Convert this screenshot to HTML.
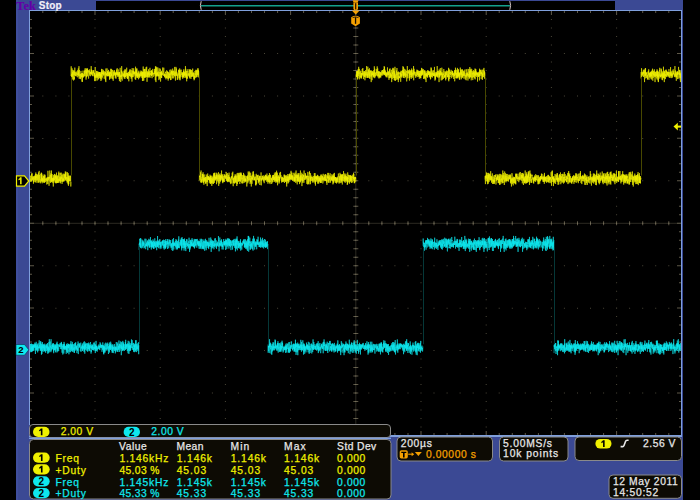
<!DOCTYPE html>
<html><head><meta charset="utf-8"><style>
html,body{margin:0;padding:0;background:#000;width:700px;height:500px;overflow:hidden}
body{position:relative;font-family:"Liberation Sans",sans-serif}
svg{position:absolute;left:0;top:0}
.t{position:absolute;white-space:nowrap;line-height:1;transform-origin:0 0}
.p{position:absolute;text-align:center;color:#000;font-weight:bold;font-size:10px}
</style></head><body>
<svg width="700" height="500" viewBox="0 0 700 500" shape-rendering="auto">
<rect x="16" y="0" width="667" height="500" fill="#3b4994"/>
<rect x="16" y="0" width="2" height="500" fill="#4252a4" opacity="0.6"/>
<rect x="96" y="1" width="519" height="9" fill="#000"/>
<rect x="30" y="11" width="651" height="424" fill="#000"/>
<path d="M42.3 53.0h1v1h-1zM55.4 53.0h1v1h-1zM68.4 53.0h1v1h-1zM81.5 53.0h1v1h-1zM94.5 53.0h1v1h-1zM107.5 53.0h1v1h-1zM120.6 53.0h1v1h-1zM133.6 53.0h1v1h-1zM146.7 53.0h1v1h-1zM159.7 53.0h1v1h-1zM172.7 53.0h1v1h-1zM185.8 53.0h1v1h-1zM198.8 53.0h1v1h-1zM211.9 53.0h1v1h-1zM224.9 53.0h1v1h-1zM237.9 53.0h1v1h-1zM251.0 53.0h1v1h-1zM264.0 53.0h1v1h-1zM277.1 53.0h1v1h-1zM290.1 53.0h1v1h-1zM303.1 53.0h1v1h-1zM316.2 53.0h1v1h-1zM329.2 53.0h1v1h-1zM342.3 53.0h1v1h-1zM355.3 53.0h1v1h-1zM368.3 53.0h1v1h-1zM381.4 53.0h1v1h-1zM394.4 53.0h1v1h-1zM407.5 53.0h1v1h-1zM420.5 53.0h1v1h-1zM433.5 53.0h1v1h-1zM446.6 53.0h1v1h-1zM459.6 53.0h1v1h-1zM472.7 53.0h1v1h-1zM485.7 53.0h1v1h-1zM498.7 53.0h1v1h-1zM511.8 53.0h1v1h-1zM524.8 53.0h1v1h-1zM537.9 53.0h1v1h-1zM550.9 53.0h1v1h-1zM563.9 53.0h1v1h-1zM577.0 53.0h1v1h-1zM590.0 53.0h1v1h-1zM603.1 53.0h1v1h-1zM616.1 53.0h1v1h-1zM629.1 53.0h1v1h-1zM642.2 53.0h1v1h-1zM655.2 53.0h1v1h-1zM668.3 53.0h1v1h-1zM42.3 95.4h1v1h-1zM55.4 95.4h1v1h-1zM68.4 95.4h1v1h-1zM81.5 95.4h1v1h-1zM94.5 95.4h1v1h-1zM107.5 95.4h1v1h-1zM120.6 95.4h1v1h-1zM133.6 95.4h1v1h-1zM146.7 95.4h1v1h-1zM159.7 95.4h1v1h-1zM172.7 95.4h1v1h-1zM185.8 95.4h1v1h-1zM198.8 95.4h1v1h-1zM211.9 95.4h1v1h-1zM224.9 95.4h1v1h-1zM237.9 95.4h1v1h-1zM251.0 95.4h1v1h-1zM264.0 95.4h1v1h-1zM277.1 95.4h1v1h-1zM290.1 95.4h1v1h-1zM303.1 95.4h1v1h-1zM316.2 95.4h1v1h-1zM329.2 95.4h1v1h-1zM342.3 95.4h1v1h-1zM355.3 95.4h1v1h-1zM368.3 95.4h1v1h-1zM381.4 95.4h1v1h-1zM394.4 95.4h1v1h-1zM407.5 95.4h1v1h-1zM420.5 95.4h1v1h-1zM433.5 95.4h1v1h-1zM446.6 95.4h1v1h-1zM459.6 95.4h1v1h-1zM472.7 95.4h1v1h-1zM485.7 95.4h1v1h-1zM498.7 95.4h1v1h-1zM511.8 95.4h1v1h-1zM524.8 95.4h1v1h-1zM537.9 95.4h1v1h-1zM550.9 95.4h1v1h-1zM563.9 95.4h1v1h-1zM577.0 95.4h1v1h-1zM590.0 95.4h1v1h-1zM603.1 95.4h1v1h-1zM616.1 95.4h1v1h-1zM629.1 95.4h1v1h-1zM642.2 95.4h1v1h-1zM655.2 95.4h1v1h-1zM668.3 95.4h1v1h-1zM42.3 137.9h1v1h-1zM55.4 137.9h1v1h-1zM68.4 137.9h1v1h-1zM81.5 137.9h1v1h-1zM94.5 137.9h1v1h-1zM107.5 137.9h1v1h-1zM120.6 137.9h1v1h-1zM133.6 137.9h1v1h-1zM146.7 137.9h1v1h-1zM159.7 137.9h1v1h-1zM172.7 137.9h1v1h-1zM185.8 137.9h1v1h-1zM198.8 137.9h1v1h-1zM211.9 137.9h1v1h-1zM224.9 137.9h1v1h-1zM237.9 137.9h1v1h-1zM251.0 137.9h1v1h-1zM264.0 137.9h1v1h-1zM277.1 137.9h1v1h-1zM290.1 137.9h1v1h-1zM303.1 137.9h1v1h-1zM316.2 137.9h1v1h-1zM329.2 137.9h1v1h-1zM342.3 137.9h1v1h-1zM355.3 137.9h1v1h-1zM368.3 137.9h1v1h-1zM381.4 137.9h1v1h-1zM394.4 137.9h1v1h-1zM407.5 137.9h1v1h-1zM420.5 137.9h1v1h-1zM433.5 137.9h1v1h-1zM446.6 137.9h1v1h-1zM459.6 137.9h1v1h-1zM472.7 137.9h1v1h-1zM485.7 137.9h1v1h-1zM498.7 137.9h1v1h-1zM511.8 137.9h1v1h-1zM524.8 137.9h1v1h-1zM537.9 137.9h1v1h-1zM550.9 137.9h1v1h-1zM563.9 137.9h1v1h-1zM577.0 137.9h1v1h-1zM590.0 137.9h1v1h-1zM603.1 137.9h1v1h-1zM616.1 137.9h1v1h-1zM629.1 137.9h1v1h-1zM642.2 137.9h1v1h-1zM655.2 137.9h1v1h-1zM668.3 137.9h1v1h-1zM42.3 180.3h1v1h-1zM55.4 180.3h1v1h-1zM68.4 180.3h1v1h-1zM81.5 180.3h1v1h-1zM94.5 180.3h1v1h-1zM107.5 180.3h1v1h-1zM120.6 180.3h1v1h-1zM133.6 180.3h1v1h-1zM146.7 180.3h1v1h-1zM159.7 180.3h1v1h-1zM172.7 180.3h1v1h-1zM185.8 180.3h1v1h-1zM198.8 180.3h1v1h-1zM211.9 180.3h1v1h-1zM224.9 180.3h1v1h-1zM237.9 180.3h1v1h-1zM251.0 180.3h1v1h-1zM264.0 180.3h1v1h-1zM277.1 180.3h1v1h-1zM290.1 180.3h1v1h-1zM303.1 180.3h1v1h-1zM316.2 180.3h1v1h-1zM329.2 180.3h1v1h-1zM342.3 180.3h1v1h-1zM355.3 180.3h1v1h-1zM368.3 180.3h1v1h-1zM381.4 180.3h1v1h-1zM394.4 180.3h1v1h-1zM407.5 180.3h1v1h-1zM420.5 180.3h1v1h-1zM433.5 180.3h1v1h-1zM446.6 180.3h1v1h-1zM459.6 180.3h1v1h-1zM472.7 180.3h1v1h-1zM485.7 180.3h1v1h-1zM498.7 180.3h1v1h-1zM511.8 180.3h1v1h-1zM524.8 180.3h1v1h-1zM537.9 180.3h1v1h-1zM550.9 180.3h1v1h-1zM563.9 180.3h1v1h-1zM577.0 180.3h1v1h-1zM590.0 180.3h1v1h-1zM603.1 180.3h1v1h-1zM616.1 180.3h1v1h-1zM629.1 180.3h1v1h-1zM642.2 180.3h1v1h-1zM655.2 180.3h1v1h-1zM668.3 180.3h1v1h-1zM42.3 265.2h1v1h-1zM55.4 265.2h1v1h-1zM68.4 265.2h1v1h-1zM81.5 265.2h1v1h-1zM94.5 265.2h1v1h-1zM107.5 265.2h1v1h-1zM120.6 265.2h1v1h-1zM133.6 265.2h1v1h-1zM146.7 265.2h1v1h-1zM159.7 265.2h1v1h-1zM172.7 265.2h1v1h-1zM185.8 265.2h1v1h-1zM198.8 265.2h1v1h-1zM211.9 265.2h1v1h-1zM224.9 265.2h1v1h-1zM237.9 265.2h1v1h-1zM251.0 265.2h1v1h-1zM264.0 265.2h1v1h-1zM277.1 265.2h1v1h-1zM290.1 265.2h1v1h-1zM303.1 265.2h1v1h-1zM316.2 265.2h1v1h-1zM329.2 265.2h1v1h-1zM342.3 265.2h1v1h-1zM355.3 265.2h1v1h-1zM368.3 265.2h1v1h-1zM381.4 265.2h1v1h-1zM394.4 265.2h1v1h-1zM407.5 265.2h1v1h-1zM420.5 265.2h1v1h-1zM433.5 265.2h1v1h-1zM446.6 265.2h1v1h-1zM459.6 265.2h1v1h-1zM472.7 265.2h1v1h-1zM485.7 265.2h1v1h-1zM498.7 265.2h1v1h-1zM511.8 265.2h1v1h-1zM524.8 265.2h1v1h-1zM537.9 265.2h1v1h-1zM550.9 265.2h1v1h-1zM563.9 265.2h1v1h-1zM577.0 265.2h1v1h-1zM590.0 265.2h1v1h-1zM603.1 265.2h1v1h-1zM616.1 265.2h1v1h-1zM629.1 265.2h1v1h-1zM642.2 265.2h1v1h-1zM655.2 265.2h1v1h-1zM668.3 265.2h1v1h-1zM42.3 307.7h1v1h-1zM55.4 307.7h1v1h-1zM68.4 307.7h1v1h-1zM81.5 307.7h1v1h-1zM94.5 307.7h1v1h-1zM107.5 307.7h1v1h-1zM120.6 307.7h1v1h-1zM133.6 307.7h1v1h-1zM146.7 307.7h1v1h-1zM159.7 307.7h1v1h-1zM172.7 307.7h1v1h-1zM185.8 307.7h1v1h-1zM198.8 307.7h1v1h-1zM211.9 307.7h1v1h-1zM224.9 307.7h1v1h-1zM237.9 307.7h1v1h-1zM251.0 307.7h1v1h-1zM264.0 307.7h1v1h-1zM277.1 307.7h1v1h-1zM290.1 307.7h1v1h-1zM303.1 307.7h1v1h-1zM316.2 307.7h1v1h-1zM329.2 307.7h1v1h-1zM342.3 307.7h1v1h-1zM355.3 307.7h1v1h-1zM368.3 307.7h1v1h-1zM381.4 307.7h1v1h-1zM394.4 307.7h1v1h-1zM407.5 307.7h1v1h-1zM420.5 307.7h1v1h-1zM433.5 307.7h1v1h-1zM446.6 307.7h1v1h-1zM459.6 307.7h1v1h-1zM472.7 307.7h1v1h-1zM485.7 307.7h1v1h-1zM498.7 307.7h1v1h-1zM511.8 307.7h1v1h-1zM524.8 307.7h1v1h-1zM537.9 307.7h1v1h-1zM550.9 307.7h1v1h-1zM563.9 307.7h1v1h-1zM577.0 307.7h1v1h-1zM590.0 307.7h1v1h-1zM603.1 307.7h1v1h-1zM616.1 307.7h1v1h-1zM629.1 307.7h1v1h-1zM642.2 307.7h1v1h-1zM655.2 307.7h1v1h-1zM668.3 307.7h1v1h-1zM42.3 350.1h1v1h-1zM55.4 350.1h1v1h-1zM68.4 350.1h1v1h-1zM81.5 350.1h1v1h-1zM94.5 350.1h1v1h-1zM107.5 350.1h1v1h-1zM120.6 350.1h1v1h-1zM133.6 350.1h1v1h-1zM146.7 350.1h1v1h-1zM159.7 350.1h1v1h-1zM172.7 350.1h1v1h-1zM185.8 350.1h1v1h-1zM198.8 350.1h1v1h-1zM211.9 350.1h1v1h-1zM224.9 350.1h1v1h-1zM237.9 350.1h1v1h-1zM251.0 350.1h1v1h-1zM264.0 350.1h1v1h-1zM277.1 350.1h1v1h-1zM290.1 350.1h1v1h-1zM303.1 350.1h1v1h-1zM316.2 350.1h1v1h-1zM329.2 350.1h1v1h-1zM342.3 350.1h1v1h-1zM355.3 350.1h1v1h-1zM368.3 350.1h1v1h-1zM381.4 350.1h1v1h-1zM394.4 350.1h1v1h-1zM407.5 350.1h1v1h-1zM420.5 350.1h1v1h-1zM433.5 350.1h1v1h-1zM446.6 350.1h1v1h-1zM459.6 350.1h1v1h-1zM472.7 350.1h1v1h-1zM485.7 350.1h1v1h-1zM498.7 350.1h1v1h-1zM511.8 350.1h1v1h-1zM524.8 350.1h1v1h-1zM537.9 350.1h1v1h-1zM550.9 350.1h1v1h-1zM563.9 350.1h1v1h-1zM577.0 350.1h1v1h-1zM590.0 350.1h1v1h-1zM603.1 350.1h1v1h-1zM616.1 350.1h1v1h-1zM629.1 350.1h1v1h-1zM642.2 350.1h1v1h-1zM655.2 350.1h1v1h-1zM668.3 350.1h1v1h-1zM42.3 392.6h1v1h-1zM55.4 392.6h1v1h-1zM68.4 392.6h1v1h-1zM81.5 392.6h1v1h-1zM94.5 392.6h1v1h-1zM107.5 392.6h1v1h-1zM120.6 392.6h1v1h-1zM133.6 392.6h1v1h-1zM146.7 392.6h1v1h-1zM159.7 392.6h1v1h-1zM172.7 392.6h1v1h-1zM185.8 392.6h1v1h-1zM198.8 392.6h1v1h-1zM211.9 392.6h1v1h-1zM224.9 392.6h1v1h-1zM237.9 392.6h1v1h-1zM251.0 392.6h1v1h-1zM264.0 392.6h1v1h-1zM277.1 392.6h1v1h-1zM290.1 392.6h1v1h-1zM303.1 392.6h1v1h-1zM316.2 392.6h1v1h-1zM329.2 392.6h1v1h-1zM342.3 392.6h1v1h-1zM355.3 392.6h1v1h-1zM368.3 392.6h1v1h-1zM381.4 392.6h1v1h-1zM394.4 392.6h1v1h-1zM407.5 392.6h1v1h-1zM420.5 392.6h1v1h-1zM433.5 392.6h1v1h-1zM446.6 392.6h1v1h-1zM459.6 392.6h1v1h-1zM472.7 392.6h1v1h-1zM485.7 392.6h1v1h-1zM498.7 392.6h1v1h-1zM511.8 392.6h1v1h-1zM524.8 392.6h1v1h-1zM537.9 392.6h1v1h-1zM550.9 392.6h1v1h-1zM563.9 392.6h1v1h-1zM577.0 392.6h1v1h-1zM590.0 392.6h1v1h-1zM603.1 392.6h1v1h-1zM616.1 392.6h1v1h-1zM629.1 392.6h1v1h-1zM642.2 392.6h1v1h-1zM655.2 392.6h1v1h-1zM668.3 392.6h1v1h-1zM94.5 19.0h1v1h-1zM94.5 27.5h1v1h-1zM94.5 36.0h1v1h-1zM94.5 44.5h1v1h-1zM94.5 53.0h1v1h-1zM94.5 61.4h1v1h-1zM94.5 69.9h1v1h-1zM94.5 78.4h1v1h-1zM94.5 86.9h1v1h-1zM94.5 95.4h1v1h-1zM94.5 103.9h1v1h-1zM94.5 112.4h1v1h-1zM94.5 120.9h1v1h-1zM94.5 129.4h1v1h-1zM94.5 137.8h1v1h-1zM94.5 146.3h1v1h-1zM94.5 154.8h1v1h-1zM94.5 163.3h1v1h-1zM94.5 171.8h1v1h-1zM94.5 180.3h1v1h-1zM94.5 188.8h1v1h-1zM94.5 197.3h1v1h-1zM94.5 205.8h1v1h-1zM94.5 214.3h1v1h-1zM94.5 222.8h1v1h-1zM94.5 231.2h1v1h-1zM94.5 239.7h1v1h-1zM94.5 248.2h1v1h-1zM94.5 256.7h1v1h-1zM94.5 265.2h1v1h-1zM94.5 273.7h1v1h-1zM94.5 282.2h1v1h-1zM94.5 290.7h1v1h-1zM94.5 299.2h1v1h-1zM94.5 307.6h1v1h-1zM94.5 316.1h1v1h-1zM94.5 324.6h1v1h-1zM94.5 333.1h1v1h-1zM94.5 341.6h1v1h-1zM94.5 350.1h1v1h-1zM94.5 358.6h1v1h-1zM94.5 367.1h1v1h-1zM94.5 375.6h1v1h-1zM94.5 384.1h1v1h-1zM94.5 392.6h1v1h-1zM94.5 401.0h1v1h-1zM94.5 409.5h1v1h-1zM94.5 418.0h1v1h-1zM94.5 426.5h1v1h-1zM159.7 19.0h1v1h-1zM159.7 27.5h1v1h-1zM159.7 36.0h1v1h-1zM159.7 44.5h1v1h-1zM159.7 53.0h1v1h-1zM159.7 61.4h1v1h-1zM159.7 69.9h1v1h-1zM159.7 78.4h1v1h-1zM159.7 86.9h1v1h-1zM159.7 95.4h1v1h-1zM159.7 103.9h1v1h-1zM159.7 112.4h1v1h-1zM159.7 120.9h1v1h-1zM159.7 129.4h1v1h-1zM159.7 137.8h1v1h-1zM159.7 146.3h1v1h-1zM159.7 154.8h1v1h-1zM159.7 163.3h1v1h-1zM159.7 171.8h1v1h-1zM159.7 180.3h1v1h-1zM159.7 188.8h1v1h-1zM159.7 197.3h1v1h-1zM159.7 205.8h1v1h-1zM159.7 214.3h1v1h-1zM159.7 222.8h1v1h-1zM159.7 231.2h1v1h-1zM159.7 239.7h1v1h-1zM159.7 248.2h1v1h-1zM159.7 256.7h1v1h-1zM159.7 265.2h1v1h-1zM159.7 273.7h1v1h-1zM159.7 282.2h1v1h-1zM159.7 290.7h1v1h-1zM159.7 299.2h1v1h-1zM159.7 307.6h1v1h-1zM159.7 316.1h1v1h-1zM159.7 324.6h1v1h-1zM159.7 333.1h1v1h-1zM159.7 341.6h1v1h-1zM159.7 350.1h1v1h-1zM159.7 358.6h1v1h-1zM159.7 367.1h1v1h-1zM159.7 375.6h1v1h-1zM159.7 384.1h1v1h-1zM159.7 392.6h1v1h-1zM159.7 401.0h1v1h-1zM159.7 409.5h1v1h-1zM159.7 418.0h1v1h-1zM159.7 426.5h1v1h-1zM224.9 19.0h1v1h-1zM224.9 27.5h1v1h-1zM224.9 36.0h1v1h-1zM224.9 44.5h1v1h-1zM224.9 53.0h1v1h-1zM224.9 61.4h1v1h-1zM224.9 69.9h1v1h-1zM224.9 78.4h1v1h-1zM224.9 86.9h1v1h-1zM224.9 95.4h1v1h-1zM224.9 103.9h1v1h-1zM224.9 112.4h1v1h-1zM224.9 120.9h1v1h-1zM224.9 129.4h1v1h-1zM224.9 137.8h1v1h-1zM224.9 146.3h1v1h-1zM224.9 154.8h1v1h-1zM224.9 163.3h1v1h-1zM224.9 171.8h1v1h-1zM224.9 180.3h1v1h-1zM224.9 188.8h1v1h-1zM224.9 197.3h1v1h-1zM224.9 205.8h1v1h-1zM224.9 214.3h1v1h-1zM224.9 222.8h1v1h-1zM224.9 231.2h1v1h-1zM224.9 239.7h1v1h-1zM224.9 248.2h1v1h-1zM224.9 256.7h1v1h-1zM224.9 265.2h1v1h-1zM224.9 273.7h1v1h-1zM224.9 282.2h1v1h-1zM224.9 290.7h1v1h-1zM224.9 299.2h1v1h-1zM224.9 307.6h1v1h-1zM224.9 316.1h1v1h-1zM224.9 324.6h1v1h-1zM224.9 333.1h1v1h-1zM224.9 341.6h1v1h-1zM224.9 350.1h1v1h-1zM224.9 358.6h1v1h-1zM224.9 367.1h1v1h-1zM224.9 375.6h1v1h-1zM224.9 384.1h1v1h-1zM224.9 392.6h1v1h-1zM224.9 401.0h1v1h-1zM224.9 409.5h1v1h-1zM224.9 418.0h1v1h-1zM224.9 426.5h1v1h-1zM290.1 19.0h1v1h-1zM290.1 27.5h1v1h-1zM290.1 36.0h1v1h-1zM290.1 44.5h1v1h-1zM290.1 53.0h1v1h-1zM290.1 61.4h1v1h-1zM290.1 69.9h1v1h-1zM290.1 78.4h1v1h-1zM290.1 86.9h1v1h-1zM290.1 95.4h1v1h-1zM290.1 103.9h1v1h-1zM290.1 112.4h1v1h-1zM290.1 120.9h1v1h-1zM290.1 129.4h1v1h-1zM290.1 137.8h1v1h-1zM290.1 146.3h1v1h-1zM290.1 154.8h1v1h-1zM290.1 163.3h1v1h-1zM290.1 171.8h1v1h-1zM290.1 180.3h1v1h-1zM290.1 188.8h1v1h-1zM290.1 197.3h1v1h-1zM290.1 205.8h1v1h-1zM290.1 214.3h1v1h-1zM290.1 222.8h1v1h-1zM290.1 231.2h1v1h-1zM290.1 239.7h1v1h-1zM290.1 248.2h1v1h-1zM290.1 256.7h1v1h-1zM290.1 265.2h1v1h-1zM290.1 273.7h1v1h-1zM290.1 282.2h1v1h-1zM290.1 290.7h1v1h-1zM290.1 299.2h1v1h-1zM290.1 307.6h1v1h-1zM290.1 316.1h1v1h-1zM290.1 324.6h1v1h-1zM290.1 333.1h1v1h-1zM290.1 341.6h1v1h-1zM290.1 350.1h1v1h-1zM290.1 358.6h1v1h-1zM290.1 367.1h1v1h-1zM290.1 375.6h1v1h-1zM290.1 384.1h1v1h-1zM290.1 392.6h1v1h-1zM290.1 401.0h1v1h-1zM290.1 409.5h1v1h-1zM290.1 418.0h1v1h-1zM290.1 426.5h1v1h-1zM420.5 19.0h1v1h-1zM420.5 27.5h1v1h-1zM420.5 36.0h1v1h-1zM420.5 44.5h1v1h-1zM420.5 53.0h1v1h-1zM420.5 61.4h1v1h-1zM420.5 69.9h1v1h-1zM420.5 78.4h1v1h-1zM420.5 86.9h1v1h-1zM420.5 95.4h1v1h-1zM420.5 103.9h1v1h-1zM420.5 112.4h1v1h-1zM420.5 120.9h1v1h-1zM420.5 129.4h1v1h-1zM420.5 137.8h1v1h-1zM420.5 146.3h1v1h-1zM420.5 154.8h1v1h-1zM420.5 163.3h1v1h-1zM420.5 171.8h1v1h-1zM420.5 180.3h1v1h-1zM420.5 188.8h1v1h-1zM420.5 197.3h1v1h-1zM420.5 205.8h1v1h-1zM420.5 214.3h1v1h-1zM420.5 222.8h1v1h-1zM420.5 231.2h1v1h-1zM420.5 239.7h1v1h-1zM420.5 248.2h1v1h-1zM420.5 256.7h1v1h-1zM420.5 265.2h1v1h-1zM420.5 273.7h1v1h-1zM420.5 282.2h1v1h-1zM420.5 290.7h1v1h-1zM420.5 299.2h1v1h-1zM420.5 307.6h1v1h-1zM420.5 316.1h1v1h-1zM420.5 324.6h1v1h-1zM420.5 333.1h1v1h-1zM420.5 341.6h1v1h-1zM420.5 350.1h1v1h-1zM420.5 358.6h1v1h-1zM420.5 367.1h1v1h-1zM420.5 375.6h1v1h-1zM420.5 384.1h1v1h-1zM420.5 392.6h1v1h-1zM420.5 401.0h1v1h-1zM420.5 409.5h1v1h-1zM420.5 418.0h1v1h-1zM420.5 426.5h1v1h-1zM485.7 19.0h1v1h-1zM485.7 27.5h1v1h-1zM485.7 36.0h1v1h-1zM485.7 44.5h1v1h-1zM485.7 53.0h1v1h-1zM485.7 61.4h1v1h-1zM485.7 69.9h1v1h-1zM485.7 78.4h1v1h-1zM485.7 86.9h1v1h-1zM485.7 95.4h1v1h-1zM485.7 103.9h1v1h-1zM485.7 112.4h1v1h-1zM485.7 120.9h1v1h-1zM485.7 129.4h1v1h-1zM485.7 137.8h1v1h-1zM485.7 146.3h1v1h-1zM485.7 154.8h1v1h-1zM485.7 163.3h1v1h-1zM485.7 171.8h1v1h-1zM485.7 180.3h1v1h-1zM485.7 188.8h1v1h-1zM485.7 197.3h1v1h-1zM485.7 205.8h1v1h-1zM485.7 214.3h1v1h-1zM485.7 222.8h1v1h-1zM485.7 231.2h1v1h-1zM485.7 239.7h1v1h-1zM485.7 248.2h1v1h-1zM485.7 256.7h1v1h-1zM485.7 265.2h1v1h-1zM485.7 273.7h1v1h-1zM485.7 282.2h1v1h-1zM485.7 290.7h1v1h-1zM485.7 299.2h1v1h-1zM485.7 307.6h1v1h-1zM485.7 316.1h1v1h-1zM485.7 324.6h1v1h-1zM485.7 333.1h1v1h-1zM485.7 341.6h1v1h-1zM485.7 350.1h1v1h-1zM485.7 358.6h1v1h-1zM485.7 367.1h1v1h-1zM485.7 375.6h1v1h-1zM485.7 384.1h1v1h-1zM485.7 392.6h1v1h-1zM485.7 401.0h1v1h-1zM485.7 409.5h1v1h-1zM485.7 418.0h1v1h-1zM485.7 426.5h1v1h-1zM550.9 19.0h1v1h-1zM550.9 27.5h1v1h-1zM550.9 36.0h1v1h-1zM550.9 44.5h1v1h-1zM550.9 53.0h1v1h-1zM550.9 61.4h1v1h-1zM550.9 69.9h1v1h-1zM550.9 78.4h1v1h-1zM550.9 86.9h1v1h-1zM550.9 95.4h1v1h-1zM550.9 103.9h1v1h-1zM550.9 112.4h1v1h-1zM550.9 120.9h1v1h-1zM550.9 129.4h1v1h-1zM550.9 137.8h1v1h-1zM550.9 146.3h1v1h-1zM550.9 154.8h1v1h-1zM550.9 163.3h1v1h-1zM550.9 171.8h1v1h-1zM550.9 180.3h1v1h-1zM550.9 188.8h1v1h-1zM550.9 197.3h1v1h-1zM550.9 205.8h1v1h-1zM550.9 214.3h1v1h-1zM550.9 222.8h1v1h-1zM550.9 231.2h1v1h-1zM550.9 239.7h1v1h-1zM550.9 248.2h1v1h-1zM550.9 256.7h1v1h-1zM550.9 265.2h1v1h-1zM550.9 273.7h1v1h-1zM550.9 282.2h1v1h-1zM550.9 290.7h1v1h-1zM550.9 299.2h1v1h-1zM550.9 307.6h1v1h-1zM550.9 316.1h1v1h-1zM550.9 324.6h1v1h-1zM550.9 333.1h1v1h-1zM550.9 341.6h1v1h-1zM550.9 350.1h1v1h-1zM550.9 358.6h1v1h-1zM550.9 367.1h1v1h-1zM550.9 375.6h1v1h-1zM550.9 384.1h1v1h-1zM550.9 392.6h1v1h-1zM550.9 401.0h1v1h-1zM550.9 409.5h1v1h-1zM550.9 418.0h1v1h-1zM550.9 426.5h1v1h-1zM616.1 19.0h1v1h-1zM616.1 27.5h1v1h-1zM616.1 36.0h1v1h-1zM616.1 44.5h1v1h-1zM616.1 53.0h1v1h-1zM616.1 61.4h1v1h-1zM616.1 69.9h1v1h-1zM616.1 78.4h1v1h-1zM616.1 86.9h1v1h-1zM616.1 95.4h1v1h-1zM616.1 103.9h1v1h-1zM616.1 112.4h1v1h-1zM616.1 120.9h1v1h-1zM616.1 129.4h1v1h-1zM616.1 137.8h1v1h-1zM616.1 146.3h1v1h-1zM616.1 154.8h1v1h-1zM616.1 163.3h1v1h-1zM616.1 171.8h1v1h-1zM616.1 180.3h1v1h-1zM616.1 188.8h1v1h-1zM616.1 197.3h1v1h-1zM616.1 205.8h1v1h-1zM616.1 214.3h1v1h-1zM616.1 222.8h1v1h-1zM616.1 231.2h1v1h-1zM616.1 239.7h1v1h-1zM616.1 248.2h1v1h-1zM616.1 256.7h1v1h-1zM616.1 265.2h1v1h-1zM616.1 273.7h1v1h-1zM616.1 282.2h1v1h-1zM616.1 290.7h1v1h-1zM616.1 299.2h1v1h-1zM616.1 307.6h1v1h-1zM616.1 316.1h1v1h-1zM616.1 324.6h1v1h-1zM616.1 333.1h1v1h-1zM616.1 341.6h1v1h-1zM616.1 350.1h1v1h-1zM616.1 358.6h1v1h-1zM616.1 367.1h1v1h-1zM616.1 375.6h1v1h-1zM616.1 384.1h1v1h-1zM616.1 392.6h1v1h-1zM616.1 401.0h1v1h-1zM616.1 409.5h1v1h-1zM616.1 418.0h1v1h-1zM616.1 426.5h1v1h-1z" fill="#4a4638"/>
<rect x="355.3" y="11" width="1" height="424" fill="#2c2a22"/>
<rect x="30" y="222.8" width="651" height="1" fill="#2c2a22"/>
<path d="M42.3 221.2h1v4h-1zM353.3 19.0h5v1h-5zM55.4 221.2h1v4h-1zM353.3 27.5h5v1h-5zM68.4 221.2h1v4h-1zM353.3 36.0h5v1h-5zM81.5 221.2h1v4h-1zM353.3 44.5h5v1h-5zM94.5 221.2h1v4h-1zM353.3 53.0h5v1h-5zM107.5 221.2h1v4h-1zM353.3 61.4h5v1h-5zM120.6 221.2h1v4h-1zM353.3 69.9h5v1h-5zM133.6 221.2h1v4h-1zM353.3 78.4h5v1h-5zM146.7 221.2h1v4h-1zM353.3 86.9h5v1h-5zM159.7 221.2h1v4h-1zM353.3 95.4h5v1h-5zM172.7 221.2h1v4h-1zM353.3 103.9h5v1h-5zM185.8 221.2h1v4h-1zM353.3 112.4h5v1h-5zM198.8 221.2h1v4h-1zM353.3 120.9h5v1h-5zM211.9 221.2h1v4h-1zM353.3 129.4h5v1h-5zM224.9 221.2h1v4h-1zM353.3 137.8h5v1h-5zM237.9 221.2h1v4h-1zM353.3 146.3h5v1h-5zM251.0 221.2h1v4h-1zM353.3 154.8h5v1h-5zM264.0 221.2h1v4h-1zM353.3 163.3h5v1h-5zM277.1 221.2h1v4h-1zM353.3 171.8h5v1h-5zM290.1 221.2h1v4h-1zM353.3 180.3h5v1h-5zM303.1 221.2h1v4h-1zM353.3 188.8h5v1h-5zM316.2 221.2h1v4h-1zM353.3 197.3h5v1h-5zM329.2 221.2h1v4h-1zM353.3 205.8h5v1h-5zM342.3 221.2h1v4h-1zM353.3 214.3h5v1h-5zM355.3 221.2h1v4h-1zM353.3 222.8h5v1h-5zM368.3 221.2h1v4h-1zM353.3 231.2h5v1h-5zM381.4 221.2h1v4h-1zM353.3 239.7h5v1h-5zM394.4 221.2h1v4h-1zM353.3 248.2h5v1h-5zM407.5 221.2h1v4h-1zM353.3 256.7h5v1h-5zM420.5 221.2h1v4h-1zM353.3 265.2h5v1h-5zM433.5 221.2h1v4h-1zM353.3 273.7h5v1h-5zM446.6 221.2h1v4h-1zM353.3 282.2h5v1h-5zM459.6 221.2h1v4h-1zM353.3 290.7h5v1h-5zM472.7 221.2h1v4h-1zM353.3 299.2h5v1h-5zM485.7 221.2h1v4h-1zM353.3 307.6h5v1h-5zM498.7 221.2h1v4h-1zM353.3 316.1h5v1h-5zM511.8 221.2h1v4h-1zM353.3 324.6h5v1h-5zM524.8 221.2h1v4h-1zM353.3 333.1h5v1h-5zM537.9 221.2h1v4h-1zM353.3 341.6h5v1h-5zM550.9 221.2h1v4h-1zM353.3 350.1h5v1h-5zM563.9 221.2h1v4h-1zM353.3 358.6h5v1h-5zM577.0 221.2h1v4h-1zM353.3 367.1h5v1h-5zM590.0 221.2h1v4h-1zM353.3 375.6h5v1h-5zM603.1 221.2h1v4h-1zM353.3 384.1h5v1h-5zM616.1 221.2h1v4h-1zM353.3 392.6h5v1h-5zM629.1 221.2h1v4h-1zM353.3 401.0h5v1h-5zM642.2 221.2h1v4h-1zM353.3 409.5h5v1h-5zM655.2 221.2h1v4h-1zM353.3 418.0h5v1h-5zM668.3 221.2h1v4h-1zM353.3 426.5h5v1h-5zM42.3 11h1v2h-1zM42.3 433h1v2h-1zM30 19.0h2v1h-2zM679 19.0h2v1h-2zM55.4 11h1v2h-1zM55.4 433h1v2h-1zM30 27.5h2v1h-2zM679 27.5h2v1h-2zM68.4 11h1v2h-1zM68.4 433h1v2h-1zM30 36.0h2v1h-2zM679 36.0h2v1h-2zM81.5 11h1v2h-1zM81.5 433h1v2h-1zM30 44.5h2v1h-2zM679 44.5h2v1h-2zM94.5 11h1v4h-1zM94.5 431h1v4h-1zM30 53.0h4v1h-4zM677 53.0h4v1h-4zM107.5 11h1v2h-1zM107.5 433h1v2h-1zM30 61.4h2v1h-2zM679 61.4h2v1h-2zM120.6 11h1v2h-1zM120.6 433h1v2h-1zM30 69.9h2v1h-2zM679 69.9h2v1h-2zM133.6 11h1v2h-1zM133.6 433h1v2h-1zM30 78.4h2v1h-2zM679 78.4h2v1h-2zM146.7 11h1v2h-1zM146.7 433h1v2h-1zM30 86.9h2v1h-2zM679 86.9h2v1h-2zM159.7 11h1v4h-1zM159.7 431h1v4h-1zM30 95.4h4v1h-4zM677 95.4h4v1h-4zM172.7 11h1v2h-1zM172.7 433h1v2h-1zM30 103.9h2v1h-2zM679 103.9h2v1h-2zM185.8 11h1v2h-1zM185.8 433h1v2h-1zM30 112.4h2v1h-2zM679 112.4h2v1h-2zM198.8 11h1v2h-1zM198.8 433h1v2h-1zM30 120.9h2v1h-2zM679 120.9h2v1h-2zM211.9 11h1v2h-1zM211.9 433h1v2h-1zM30 129.4h2v1h-2zM679 129.4h2v1h-2zM224.9 11h1v4h-1zM224.9 431h1v4h-1zM30 137.8h4v1h-4zM677 137.8h4v1h-4zM237.9 11h1v2h-1zM237.9 433h1v2h-1zM30 146.3h2v1h-2zM679 146.3h2v1h-2zM251.0 11h1v2h-1zM251.0 433h1v2h-1zM30 154.8h2v1h-2zM679 154.8h2v1h-2zM264.0 11h1v2h-1zM264.0 433h1v2h-1zM30 163.3h2v1h-2zM679 163.3h2v1h-2zM277.1 11h1v2h-1zM277.1 433h1v2h-1zM30 171.8h2v1h-2zM679 171.8h2v1h-2zM290.1 11h1v4h-1zM290.1 431h1v4h-1zM30 180.3h4v1h-4zM677 180.3h4v1h-4zM303.1 11h1v2h-1zM303.1 433h1v2h-1zM30 188.8h2v1h-2zM679 188.8h2v1h-2zM316.2 11h1v2h-1zM316.2 433h1v2h-1zM30 197.3h2v1h-2zM679 197.3h2v1h-2zM329.2 11h1v2h-1zM329.2 433h1v2h-1zM30 205.8h2v1h-2zM679 205.8h2v1h-2zM342.3 11h1v2h-1zM342.3 433h1v2h-1zM30 214.3h2v1h-2zM679 214.3h2v1h-2zM355.3 11h1v4h-1zM355.3 431h1v4h-1zM30 222.8h4v1h-4zM677 222.8h4v1h-4zM368.3 11h1v2h-1zM368.3 433h1v2h-1zM30 231.2h2v1h-2zM679 231.2h2v1h-2zM381.4 11h1v2h-1zM381.4 433h1v2h-1zM30 239.7h2v1h-2zM679 239.7h2v1h-2zM394.4 11h1v2h-1zM394.4 433h1v2h-1zM30 248.2h2v1h-2zM679 248.2h2v1h-2zM407.5 11h1v2h-1zM407.5 433h1v2h-1zM30 256.7h2v1h-2zM679 256.7h2v1h-2zM420.5 11h1v4h-1zM420.5 431h1v4h-1zM30 265.2h4v1h-4zM677 265.2h4v1h-4zM433.5 11h1v2h-1zM433.5 433h1v2h-1zM30 273.7h2v1h-2zM679 273.7h2v1h-2zM446.6 11h1v2h-1zM446.6 433h1v2h-1zM30 282.2h2v1h-2zM679 282.2h2v1h-2zM459.6 11h1v2h-1zM459.6 433h1v2h-1zM30 290.7h2v1h-2zM679 290.7h2v1h-2zM472.7 11h1v2h-1zM472.7 433h1v2h-1zM30 299.2h2v1h-2zM679 299.2h2v1h-2zM485.7 11h1v4h-1zM485.7 431h1v4h-1zM30 307.6h4v1h-4zM677 307.6h4v1h-4zM498.7 11h1v2h-1zM498.7 433h1v2h-1zM30 316.1h2v1h-2zM679 316.1h2v1h-2zM511.8 11h1v2h-1zM511.8 433h1v2h-1zM30 324.6h2v1h-2zM679 324.6h2v1h-2zM524.8 11h1v2h-1zM524.8 433h1v2h-1zM30 333.1h2v1h-2zM679 333.1h2v1h-2zM537.9 11h1v2h-1zM537.9 433h1v2h-1zM30 341.6h2v1h-2zM679 341.6h2v1h-2zM550.9 11h1v4h-1zM550.9 431h1v4h-1zM30 350.1h4v1h-4zM677 350.1h4v1h-4zM563.9 11h1v2h-1zM563.9 433h1v2h-1zM30 358.6h2v1h-2zM679 358.6h2v1h-2zM577.0 11h1v2h-1zM577.0 433h1v2h-1zM30 367.1h2v1h-2zM679 367.1h2v1h-2zM590.0 11h1v2h-1zM590.0 433h1v2h-1zM30 375.6h2v1h-2zM679 375.6h2v1h-2zM603.1 11h1v2h-1zM603.1 433h1v2h-1zM30 384.1h2v1h-2zM679 384.1h2v1h-2zM616.1 11h1v4h-1zM616.1 431h1v4h-1zM30 392.6h4v1h-4zM677 392.6h4v1h-4zM629.1 11h1v2h-1zM629.1 433h1v2h-1zM30 401.0h2v1h-2zM679 401.0h2v1h-2zM642.2 11h1v2h-1zM642.2 433h1v2h-1zM30 409.5h2v1h-2zM679 409.5h2v1h-2zM655.2 11h1v2h-1zM655.2 433h1v2h-1zM30 418.0h2v1h-2zM679 418.0h2v1h-2zM668.3 11h1v2h-1zM668.3 433h1v2h-1zM30 426.5h2v1h-2zM679 426.5h2v1h-2z" fill="#5e5848"/>
<path d="M42.3 222.8h1v1h-1zM355.3 19.0h1v1h-1zM55.4 222.8h1v1h-1zM355.3 27.5h1v1h-1zM68.4 222.8h1v1h-1zM355.3 36.0h1v1h-1zM81.5 222.8h1v1h-1zM355.3 44.5h1v1h-1zM94.5 222.8h1v1h-1zM355.3 53.0h1v1h-1zM107.5 222.8h1v1h-1zM355.3 61.4h1v1h-1zM120.6 222.8h1v1h-1zM355.3 69.9h1v1h-1zM133.6 222.8h1v1h-1zM355.3 78.4h1v1h-1zM146.7 222.8h1v1h-1zM355.3 86.9h1v1h-1zM159.7 222.8h1v1h-1zM355.3 95.4h1v1h-1zM172.7 222.8h1v1h-1zM355.3 103.9h1v1h-1zM185.8 222.8h1v1h-1zM355.3 112.4h1v1h-1zM198.8 222.8h1v1h-1zM355.3 120.9h1v1h-1zM211.9 222.8h1v1h-1zM355.3 129.4h1v1h-1zM224.9 222.8h1v1h-1zM355.3 137.8h1v1h-1zM237.9 222.8h1v1h-1zM355.3 146.3h1v1h-1zM251.0 222.8h1v1h-1zM355.3 154.8h1v1h-1zM264.0 222.8h1v1h-1zM355.3 163.3h1v1h-1zM277.1 222.8h1v1h-1zM355.3 171.8h1v1h-1zM290.1 222.8h1v1h-1zM355.3 180.3h1v1h-1zM303.1 222.8h1v1h-1zM355.3 188.8h1v1h-1zM316.2 222.8h1v1h-1zM355.3 197.3h1v1h-1zM329.2 222.8h1v1h-1zM355.3 205.8h1v1h-1zM342.3 222.8h1v1h-1zM355.3 214.3h1v1h-1zM355.3 222.8h1v1h-1zM355.3 222.8h1v1h-1zM368.3 222.8h1v1h-1zM355.3 231.2h1v1h-1zM381.4 222.8h1v1h-1zM355.3 239.7h1v1h-1zM394.4 222.8h1v1h-1zM355.3 248.2h1v1h-1zM407.5 222.8h1v1h-1zM355.3 256.7h1v1h-1zM420.5 222.8h1v1h-1zM355.3 265.2h1v1h-1zM433.5 222.8h1v1h-1zM355.3 273.7h1v1h-1zM446.6 222.8h1v1h-1zM355.3 282.2h1v1h-1zM459.6 222.8h1v1h-1zM355.3 290.7h1v1h-1zM472.7 222.8h1v1h-1zM355.3 299.2h1v1h-1zM485.7 222.8h1v1h-1zM355.3 307.6h1v1h-1zM498.7 222.8h1v1h-1zM355.3 316.1h1v1h-1zM511.8 222.8h1v1h-1zM355.3 324.6h1v1h-1zM524.8 222.8h1v1h-1zM355.3 333.1h1v1h-1zM537.9 222.8h1v1h-1zM355.3 341.6h1v1h-1zM550.9 222.8h1v1h-1zM355.3 350.1h1v1h-1zM563.9 222.8h1v1h-1zM355.3 358.6h1v1h-1zM577.0 222.8h1v1h-1zM355.3 367.1h1v1h-1zM590.0 222.8h1v1h-1zM355.3 375.6h1v1h-1zM603.1 222.8h1v1h-1zM355.3 384.1h1v1h-1zM616.1 222.8h1v1h-1zM355.3 392.6h1v1h-1zM629.1 222.8h1v1h-1zM355.3 401.0h1v1h-1zM642.2 222.8h1v1h-1zM355.3 409.5h1v1h-1zM655.2 222.8h1v1h-1zM355.3 418.0h1v1h-1zM668.3 222.8h1v1h-1zM355.3 426.5h1v1h-1z" fill="#7c7660"/>
<path d="M30.06 177.7 L30.19 180.0 L30.31 177.8 L30.44 177.6 L30.56 175.7 L30.69 177.9 L30.81 181.8 L30.94 179.8 L31.06 181.6 L31.19 179.2 L31.31 179.7 L31.44 179.1 L31.56 173.5 L31.69 181.1 L31.81 180.0 L31.94 180.0 L32.06 173.4 L32.19 173.3 L32.31 175.8 L32.44 177.1 L32.56 179.4 L32.69 178.4 L32.81 180.1 L32.94 176.6 L33.06 179.4 L33.19 179.7 L33.31 176.5 L33.44 183.7 L33.56 180.2 L33.69 182.1 L33.81 176.6 L33.94 176.3 L34.06 177.5 L34.19 178.2 L34.31 180.4 L34.44 179.2 L34.56 177.2 L34.69 175.6 L34.81 176.9 L34.94 182.2 L35.06 176.1 L35.19 179.2 L35.31 179.8 L35.44 174.0 L35.56 178.6 L35.69 182.4 L35.81 172.5 L35.94 177.5 L36.06 178.2 L36.19 176.0 L36.31 180.0 L36.44 178.3 L36.56 174.1 L36.69 181.0 L36.81 180.5 L36.94 181.3 L37.06 182.8 L37.19 179.6 L37.31 178.9 L37.44 174.6 L37.56 180.3 L37.69 176.7 L37.81 177.1 L37.94 174.7 L38.06 175.6 L38.19 176.9 L38.31 182.4 L38.44 172.4 L38.56 174.1 L38.69 179.2 L38.81 182.8 L38.94 180.2 L39.06 172.8 L39.19 170.9 L39.31 179.6 L39.44 176.3 L39.56 175.1 L39.69 181.4 L39.81 181.8 L39.94 179.0 L40.06 179.2 L40.19 179.8 L40.31 183.3 L40.44 180.4 L40.56 180.1 L40.69 180.1 L40.81 173.8 L40.94 182.3 L41.06 181.4 L41.19 180.1 L41.31 172.6 L41.44 176.6 L41.56 181.0 L41.69 173.1 L41.81 177.9 L41.94 181.6 L42.06 174.6 L42.19 183.3 L42.31 180.2 L42.44 178.0 L42.56 179.5 L42.69 180.4 L42.81 178.9 L42.94 181.9 L43.06 176.5 L43.19 177.3 L43.31 181.6 L43.44 178.6 L43.56 175.9 L43.69 181.3 L43.81 182.9 L43.94 177.2 L44.06 174.4 L44.19 178.1 L44.31 178.1 L44.44 177.6 L44.56 182.7 L44.69 175.4 L44.81 182.3 L44.94 174.7 L45.06 176.1 L45.19 180.4 L45.31 181.9 L45.44 181.1 L45.56 179.5 L45.69 178.9 L45.81 179.0 L45.94 180.2 L46.06 178.0 L46.19 179.3 L46.31 180.2 L46.44 178.5 L46.56 180.8 L46.69 180.2 L46.81 184.5 L46.94 179.5 L47.06 177.2 L47.19 177.4 L47.31 178.5 L47.44 181.3 L47.56 177.5 L47.69 179.7 L47.81 184.0 L47.94 170.8 L48.06 175.1 L48.19 179.2 L48.31 179.7 L48.44 179.2 L48.56 177.2 L48.69 180.5 L48.81 179.3 L48.94 176.9 L49.06 185.8 L49.19 179.6 L49.31 176.8 L49.44 178.2 L49.56 177.8 L49.69 178.3 L49.81 170.5 L49.94 177.0 L50.06 181.5 L50.19 175.0 L50.31 178.3 L50.44 181.4 L50.56 181.1 L50.69 183.0 L50.81 173.4 L50.94 177.4 L51.06 177.5 L51.19 180.4 L51.31 181.8 L51.44 170.5 L51.56 181.8 L51.69 174.2 L51.81 180.5 L51.94 174.0 L52.06 179.0 L52.19 182.1 L52.31 178.1 L52.44 179.1 L52.56 180.9 L52.69 178.9 L52.81 178.2 L52.94 183.1 L53.06 181.6 L53.19 177.6 L53.31 186.5 L53.44 175.1 L53.56 181.2 L53.69 177.7 L53.81 178.9 L53.94 180.6 L54.06 179.2 L54.19 180.4 L54.31 173.9 L54.44 174.0 L54.56 180.3 L54.69 175.6 L54.81 175.4 L54.94 174.1 L55.06 182.3 L55.19 180.7 L55.31 182.9 L55.44 175.7 L55.56 178.5 L55.69 175.1 L55.81 180.8 L55.94 183.3 L56.06 175.8 L56.19 183.2 L56.31 181.5 L56.44 178.0 L56.56 172.6 L56.69 182.7 L56.81 178.2 L56.94 176.7 L57.06 179.7 L57.19 179.7 L57.31 183.0 L57.44 175.4 L57.56 181.9 L57.69 183.0 L57.81 182.9 L57.94 178.0 L58.06 176.3 L58.19 181.6 L58.31 178.8 L58.44 178.9 L58.56 182.8 L58.69 177.7 L58.81 171.6 L58.94 177.3 L59.06 172.9 L59.19 181.0 L59.31 179.5 L59.44 176.7 L59.56 178.5 L59.69 181.0 L59.81 178.7 L59.94 182.5 L60.06 178.3 L60.19 181.6 L60.31 183.0 L60.44 183.3 L60.56 176.5 L60.69 181.1 L60.81 172.9 L60.94 175.2 L61.06 172.6 L61.19 181.7 L61.31 174.8 L61.44 178.5 L61.56 177.9 L61.69 178.4 L61.81 176.7 L61.94 179.2 L62.06 183.9 L62.19 178.6 L62.31 180.1 L62.44 181.5 L62.56 177.9 L62.69 174.7 L62.81 176.8 L62.94 181.7 L63.06 173.6 L63.19 176.7 L63.31 181.5 L63.44 180.9 L63.56 178.5 L63.69 180.9 L63.81 179.0 L63.94 175.0 L64.06 173.8 L64.19 176.6 L64.31 181.3 L64.44 176.8 L64.56 175.8 L64.69 176.2 L64.81 173.9 L64.94 178.1 L65.06 175.0 L65.19 179.6 L65.31 171.4 L65.44 179.5 L65.56 176.6 L65.69 172.7 L65.81 180.7 L65.94 177.7 L66.06 171.8 L66.19 175.9 L66.31 179.4 L66.44 177.1 L66.56 180.8 L66.69 180.7 L66.81 180.5 L66.94 179.5 L67.06 182.5 L67.19 180.5 L67.31 179.9 L67.44 172.2 L67.56 181.2 L67.69 182.4 L67.81 177.6 L67.94 177.1 L68.06 184.3 L68.19 173.2 L68.31 179.9 L68.44 185.8 L68.56 175.7 L68.69 180.6 L68.81 184.2 L68.94 178.1 L69.06 180.2 L69.19 181.2 L69.31 175.8 L69.44 178.2 L69.56 179.4 L69.69 181.0 L69.81 178.4 L69.94 177.9 L70.06 175.5 L70.19 177.4 L70.31 181.2 L70.44 178.8 L70.56 175.9 L70.69 176.0 L70.81 186.5 L70.94 181.9" fill="none" stroke="#f0f000" stroke-width="0.6"/>
<path d="M71.06 76.0 L71.19 66.3 L71.31 76.0 L71.44 75.5 L71.56 79.2 L71.69 75.4 L71.81 73.9 L71.94 75.7 L72.06 68.3 L72.19 77.2 L72.31 75.1 L72.44 72.0 L72.56 78.1 L72.69 79.5 L72.81 69.9 L72.94 72.1 L73.06 75.0 L73.19 74.7 L73.31 72.9 L73.44 71.2 L73.56 80.5 L73.69 77.2 L73.81 70.5 L73.94 70.1 L74.06 79.2 L74.19 77.1 L74.31 79.6 L74.44 76.5 L74.56 71.5 L74.69 74.9 L74.81 67.6 L74.94 71.9 L75.06 73.9 L75.19 75.7 L75.31 71.9 L75.44 73.7 L75.56 75.5 L75.69 75.2 L75.81 76.0 L75.94 74.7 L76.06 73.1 L76.19 76.5 L76.31 74.2 L76.44 71.6 L76.56 72.2 L76.69 74.1 L76.81 73.8 L76.94 74.6 L77.06 74.1 L77.19 74.6 L77.31 73.7 L77.44 70.3 L77.56 75.4 L77.69 77.3 L77.81 75.4 L77.94 73.5 L78.06 75.4 L78.19 71.2 L78.31 68.4 L78.44 74.3 L78.56 71.3 L78.69 76.3 L78.81 70.8 L78.94 66.2 L79.06 71.0 L79.19 78.8 L79.31 73.0 L79.44 70.0 L79.56 71.8 L79.69 75.7 L79.81 75.6 L79.94 74.6 L80.06 78.6 L80.19 76.2 L80.31 74.0 L80.44 75.9 L80.56 79.1 L80.69 77.0 L80.81 77.2 L80.94 70.9 L81.06 73.7 L81.19 76.3 L81.31 73.2 L81.44 77.3 L81.56 75.9 L81.69 76.8 L81.81 73.5 L81.94 81.7 L82.06 77.8 L82.19 73.5 L82.31 74.4 L82.44 81.9 L82.56 73.1 L82.69 76.7 L82.81 77.0 L82.94 74.1 L83.06 70.6 L83.19 74.7 L83.31 75.2 L83.44 77.5 L83.56 76.4 L83.69 74.2 L83.81 76.7 L83.94 75.7 L84.06 74.7 L84.19 74.3 L84.31 73.4 L84.44 76.2 L84.56 70.9 L84.69 72.2 L84.81 74.1 L84.94 69.7 L85.06 72.8 L85.19 68.1 L85.31 72.1 L85.44 75.8 L85.56 75.8 L85.69 73.9 L85.81 73.4 L85.94 69.8 L86.06 79.6 L86.19 75.6 L86.31 77.4 L86.44 71.5 L86.56 73.5 L86.69 68.6 L86.81 76.4 L86.94 76.9 L87.06 68.4 L87.19 73.9 L87.31 76.0 L87.44 68.8 L87.56 68.6 L87.69 70.9 L87.81 72.2 L87.94 69.9 L88.06 74.2 L88.19 74.8 L88.31 76.0 L88.44 76.2 L88.56 78.6 L88.69 77.6 L88.81 70.2 L88.94 72.6 L89.06 70.9 L89.19 70.9 L89.31 73.9 L89.44 74.1 L89.56 75.6 L89.69 69.3 L89.81 70.4 L89.94 74.0 L90.06 73.5 L90.19 73.2 L90.31 73.9 L90.44 71.8 L90.56 76.2 L90.69 75.2 L90.81 73.8 L90.94 72.1 L91.06 73.6 L91.19 66.1 L91.31 71.2 L91.44 74.2 L91.56 69.6 L91.69 74.7 L91.81 74.5 L91.94 70.0 L92.06 73.3 L92.19 73.2 L92.31 75.5 L92.44 75.9 L92.56 74.0 L92.69 71.5 L92.81 73.7 L92.94 73.9 L93.06 76.3 L93.19 75.0 L93.31 71.9 L93.44 70.0 L93.56 73.0 L93.69 71.9 L93.81 70.8 L93.94 73.8 L94.06 72.6 L94.19 74.4 L94.31 75.7 L94.44 72.9 L94.56 81.1 L94.69 73.1 L94.81 77.4 L94.94 74.5 L95.06 77.4 L95.19 67.0 L95.31 71.8 L95.44 74.8 L95.56 75.9 L95.69 81.1 L95.81 75.1 L95.94 77.9 L96.06 76.4 L96.19 76.9 L96.31 75.6 L96.44 73.6 L96.56 75.6 L96.69 70.9 L96.81 77.6 L96.94 71.0 L97.06 74.8 L97.19 80.5 L97.31 73.4 L97.44 74.2 L97.56 77.6 L97.69 74.2 L97.81 71.7 L97.94 74.9 L98.06 75.8 L98.19 76.2 L98.31 71.8 L98.44 79.4 L98.56 79.1 L98.69 74.2 L98.81 74.9 L98.94 72.8 L99.06 78.3 L99.19 72.0 L99.31 76.1 L99.44 72.7 L99.56 72.0 L99.69 76.3 L99.81 78.1 L99.94 74.1 L100.06 72.1 L100.19 76.5 L100.31 74.0 L100.44 75.0 L100.56 78.7 L100.69 77.5 L100.81 72.5 L100.94 81.0 L101.06 74.1 L101.19 76.5 L101.31 72.2 L101.44 74.0 L101.56 68.9 L101.69 79.5 L101.81 78.2 L101.94 70.5 L102.06 69.6 L102.19 69.2 L102.31 77.6 L102.44 72.7 L102.56 73.9 L102.69 73.2 L102.81 73.7 L102.94 70.8 L103.06 74.2 L103.19 69.8 L103.31 73.9 L103.44 75.0 L103.56 75.5 L103.69 73.4 L103.81 71.4 L103.94 74.6 L104.06 72.6 L104.19 78.8 L104.31 76.4 L104.44 73.8 L104.56 72.7 L104.69 72.0 L104.81 71.3 L104.94 73.0 L105.06 75.0 L105.19 75.6 L105.31 75.8 L105.44 80.4 L105.56 72.0 L105.69 74.1 L105.81 82.1 L105.94 68.5 L106.06 72.5 L106.19 74.6 L106.31 74.6 L106.44 75.3 L106.56 73.4 L106.69 75.2 L106.81 74.3 L106.94 76.4 L107.06 68.4 L107.19 71.4 L107.31 74.1 L107.44 71.0 L107.56 71.0 L107.69 76.0 L107.81 72.2 L107.94 76.0 L108.06 76.3 L108.19 75.0 L108.31 75.6 L108.44 73.8 L108.56 69.9 L108.69 74.0 L108.81 75.5 L108.94 72.5 L109.06 73.8 L109.19 76.3 L109.31 71.5 L109.44 76.0 L109.56 79.7 L109.69 72.4 L109.81 74.5 L109.94 73.6 L110.06 78.7 L110.19 75.0 L110.31 76.8 L110.44 72.0 L110.56 74.1 L110.69 74.1 L110.81 68.8 L110.94 78.4 L111.06 76.8 L111.19 68.9 L111.31 76.3 L111.44 73.7 L111.56 75.4 L111.69 75.2 L111.81 69.6 L111.94 73.5 L112.06 78.6 L112.19 72.4 L112.31 71.0 L112.44 70.0 L112.56 70.4 L112.69 75.1 L112.81 79.2 L112.94 75.4 L113.06 74.8 L113.19 80.8 L113.31 72.5 L113.44 72.1 L113.56 75.7 L113.69 75.7 L113.81 71.1 L113.94 70.6 L114.06 75.0 L114.19 74.8 L114.31 70.2 L114.44 73.5 L114.56 72.5 L114.69 75.5 L114.81 73.7 L114.94 73.8 L115.06 73.0 L115.19 77.3 L115.31 78.3 L115.44 73.0 L115.56 76.6 L115.69 71.8 L115.81 74.3 L115.94 76.3 L116.06 78.6 L116.19 73.0 L116.31 73.9 L116.44 74.7 L116.56 69.6 L116.69 74.1 L116.81 72.1 L116.94 75.2 L117.06 70.7 L117.19 68.2 L117.31 74.2 L117.44 74.9 L117.56 72.5 L117.69 76.8 L117.81 73.3 L117.94 72.3 L118.06 75.5 L118.19 69.4 L118.31 72.1 L118.44 74.0 L118.56 76.6 L118.69 73.6 L118.81 75.0 L118.94 72.1 L119.06 75.0 L119.19 79.1 L119.31 72.0 L119.44 81.2 L119.56 72.2 L119.69 74.2 L119.81 74.6 L119.94 77.2 L120.06 70.4 L120.19 67.8 L120.31 75.9 L120.44 76.5 L120.56 76.0 L120.69 82.0 L120.81 74.7 L120.94 74.9 L121.06 76.9 L121.19 75.2 L121.31 79.1 L121.44 70.4 L121.56 73.0 L121.69 66.1 L121.81 76.5 L121.94 73.0 L122.06 76.9 L122.19 80.6 L122.31 74.1 L122.44 73.3 L122.56 72.6 L122.69 71.6 L122.81 72.2 L122.94 76.0 L123.06 74.2 L123.19 74.3 L123.31 73.6 L123.44 76.8 L123.56 75.6 L123.69 73.7 L123.81 76.1 L123.94 73.6 L124.06 70.6 L124.19 78.5 L124.31 75.5 L124.44 71.2 L124.56 77.3 L124.69 75.1 L124.81 69.4 L124.94 78.9 L125.06 75.1 L125.19 76.8 L125.31 74.7 L125.44 73.7 L125.56 69.5 L125.69 77.0 L125.81 74.2 L125.94 73.2 L126.06 75.2 L126.19 74.3 L126.31 76.1 L126.44 73.0 L126.56 74.0 L126.69 67.7 L126.81 72.8 L126.94 76.1 L127.06 78.1 L127.19 73.0 L127.31 73.7 L127.44 78.9 L127.56 73.1 L127.69 76.3 L127.81 79.1 L127.94 74.2 L128.06 77.8 L128.19 72.0 L128.31 74.7 L128.44 73.9 L128.56 74.4 L128.69 77.5 L128.81 81.3 L128.94 72.1 L129.06 72.4 L129.19 75.6 L129.31 70.9 L129.44 75.6 L129.56 75.8 L129.69 73.3 L129.81 75.7 L129.94 69.5 L130.06 76.4 L130.19 69.5 L130.31 72.0 L130.44 72.4 L130.56 72.9 L130.69 76.7 L130.81 74.3 L130.94 72.9 L131.06 75.7 L131.19 78.8 L131.31 74.1 L131.44 75.2 L131.56 77.8 L131.69 74.9 L131.81 70.2 L131.94 81.6 L132.06 80.7 L132.19 68.1 L132.31 74.0 L132.44 75.4 L132.56 77.0 L132.69 76.1 L132.81 73.3 L132.94 70.9 L133.06 74.4 L133.19 77.2 L133.31 70.8 L133.44 71.0 L133.56 74.0 L133.69 68.3 L133.81 73.3 L133.94 72.8 L134.06 75.5 L134.19 72.0 L134.31 71.5 L134.44 72.9 L134.56 74.0 L134.69 72.1 L134.81 74.1 L134.94 76.4 L135.06 77.7 L135.19 79.2 L135.31 71.7 L135.44 72.8 L135.56 66.7 L135.69 79.8 L135.81 71.9 L135.94 74.0 L136.06 75.7 L136.19 70.0 L136.31 75.5 L136.44 74.0 L136.56 68.6 L136.69 75.0 L136.81 77.7 L136.94 68.5 L137.06 76.5 L137.19 74.7 L137.31 75.5 L137.44 75.4 L137.56 78.0 L137.69 73.4 L137.81 76.7 L137.94 72.9 L138.06 76.3 L138.19 71.7 L138.31 73.8 L138.44 79.3 L138.56 75.4 L138.69 73.6 L138.81 70.7 L138.94 71.7 L139.06 74.7 L139.19 76.9 L139.31 75.4 L139.44 75.7 L139.56 74.0 L139.69 78.2 L139.81 72.9 L139.94 72.5 L140.06 76.8 L140.19 74.3 L140.31 73.3 L140.44 72.4 L140.56 73.3 L140.69 76.0 L140.81 75.2 L140.94 70.5 L141.06 75.4 L141.19 74.6 L141.31 71.1 L141.44 76.4 L141.56 73.3 L141.69 73.1 L141.81 76.5 L141.94 78.1 L142.06 72.0 L142.19 75.4 L142.31 71.5 L142.44 81.0 L142.56 72.6 L142.69 77.7 L142.81 72.2 L142.94 76.5 L143.06 80.8 L143.19 66.5 L143.31 72.8 L143.44 75.6 L143.56 73.8 L143.69 72.1 L143.81 80.6 L143.94 74.3 L144.06 69.2 L144.19 76.7 L144.31 68.9 L144.44 77.6 L144.56 72.4 L144.69 74.5 L144.81 77.9 L144.94 74.5 L145.06 69.9 L145.19 69.0 L145.31 77.6 L145.44 76.3 L145.56 71.7 L145.69 76.7 L145.81 75.6 L145.94 76.0 L146.06 67.3 L146.19 73.2 L146.31 76.8 L146.44 76.3 L146.56 76.7 L146.69 66.7 L146.81 74.6 L146.94 75.6 L147.06 81.8 L147.19 71.2 L147.31 73.1 L147.44 74.2 L147.56 76.8 L147.69 72.8 L147.81 77.5 L147.94 71.7 L148.06 74.9 L148.19 72.5 L148.31 74.6 L148.44 72.0 L148.56 69.3 L148.69 77.4 L148.81 75.0 L148.94 72.4 L149.06 74.7 L149.19 77.1 L149.31 71.2 L149.44 73.8 L149.56 75.7 L149.69 75.7 L149.81 73.1 L149.94 67.8 L150.06 77.8 L150.19 75.1 L150.31 74.1 L150.44 73.3 L150.56 74.9 L150.69 72.8 L150.81 71.0 L150.94 71.9 L151.06 72.3 L151.19 72.3 L151.31 70.6 L151.44 76.0 L151.56 70.2 L151.69 76.1 L151.81 71.1 L151.94 75.2 L152.06 78.2 L152.19 74.7 L152.31 71.9 L152.44 74.2 L152.56 74.5 L152.69 68.9 L152.81 72.3 L152.94 74.6 L153.06 72.7 L153.19 74.3 L153.31 76.3 L153.44 76.4 L153.56 76.8 L153.69 75.9 L153.81 73.2 L153.94 74.0 L154.06 73.3 L154.19 73.2 L154.31 73.6 L154.44 68.9 L154.56 73.1 L154.69 74.0 L154.81 71.2 L154.94 74.0 L155.06 75.6 L155.19 73.6 L155.31 80.3 L155.44 66.3 L155.56 73.5 L155.69 68.6 L155.81 77.0 L155.94 82.1 L156.06 66.6 L156.19 74.5 L156.31 75.7 L156.44 73.2 L156.56 75.8 L156.69 67.4 L156.81 76.7 L156.94 75.2 L157.06 74.2 L157.19 72.3 L157.31 76.0 L157.44 72.6 L157.56 74.8 L157.69 72.6 L157.81 67.4 L157.94 74.0 L158.06 74.7 L158.19 76.4 L158.31 71.5 L158.44 74.0 L158.56 76.0 L158.69 74.5 L158.81 77.8 L158.94 80.1 L159.06 71.4 L159.19 68.3 L159.31 76.7 L159.44 78.7 L159.56 76.9 L159.69 76.5 L159.81 72.2 L159.94 72.0 L160.06 76.8 L160.19 71.4 L160.31 68.7 L160.44 71.1 L160.56 81.6 L160.69 79.9 L160.81 72.0 L160.94 71.9 L161.06 74.8 L161.19 71.9 L161.31 78.0 L161.44 73.9 L161.56 70.8 L161.69 78.0 L161.81 72.4 L161.94 74.8 L162.06 74.1 L162.19 73.2 L162.31 75.1 L162.44 72.0 L162.56 68.6 L162.69 67.5 L162.81 70.3 L162.94 71.8 L163.06 74.0 L163.19 74.3 L163.31 75.8 L163.44 74.5 L163.56 71.7 L163.69 72.0 L163.81 67.7 L163.94 73.6 L164.06 75.6 L164.19 75.7 L164.31 73.7 L164.44 73.6 L164.56 76.9 L164.69 74.1 L164.81 76.3 L164.94 75.8 L165.06 74.7 L165.19 78.0 L165.31 72.4 L165.44 73.0 L165.56 71.7 L165.69 71.7 L165.81 78.8 L165.94 79.4 L166.06 74.2 L166.19 75.8 L166.31 77.6 L166.44 76.5 L166.56 77.7 L166.69 70.3 L166.81 72.2 L166.94 75.5 L167.06 78.4 L167.19 74.4 L167.31 71.5 L167.44 73.0 L167.56 72.1 L167.69 71.5 L167.81 78.6 L167.94 72.2 L168.06 74.2 L168.19 80.6 L168.31 77.7 L168.44 75.1 L168.56 72.3 L168.69 75.3 L168.81 79.0 L168.94 76.0 L169.06 77.9 L169.19 74.4 L169.31 75.6 L169.44 73.5 L169.56 75.4 L169.69 78.0 L169.81 69.8 L169.94 73.9 L170.06 74.8 L170.19 72.4 L170.31 73.2 L170.44 76.5 L170.56 80.1 L170.69 76.0 L170.81 75.1 L170.94 69.4 L171.06 79.9 L171.19 74.3 L171.31 74.0 L171.44 70.7 L171.56 73.9 L171.69 70.8 L171.81 74.3 L171.94 75.5 L172.06 74.2 L172.19 74.9 L172.31 71.5 L172.44 78.4 L172.56 72.1 L172.69 68.6 L172.81 73.5 L172.94 71.8 L173.06 71.1 L173.19 73.0 L173.31 75.0 L173.44 70.6 L173.56 73.7 L173.69 78.4 L173.81 76.1 L173.94 73.6 L174.06 74.5 L174.19 73.7 L174.31 74.0 L174.44 76.3 L174.56 73.8 L174.69 66.9 L174.81 74.0 L174.94 71.4 L175.06 76.1 L175.19 72.3 L175.31 74.5 L175.44 80.6 L175.56 71.0 L175.69 70.7 L175.81 69.9 L175.94 66.9 L176.06 68.5 L176.19 75.2 L176.31 72.2 L176.44 68.5 L176.56 69.7 L176.69 76.0 L176.81 71.8 L176.94 73.0 L177.06 75.1 L177.19 78.2 L177.31 79.9 L177.44 77.2 L177.56 74.5 L177.69 74.7 L177.81 79.5 L177.94 78.4 L178.06 73.2 L178.19 75.5 L178.31 75.0 L178.44 74.3 L178.56 72.6 L178.69 70.1 L178.81 72.5 L178.94 69.5 L179.06 77.8 L179.19 75.7 L179.31 70.5 L179.44 78.3 L179.56 76.8 L179.69 68.4 L179.81 79.6 L179.94 76.5 L180.06 80.3 L180.19 70.4 L180.31 75.7 L180.44 75.4 L180.56 74.7 L180.69 74.6 L180.81 77.3 L180.94 69.6 L181.06 70.4 L181.19 69.9 L181.31 72.4 L181.44 72.3 L181.56 75.2 L181.69 74.9 L181.81 74.2 L181.94 72.1 L182.06 72.8 L182.19 77.0 L182.31 76.4 L182.44 74.4 L182.56 73.1 L182.69 78.8 L182.81 72.3 L182.94 76.0 L183.06 77.6 L183.19 73.3 L183.31 76.6 L183.44 70.8 L183.56 77.1 L183.69 74.7 L183.81 69.3 L183.94 76.1 L184.06 71.4 L184.19 77.9 L184.31 72.1 L184.44 73.6 L184.56 74.9 L184.69 73.1 L184.81 74.9 L184.94 72.4 L185.06 76.1 L185.19 74.1 L185.31 74.7 L185.44 66.1 L185.56 77.6 L185.69 74.2 L185.81 68.8 L185.94 74.4 L186.06 75.5 L186.19 77.3 L186.31 70.9 L186.44 78.7 L186.56 73.6 L186.69 81.3 L186.81 73.7 L186.94 76.1 L187.06 73.0 L187.19 70.8 L187.31 77.4 L187.44 76.8 L187.56 78.7 L187.69 76.7 L187.81 72.4 L187.94 69.1 L188.06 72.1 L188.19 72.1 L188.31 71.7 L188.44 75.8 L188.56 75.1 L188.69 73.3 L188.81 74.6 L188.94 73.7 L189.06 74.7 L189.19 76.4 L189.31 77.0 L189.44 72.0 L189.56 69.6 L189.69 78.4 L189.81 74.4 L189.94 77.4 L190.06 69.2 L190.19 73.1 L190.31 74.2 L190.44 69.8 L190.56 72.6 L190.69 76.3 L190.81 77.3 L190.94 78.9 L191.06 71.5 L191.19 69.9 L191.31 75.7 L191.44 76.9 L191.56 74.7 L191.69 70.2 L191.81 76.4 L191.94 76.5 L192.06 75.8 L192.19 72.6 L192.31 75.0 L192.44 76.5 L192.56 72.4 L192.69 68.6 L192.81 75.1 L192.94 75.5 L193.06 74.1 L193.19 76.8 L193.31 72.3 L193.44 73.9 L193.56 73.2 L193.69 75.8 L193.81 78.9 L193.94 73.3 L194.06 80.3 L194.19 78.7 L194.31 76.5 L194.44 75.9 L194.56 79.4 L194.69 73.6 L194.81 73.8 L194.94 70.9 L195.06 75.5 L195.19 78.1 L195.31 75.7 L195.44 75.4 L195.56 73.5 L195.69 74.6 L195.81 69.8 L195.94 77.2 L196.06 72.9 L196.19 70.8 L196.31 71.8 L196.44 71.6 L196.56 76.7 L196.69 77.3 L196.81 70.0 L196.94 76.9 L197.06 76.8 L197.19 72.4 L197.31 69.6 L197.44 71.9 L197.56 72.2 L197.69 75.1 L197.81 73.0 L197.94 68.0 L198.06 74.8 L198.19 69.5 L198.31 76.8 L198.44 70.5 L198.56 72.0 L198.69 71.5 L198.81 72.5 L198.94 78.0" fill="none" stroke="#f0f000" stroke-width="0.6"/>
<path d="M199.06 181.1 L199.19 180.3 L199.31 179.5 L199.44 173.9 L199.56 176.9 L199.69 176.8 L199.81 175.6 L199.94 180.0 L200.06 176.3 L200.19 176.4 L200.31 175.4 L200.44 172.3 L200.56 180.3 L200.69 182.5 L200.81 179.0 L200.94 175.6 L201.06 170.5 L201.19 179.0 L201.31 182.1 L201.44 179.4 L201.56 181.3 L201.69 182.9 L201.81 181.9 L201.94 177.2 L202.06 181.7 L202.19 180.8 L202.31 173.9 L202.44 177.3 L202.56 174.2 L202.69 178.2 L202.81 180.2 L202.94 175.3 L203.06 172.3 L203.19 182.4 L203.31 179.6 L203.44 182.9 L203.56 174.5 L203.69 181.7 L203.81 184.7 L203.94 184.5 L204.06 177.9 L204.19 179.3 L204.31 178.0 L204.44 181.5 L204.56 181.6 L204.69 178.8 L204.81 174.4 L204.94 180.7 L205.06 177.1 L205.19 180.4 L205.31 179.3 L205.44 183.4 L205.56 181.9 L205.69 177.1 L205.81 179.5 L205.94 183.8 L206.06 176.9 L206.19 179.8 L206.31 182.1 L206.44 182.3 L206.56 180.1 L206.69 174.5 L206.81 174.7 L206.94 179.2 L207.06 179.7 L207.19 186.1 L207.31 175.9 L207.44 181.9 L207.56 180.8 L207.69 173.5 L207.81 176.0 L207.94 179.0 L208.06 177.0 L208.19 178.0 L208.31 179.9 L208.44 176.1 L208.56 179.9 L208.69 176.6 L208.81 176.9 L208.94 180.1 L209.06 176.8 L209.19 179.4 L209.31 183.3 L209.44 178.6 L209.56 178.1 L209.69 180.7 L209.81 177.4 L209.94 181.7 L210.06 174.7 L210.19 180.4 L210.31 177.0 L210.44 176.1 L210.56 183.8 L210.69 175.9 L210.81 183.8 L210.94 180.5 L211.06 182.9 L211.19 175.6 L211.31 182.1 L211.44 182.9 L211.56 178.2 L211.69 178.1 L211.81 185.9 L211.94 179.0 L212.06 177.2 L212.19 176.6 L212.31 179.8 L212.44 179.5 L212.56 179.0 L212.69 183.7 L212.81 177.5 L212.94 179.9 L213.06 182.9 L213.19 175.5 L213.31 181.6 L213.44 184.0 L213.56 174.4 L213.69 175.2 L213.81 175.4 L213.94 173.0 L214.06 179.9 L214.19 172.9 L214.31 180.0 L214.44 182.9 L214.56 173.7 L214.69 177.6 L214.81 172.7 L214.94 180.8 L215.06 176.3 L215.19 177.7 L215.31 178.7 L215.44 180.1 L215.56 177.5 L215.69 178.5 L215.81 176.9 L215.94 178.8 L216.06 175.0 L216.19 178.7 L216.31 172.7 L216.44 177.0 L216.56 184.2 L216.69 178.7 L216.81 174.7 L216.94 179.3 L217.06 175.6 L217.19 173.5 L217.31 176.3 L217.44 180.7 L217.56 179.7 L217.69 178.2 L217.81 175.7 L217.94 175.3 L218.06 182.5 L218.19 179.2 L218.31 175.6 L218.44 172.2 L218.56 174.4 L218.69 185.9 L218.81 175.1 L218.94 178.3 L219.06 179.1 L219.19 178.0 L219.31 177.7 L219.44 174.4 L219.56 175.3 L219.69 183.6 L219.81 176.2 L219.94 181.0 L220.06 173.4 L220.19 177.7 L220.31 179.3 L220.44 181.6 L220.56 175.1 L220.69 180.3 L220.81 179.7 L220.94 176.3 L221.06 179.9 L221.19 175.8 L221.31 176.1 L221.44 178.4 L221.56 170.5 L221.69 178.2 L221.81 175.5 L221.94 174.1 L222.06 177.2 L222.19 180.8 L222.31 177.3 L222.44 182.3 L222.56 175.0 L222.69 174.6 L222.81 183.2 L222.94 179.7 L223.06 181.3 L223.19 176.0 L223.31 180.9 L223.44 179.3 L223.56 180.4 L223.69 178.6 L223.81 182.1 L223.94 176.6 L224.06 175.6 L224.19 174.1 L224.31 182.0 L224.44 176.3 L224.56 175.4 L224.69 175.7 L224.81 177.2 L224.94 174.7 L225.06 177.6 L225.19 176.6 L225.31 176.8 L225.44 175.6 L225.56 178.6 L225.69 177.1 L225.81 178.8 L225.94 179.2 L226.06 179.5 L226.19 171.9 L226.31 176.9 L226.44 176.1 L226.56 180.8 L226.69 173.8 L226.81 176.4 L226.94 177.6 L227.06 177.5 L227.19 181.5 L227.31 177.2 L227.44 181.4 L227.56 174.1 L227.69 173.1 L227.81 182.2 L227.94 179.8 L228.06 180.0 L228.19 178.9 L228.31 180.0 L228.44 174.9 L228.56 181.3 L228.69 176.9 L228.81 181.5 L228.94 178.8 L229.06 172.6 L229.19 174.6 L229.31 181.9 L229.44 178.1 L229.56 177.3 L229.69 179.2 L229.81 177.2 L229.94 176.9 L230.06 178.8 L230.19 178.9 L230.31 183.1 L230.44 178.6 L230.56 184.1 L230.69 183.9 L230.81 183.6 L230.94 181.7 L231.06 178.9 L231.19 178.9 L231.31 178.1 L231.44 176.3 L231.56 178.3 L231.69 176.6 L231.81 183.4 L231.94 180.1 L232.06 177.2 L232.19 172.8 L232.31 178.3 L232.44 177.3 L232.56 175.2 L232.69 175.1 L232.81 171.7 L232.94 180.2 L233.06 178.3 L233.19 186.2 L233.31 178.4 L233.44 178.1 L233.56 182.8 L233.69 178.9 L233.81 179.0 L233.94 177.4 L234.06 176.7 L234.19 183.0 L234.31 181.5 L234.44 183.6 L234.56 177.5 L234.69 178.6 L234.81 175.9 L234.94 181.4 L235.06 174.3 L235.19 180.2 L235.31 181.8 L235.44 182.7 L235.56 175.7 L235.69 181.8 L235.81 176.4 L235.94 176.2 L236.06 174.5 L236.19 182.0 L236.31 183.4 L236.44 176.7 L236.56 176.2 L236.69 177.5 L236.81 186.0 L236.94 181.5 L237.06 176.9 L237.19 173.1 L237.31 176.5 L237.44 182.1 L237.56 184.1 L237.69 177.7 L237.81 176.4 L237.94 177.0 L238.06 172.8 L238.19 181.2 L238.31 175.2 L238.44 181.7 L238.56 173.4 L238.69 174.7 L238.81 179.4 L238.94 176.2 L239.06 180.8 L239.19 178.5 L239.31 175.0 L239.44 180.4 L239.56 181.0 L239.69 172.8 L239.81 184.0 L239.94 180.0 L240.06 180.8 L240.19 172.9 L240.31 176.3 L240.44 177.5 L240.56 181.7 L240.69 174.1 L240.81 175.8 L240.94 172.4 L241.06 177.8 L241.19 179.5 L241.31 173.4 L241.44 176.7 L241.56 180.0 L241.69 183.3 L241.81 180.5 L241.94 177.6 L242.06 175.0 L242.19 175.7 L242.31 176.5 L242.44 178.9 L242.56 178.4 L242.69 183.5 L242.81 179.4 L242.94 175.3 L243.06 183.1 L243.19 181.3 L243.31 178.8 L243.44 176.3 L243.56 172.9 L243.69 175.4 L243.81 181.2 L243.94 176.1 L244.06 174.5 L244.19 179.1 L244.31 179.2 L244.44 180.3 L244.56 180.5 L244.69 182.7 L244.81 176.0 L244.94 181.4 L245.06 175.5 L245.19 180.6 L245.31 179.0 L245.44 179.2 L245.56 181.4 L245.69 178.4 L245.81 181.8 L245.94 181.1 L246.06 178.9 L246.19 176.8 L246.31 176.2 L246.44 176.9 L246.56 177.9 L246.69 178.4 L246.81 186.5 L246.94 180.4 L247.06 180.8 L247.19 175.9 L247.31 176.4 L247.44 177.5 L247.56 179.1 L247.69 175.4 L247.81 183.3 L247.94 176.8 L248.06 181.7 L248.19 171.5 L248.31 178.5 L248.44 179.3 L248.56 179.1 L248.69 180.3 L248.81 179.3 L248.94 179.0 L249.06 172.8 L249.19 176.4 L249.31 171.5 L249.44 180.4 L249.56 179.4 L249.69 177.9 L249.81 176.0 L249.94 176.8 L250.06 184.0 L250.19 183.7 L250.31 178.3 L250.44 182.4 L250.56 173.7 L250.69 172.7 L250.81 177.1 L250.94 175.9 L251.06 176.8 L251.19 179.1 L251.31 186.5 L251.44 176.5 L251.56 178.6 L251.69 179.3 L251.81 178.4 L251.94 181.3 L252.06 183.8 L252.19 174.8 L252.31 179.0 L252.44 177.7 L252.56 179.6 L252.69 173.9 L252.81 173.2 L252.94 171.6 L253.06 180.1 L253.19 179.1 L253.31 178.7 L253.44 171.4 L253.56 177.4 L253.69 176.2 L253.81 174.3 L253.94 175.8 L254.06 180.6 L254.19 180.1 L254.31 178.4 L254.44 180.0 L254.56 176.7 L254.69 178.7 L254.81 178.6 L254.94 180.2 L255.06 178.3 L255.19 178.1 L255.31 178.1 L255.44 176.6 L255.56 185.2 L255.69 180.0 L255.81 179.8 L255.94 185.4 L256.06 182.7 L256.19 173.8 L256.31 180.6 L256.44 181.0 L256.56 184.2 L256.69 182.4 L256.81 180.8 L256.94 175.0 L257.06 175.9 L257.19 179.3 L257.31 180.0 L257.44 175.4 L257.56 177.3 L257.69 177.3 L257.81 178.7 L257.94 179.5 L258.06 177.6 L258.19 174.8 L258.31 182.2 L258.44 183.3 L258.56 178.2 L258.69 181.6 L258.81 179.8 L258.94 180.5 L259.06 179.9 L259.19 176.2 L259.31 180.2 L259.44 181.5 L259.56 175.8 L259.69 184.4 L259.81 184.8 L259.94 184.0 L260.06 184.5 L260.19 180.7 L260.31 177.5 L260.44 176.7 L260.56 176.1 L260.69 178.8 L260.81 178.4 L260.94 180.5 L261.06 172.4 L261.19 185.4 L261.31 185.3 L261.44 178.4 L261.56 180.5 L261.69 179.9 L261.81 179.3 L261.94 177.9 L262.06 178.1 L262.19 176.0 L262.31 179.0 L262.44 178.4 L262.56 179.5 L262.69 175.9 L262.81 178.6 L262.94 178.6 L263.06 180.3 L263.19 175.3 L263.31 179.8 L263.44 181.4 L263.56 180.3 L263.69 177.4 L263.81 177.0 L263.94 177.8 L264.06 180.7 L264.19 183.2 L264.31 178.0 L264.44 176.6 L264.56 179.6 L264.69 179.1 L264.81 175.8 L264.94 176.3 L265.06 178.2 L265.19 180.5 L265.31 174.9 L265.44 175.4 L265.56 180.0 L265.69 174.8 L265.81 178.8 L265.94 179.6 L266.06 178.2 L266.19 175.4 L266.31 178.3 L266.44 177.5 L266.56 179.5 L266.69 176.0 L266.81 181.8 L266.94 173.5 L267.06 178.0 L267.19 178.5 L267.31 181.4 L267.44 176.7 L267.56 180.1 L267.69 176.8 L267.81 180.7 L267.94 183.7 L268.06 177.3 L268.19 179.8 L268.31 175.7 L268.44 181.4 L268.56 182.1 L268.69 178.6 L268.81 175.1 L268.94 179.7 L269.06 181.9 L269.19 181.8 L269.31 180.9 L269.44 173.0 L269.56 176.5 L269.69 182.8 L269.81 174.8 L269.94 181.9 L270.06 184.1 L270.19 180.8 L270.31 181.9 L270.44 177.5 L270.56 174.8 L270.69 178.2 L270.81 177.9 L270.94 178.4 L271.06 180.6 L271.19 178.1 L271.31 179.1 L271.44 179.8 L271.56 178.5 L271.69 184.0 L271.81 179.8 L271.94 178.8 L272.06 177.9 L272.19 176.6 L272.31 182.5 L272.44 179.0 L272.56 175.3 L272.69 176.8 L272.81 178.1 L272.94 177.2 L273.06 181.8 L273.19 175.0 L273.31 180.0 L273.44 178.9 L273.56 175.0 L273.69 178.6 L273.81 178.2 L273.94 180.0 L274.06 177.1 L274.19 179.4 L274.31 173.5 L274.44 175.2 L274.56 180.9 L274.69 181.6 L274.81 178.5 L274.94 176.7 L275.06 181.7 L275.19 172.2 L275.31 176.1 L275.44 180.5 L275.56 180.5 L275.69 175.4 L275.81 172.8 L275.94 182.9 L276.06 179.0 L276.19 175.8 L276.31 178.7 L276.44 181.2 L276.56 170.7 L276.69 181.8 L276.81 180.7 L276.94 172.3 L277.06 180.8 L277.19 173.2 L277.31 181.9 L277.44 179.7 L277.56 185.3 L277.69 176.7 L277.81 178.5 L277.94 181.6 L278.06 176.6 L278.19 176.4 L278.31 177.4 L278.44 178.3 L278.56 175.3 L278.69 180.0 L278.81 180.1 L278.94 178.7 L279.06 183.6 L279.19 177.5 L279.31 182.4 L279.44 176.9 L279.56 180.8 L279.69 172.7 L279.81 179.1 L279.94 178.0 L280.06 177.0 L280.19 176.7 L280.31 177.5 L280.44 176.3 L280.56 171.9 L280.69 176.7 L280.81 176.9 L280.94 176.9 L281.06 175.3 L281.19 178.1 L281.31 180.9 L281.44 177.7 L281.56 177.0 L281.69 182.6 L281.81 181.4 L281.94 181.3 L282.06 182.0 L282.19 177.5 L282.31 178.1 L282.44 181.8 L282.56 176.8 L282.69 178.1 L282.81 179.6 L282.94 179.6 L283.06 177.7 L283.19 181.5 L283.31 178.0 L283.44 180.7 L283.56 181.7 L283.69 180.5 L283.81 180.7 L283.94 175.0 L284.06 174.6 L284.19 176.6 L284.31 179.9 L284.44 183.0 L284.56 174.8 L284.69 179.4 L284.81 175.9 L284.94 176.3 L285.06 177.7 L285.19 180.6 L285.31 179.1 L285.44 182.0 L285.56 175.5 L285.69 181.2 L285.81 181.3 L285.94 178.7 L286.06 179.9 L286.19 176.8 L286.31 175.2 L286.44 177.3 L286.56 176.6 L286.69 186.5 L286.81 177.0 L286.94 183.5 L287.06 179.1 L287.19 179.4 L287.31 180.7 L287.44 176.2 L287.56 181.2 L287.69 179.6 L287.81 174.0 L287.94 180.3 L288.06 180.2 L288.19 179.9 L288.31 183.3 L288.44 177.3 L288.56 180.0 L288.69 180.7 L288.81 175.8 L288.94 182.1 L289.06 174.1 L289.19 174.6 L289.31 180.1 L289.44 175.2 L289.56 178.2 L289.69 173.6 L289.81 178.7 L289.94 175.1 L290.06 179.5 L290.19 173.9 L290.31 179.8 L290.44 177.7 L290.56 178.7 L290.69 178.3 L290.81 178.9 L290.94 174.5 L291.06 170.8 L291.19 178.6 L291.31 175.7 L291.44 177.1 L291.56 179.8 L291.69 172.5 L291.81 176.2 L291.94 176.7 L292.06 175.3 L292.19 179.5 L292.31 178.1 L292.44 176.0 L292.56 175.5 L292.69 180.9 L292.81 176.5 L292.94 180.3 L293.06 179.8 L293.19 172.8 L293.31 175.2 L293.44 178.5 L293.56 179.5 L293.69 180.8 L293.81 180.9 L293.94 181.6 L294.06 177.4 L294.19 177.9 L294.31 180.8 L294.44 177.2 L294.56 181.7 L294.69 173.7 L294.81 180.5 L294.94 178.0 L295.06 172.6 L295.19 181.4 L295.31 179.4 L295.44 178.6 L295.56 175.3 L295.69 177.1 L295.81 183.0 L295.94 176.0 L296.06 170.5 L296.19 175.9 L296.31 174.9 L296.44 178.1 L296.56 177.3 L296.69 175.8 L296.81 176.0 L296.94 181.6 L297.06 174.2 L297.19 184.4 L297.31 176.9 L297.44 175.2 L297.56 180.9 L297.69 180.2 L297.81 175.4 L297.94 180.7 L298.06 173.0 L298.19 175.7 L298.31 181.9 L298.44 177.7 L298.56 174.6 L298.69 180.0 L298.81 181.3 L298.94 178.4 L299.06 173.1 L299.19 177.5 L299.31 179.8 L299.44 180.8 L299.56 184.1 L299.69 177.7 L299.81 177.1 L299.94 178.4 L300.06 182.1 L300.19 175.7 L300.31 182.4 L300.44 170.5 L300.56 180.9 L300.69 176.5 L300.81 179.9 L300.94 180.6 L301.06 175.0 L301.19 178.2 L301.31 179.2 L301.44 180.3 L301.56 175.7 L301.69 175.5 L301.81 172.7 L301.94 186.1 L302.06 177.9 L302.19 177.8 L302.31 174.0 L302.44 181.3 L302.56 176.9 L302.69 182.8 L302.81 181.1 L302.94 178.6 L303.06 180.7 L303.19 175.2 L303.31 177.5 L303.44 176.8 L303.56 174.7 L303.69 178.6 L303.81 178.1 L303.94 182.8 L304.06 170.5 L304.19 176.5 L304.31 175.7 L304.44 177.1 L304.56 179.8 L304.69 179.7 L304.81 178.6 L304.94 177.1 L305.06 180.0 L305.19 179.6 L305.31 173.0 L305.44 177.7 L305.56 174.4 L305.69 175.0 L305.81 178.9 L305.94 178.7 L306.06 178.8 L306.19 175.9 L306.31 177.9 L306.44 175.8 L306.56 179.6 L306.69 180.6 L306.81 183.8 L306.94 182.3 L307.06 176.1 L307.19 177.1 L307.31 175.7 L307.44 179.4 L307.56 184.4 L307.69 180.6 L307.81 171.9 L307.94 174.7 L308.06 174.6 L308.19 180.0 L308.31 178.5 L308.44 179.4 L308.56 183.8 L308.69 176.0 L308.81 176.0 L308.94 184.4 L309.06 179.5 L309.19 176.2 L309.31 172.4 L309.44 173.9 L309.56 171.2 L309.69 178.7 L309.81 178.6 L309.94 181.5 L310.06 178.1 L310.19 176.4 L310.31 176.3 L310.44 184.2 L310.56 173.2 L310.69 179.0 L310.81 178.6 L310.94 180.4 L311.06 177.3 L311.19 180.0 L311.31 180.9 L311.44 178.1 L311.56 177.1 L311.69 177.9 L311.81 175.6 L311.94 177.9 L312.06 177.6 L312.19 179.1 L312.31 182.5 L312.44 182.4 L312.56 177.2 L312.69 180.3 L312.81 179.4 L312.94 180.8 L313.06 178.6 L313.19 179.3 L313.31 177.1 L313.44 176.1 L313.56 181.1 L313.69 182.4 L313.81 180.5 L313.94 179.8 L314.06 179.3 L314.19 177.1 L314.31 173.2 L314.44 180.5 L314.56 179.1 L314.69 176.8 L314.81 175.6 L314.94 182.3 L315.06 173.1 L315.19 183.8 L315.31 180.4 L315.44 185.6 L315.56 176.3 L315.69 178.4 L315.81 177.0 L315.94 179.0 L316.06 177.9 L316.19 176.3 L316.31 181.7 L316.44 176.1 L316.56 177.0 L316.69 180.2 L316.81 176.9 L316.94 177.2 L317.06 179.6 L317.19 177.4 L317.31 174.8 L317.44 178.2 L317.56 177.8 L317.69 183.6 L317.81 175.2 L317.94 181.4 L318.06 176.1 L318.19 177.4 L318.31 177.5 L318.44 179.3 L318.56 181.1 L318.69 183.7 L318.81 176.6 L318.94 182.5 L319.06 181.5 L319.19 180.9 L319.31 176.2 L319.44 181.2 L319.56 178.2 L319.69 179.6 L319.81 177.7 L319.94 180.5 L320.06 181.8 L320.19 181.9 L320.31 177.9 L320.44 181.5 L320.56 182.9 L320.69 175.7 L320.81 182.9 L320.94 174.5 L321.06 180.1 L321.19 180.3 L321.31 182.9 L321.44 179.3 L321.56 177.1 L321.69 176.1 L321.81 174.7 L321.94 180.8 L322.06 177.8 L322.19 176.3 L322.31 180.1 L322.44 176.2 L322.56 177.2 L322.69 177.1 L322.81 183.5 L322.94 182.9 L323.06 178.0 L323.19 173.8 L323.31 179.3 L323.44 178.7 L323.56 179.5 L323.69 180.2 L323.81 177.5 L323.94 181.3 L324.06 181.0 L324.19 179.1 L324.31 177.3 L324.44 177.1 L324.56 180.6 L324.69 175.2 L324.81 178.0 L324.94 176.3 L325.06 174.3 L325.19 180.3 L325.31 178.4 L325.44 178.6 L325.56 181.1 L325.69 174.0 L325.81 178.3 L325.94 179.4 L326.06 181.0 L326.19 175.2 L326.31 180.6 L326.44 179.2 L326.56 182.6 L326.69 181.9 L326.81 180.1 L326.94 184.9 L327.06 178.5 L327.19 177.2 L327.31 177.5 L327.44 175.7 L327.56 178.4 L327.69 172.9 L327.81 178.2 L327.94 179.8 L328.06 181.5 L328.19 177.5 L328.31 182.7 L328.44 176.5 L328.56 178.1 L328.69 172.9 L328.81 176.2 L328.94 176.1 L329.06 182.9 L329.19 180.1 L329.31 175.3 L329.44 180.1 L329.56 179.9 L329.69 177.8 L329.81 178.6 L329.94 177.6 L330.06 176.9 L330.19 173.3 L330.31 178.2 L330.44 182.3 L330.56 182.7 L330.69 177.7 L330.81 176.3 L330.94 177.9 L331.06 181.1 L331.19 179.5 L331.31 176.8 L331.44 179.6 L331.56 177.9 L331.69 180.0 L331.81 177.3 L331.94 174.2 L332.06 178.7 L332.19 180.7 L332.31 175.3 L332.44 178.2 L332.56 181.1 L332.69 177.4 L332.81 176.6 L332.94 184.4 L333.06 180.9 L333.19 181.5 L333.31 175.7 L333.44 183.3 L333.56 173.7 L333.69 177.0 L333.81 180.7 L333.94 182.4 L334.06 175.8 L334.19 176.6 L334.31 179.1 L334.44 172.9 L334.56 180.4 L334.69 180.1 L334.81 177.2 L334.94 180.1 L335.06 180.8 L335.19 179.4 L335.31 180.0 L335.44 182.9 L335.56 177.1 L335.69 179.0 L335.81 177.0 L335.94 181.5 L336.06 177.3 L336.19 179.9 L336.31 178.9 L336.44 178.7 L336.56 183.5 L336.69 178.3 L336.81 182.6 L336.94 180.9 L337.06 182.3 L337.19 178.0 L337.31 181.2 L337.44 180.7 L337.56 176.7 L337.69 179.3 L337.81 178.1 L337.94 178.4 L338.06 182.3 L338.19 176.4 L338.31 173.6 L338.44 173.5 L338.56 177.2 L338.69 176.6 L338.81 178.5 L338.94 180.1 L339.06 183.6 L339.19 179.4 L339.31 179.8 L339.44 176.4 L339.56 180.2 L339.69 182.4 L339.81 182.4 L339.94 172.8 L340.06 181.1 L340.19 183.1 L340.31 180.9 L340.44 174.2 L340.56 177.6 L340.69 180.2 L340.81 179.7 L340.94 176.2 L341.06 175.9 L341.19 181.3 L341.31 174.6 L341.44 182.6 L341.56 178.6 L341.69 179.4 L341.81 174.6 L341.94 176.8 L342.06 180.5 L342.19 174.3 L342.31 184.5 L342.44 174.4 L342.56 175.0 L342.69 178.6 L342.81 179.9 L342.94 180.6 L343.06 177.4 L343.19 177.9 L343.31 177.8 L343.44 176.8 L343.56 171.1 L343.69 181.3 L343.81 179.2 L343.94 179.0 L344.06 176.7 L344.19 179.2 L344.31 178.5 L344.44 178.3 L344.56 181.7 L344.69 173.5 L344.81 179.2 L344.94 175.4 L345.06 177.6 L345.19 182.8 L345.31 175.4 L345.44 178.2 L345.56 176.8 L345.69 181.2 L345.81 175.7 L345.94 173.7 L346.06 180.0 L346.19 177.5 L346.31 177.6 L346.44 181.6 L346.56 175.9 L346.69 177.4 L346.81 178.9 L346.94 179.7 L347.06 177.0 L347.19 181.5 L347.31 185.0 L347.44 177.3 L347.56 183.9 L347.69 172.4 L347.81 182.6 L347.94 177.5 L348.06 178.9 L348.19 177.5 L348.31 176.7 L348.44 174.8 L348.56 177.4 L348.69 182.2 L348.81 181.8 L348.94 177.5 L349.06 177.0 L349.19 176.5 L349.31 175.0 L349.44 183.7 L349.56 180.4 L349.69 178.8 L349.81 177.1 L349.94 175.6 L350.06 182.3 L350.19 180.7 L350.31 175.8 L350.44 181.3 L350.56 175.3 L350.69 180.3 L350.81 175.7 L350.94 177.3 L351.06 179.9 L351.19 179.7 L351.31 181.4 L351.44 176.1 L351.56 183.0 L351.69 182.4 L351.81 178.5 L351.94 179.8 L352.06 176.3 L352.19 178.1 L352.31 174.7 L352.44 178.8 L352.56 179.1 L352.69 182.4 L352.81 181.2 L352.94 180.8 L353.06 177.5 L353.19 177.9 L353.31 177.5 L353.44 179.1 L353.56 172.9 L353.69 180.7 L353.81 174.0 L353.94 177.0 L354.06 178.6 L354.19 177.0 L354.31 183.3 L354.44 178.2 L354.56 183.0 L354.69 181.9 L354.81 177.1 L354.94 179.7 L355.06 182.2 L355.19 177.5 L355.31 178.8 L355.44 176.9 L355.56 178.7 L355.69 177.5 L355.81 178.7 L355.94 181.4" fill="none" stroke="#f0f000" stroke-width="0.6"/>
<path d="M356.06 78.1 L356.19 74.5 L356.31 74.7 L356.44 76.6 L356.56 73.3 L356.69 71.1 L356.81 77.3 L356.94 71.4 L357.06 76.8 L357.19 71.3 L357.31 79.4 L357.44 71.1 L357.56 76.5 L357.69 78.4 L357.81 71.3 L357.94 78.4 L358.06 71.7 L358.19 69.0 L358.31 76.2 L358.44 76.1 L358.56 73.5 L358.69 66.8 L358.81 73.9 L358.94 73.2 L359.06 73.0 L359.19 73.3 L359.31 68.9 L359.44 72.5 L359.56 79.3 L359.69 78.6 L359.81 73.1 L359.94 72.0 L360.06 75.2 L360.19 77.2 L360.31 76.2 L360.44 70.7 L360.56 74.6 L360.69 74.5 L360.81 78.2 L360.94 77.5 L361.06 75.6 L361.19 77.6 L361.31 73.0 L361.44 78.5 L361.56 72.9 L361.69 75.2 L361.81 76.7 L361.94 71.5 L362.06 72.1 L362.19 69.0 L362.31 74.6 L362.44 73.9 L362.56 73.2 L362.69 75.5 L362.81 68.0 L362.94 74.0 L363.06 74.4 L363.19 73.3 L363.31 76.4 L363.44 79.1 L363.56 72.8 L363.69 71.4 L363.81 72.4 L363.94 74.4 L364.06 75.8 L364.19 71.6 L364.31 77.0 L364.44 71.1 L364.56 76.5 L364.69 75.3 L364.81 75.4 L364.94 80.3 L365.06 73.3 L365.19 73.6 L365.31 75.5 L365.44 76.6 L365.56 70.2 L365.69 74.9 L365.81 72.0 L365.94 75.9 L366.06 78.0 L366.19 74.2 L366.31 73.8 L366.44 74.6 L366.56 66.1 L366.69 76.3 L366.81 75.7 L366.94 74.6 L367.06 73.0 L367.19 72.0 L367.31 73.6 L367.44 77.6 L367.56 73.8 L367.69 78.0 L367.81 66.7 L367.94 72.8 L368.06 74.9 L368.19 74.1 L368.31 69.3 L368.44 72.2 L368.56 77.7 L368.69 70.4 L368.81 71.2 L368.94 70.9 L369.06 72.5 L369.19 76.0 L369.31 75.8 L369.44 68.3 L369.56 78.3 L369.69 72.4 L369.81 72.4 L369.94 78.9 L370.06 73.9 L370.19 70.5 L370.31 72.3 L370.44 72.0 L370.56 71.2 L370.69 73.1 L370.81 76.6 L370.94 75.1 L371.06 70.1 L371.19 82.1 L371.31 71.2 L371.44 74.4 L371.56 74.2 L371.69 76.3 L371.81 73.2 L371.94 75.4 L372.06 80.2 L372.19 74.4 L372.31 71.0 L372.44 75.0 L372.56 71.8 L372.69 73.0 L372.81 74.6 L372.94 75.1 L373.06 73.3 L373.19 76.5 L373.31 73.5 L373.44 70.3 L373.56 76.6 L373.69 73.1 L373.81 77.6 L373.94 72.2 L374.06 75.7 L374.19 75.0 L374.31 66.3 L374.44 69.8 L374.56 70.9 L374.69 78.2 L374.81 68.7 L374.94 76.7 L375.06 77.2 L375.19 75.5 L375.31 76.0 L375.44 72.7 L375.56 74.1 L375.69 74.7 L375.81 75.3 L375.94 76.1 L376.06 73.5 L376.19 72.1 L376.31 72.5 L376.44 75.3 L376.56 69.3 L376.69 70.5 L376.81 72.9 L376.94 72.5 L377.06 73.3 L377.19 66.4 L377.31 73.1 L377.44 73.4 L377.56 76.3 L377.69 68.4 L377.81 73.2 L377.94 75.5 L378.06 75.5 L378.19 77.5 L378.31 77.1 L378.44 71.1 L378.56 75.9 L378.69 73.1 L378.81 71.8 L378.94 78.5 L379.06 72.3 L379.19 71.6 L379.31 72.9 L379.44 71.6 L379.56 77.0 L379.69 75.2 L379.81 78.1 L379.94 75.3 L380.06 72.3 L380.19 77.1 L380.31 72.2 L380.44 72.8 L380.56 73.6 L380.69 74.2 L380.81 77.5 L380.94 72.4 L381.06 75.1 L381.19 74.0 L381.31 70.5 L381.44 70.9 L381.56 73.5 L381.69 75.3 L381.81 75.0 L381.94 75.5 L382.06 74.2 L382.19 72.8 L382.31 75.3 L382.44 71.2 L382.56 70.2 L382.69 73.1 L382.81 70.0 L382.94 72.6 L383.06 71.9 L383.19 72.5 L383.31 74.0 L383.44 71.8 L383.56 72.9 L383.69 69.2 L383.81 74.5 L383.94 71.6 L384.06 75.3 L384.19 66.1 L384.31 71.8 L384.44 74.8 L384.56 67.0 L384.69 73.1 L384.81 74.4 L384.94 74.4 L385.06 69.8 L385.19 74.8 L385.31 74.5 L385.44 71.3 L385.56 76.3 L385.69 74.0 L385.81 74.2 L385.94 72.8 L386.06 75.7 L386.19 74.4 L386.31 77.4 L386.44 75.4 L386.56 72.3 L386.69 73.5 L386.81 76.8 L386.94 73.0 L387.06 75.2 L387.19 75.6 L387.31 73.6 L387.44 67.4 L387.56 74.5 L387.69 74.7 L387.81 74.5 L387.94 71.9 L388.06 77.6 L388.19 73.7 L388.31 72.3 L388.44 72.0 L388.56 75.1 L388.69 70.9 L388.81 71.2 L388.94 79.9 L389.06 77.9 L389.19 77.2 L389.31 78.1 L389.44 75.8 L389.56 69.2 L389.69 77.6 L389.81 77.7 L389.94 75.5 L390.06 68.4 L390.19 77.7 L390.31 78.1 L390.44 72.7 L390.56 74.5 L390.69 76.4 L390.81 73.9 L390.94 77.3 L391.06 74.3 L391.19 76.1 L391.31 74.3 L391.44 69.8 L391.56 71.2 L391.69 82.1 L391.81 74.9 L391.94 77.9 L392.06 77.4 L392.19 79.1 L392.31 75.7 L392.44 72.4 L392.56 74.2 L392.69 68.5 L392.81 73.6 L392.94 76.7 L393.06 67.8 L393.19 74.7 L393.31 76.5 L393.44 78.0 L393.56 71.4 L393.69 72.2 L393.81 68.6 L393.94 71.1 L394.06 75.7 L394.19 80.1 L394.31 70.8 L394.44 78.1 L394.56 75.3 L394.69 72.7 L394.81 80.5 L394.94 66.8 L395.06 73.9 L395.19 74.7 L395.31 80.3 L395.44 79.3 L395.56 80.7 L395.69 74.5 L395.81 77.0 L395.94 78.1 L396.06 75.6 L396.19 75.1 L396.31 73.6 L396.44 72.9 L396.56 70.5 L396.69 79.8 L396.81 72.8 L396.94 68.0 L397.06 74.9 L397.19 74.0 L397.31 74.6 L397.44 79.4 L397.56 73.8 L397.69 73.3 L397.81 71.9 L397.94 74.0 L398.06 72.8 L398.19 74.7 L398.31 82.1 L398.44 75.2 L398.56 71.6 L398.69 79.7 L398.81 76.6 L398.94 76.5 L399.06 76.2 L399.19 76.5 L399.31 76.1 L399.44 78.2 L399.56 77.0 L399.69 78.0 L399.81 72.6 L399.94 74.1 L400.06 72.0 L400.19 76.9 L400.31 76.5 L400.44 72.7 L400.56 75.8 L400.69 81.8 L400.81 77.7 L400.94 70.8 L401.06 73.8 L401.19 76.0 L401.31 74.0 L401.44 75.2 L401.56 77.5 L401.69 75.1 L401.81 70.9 L401.94 76.2 L402.06 73.8 L402.19 74.4 L402.31 72.4 L402.44 70.1 L402.56 70.5 L402.69 73.1 L402.81 71.0 L402.94 66.2 L403.06 77.5 L403.19 70.7 L403.31 72.0 L403.44 75.7 L403.56 67.1 L403.69 78.0 L403.81 71.9 L403.94 76.0 L404.06 72.7 L404.19 75.0 L404.31 74.4 L404.44 74.1 L404.56 68.8 L404.69 69.8 L404.81 74.0 L404.94 78.2 L405.06 72.5 L405.19 75.7 L405.31 74.6 L405.44 75.5 L405.56 77.0 L405.69 69.7 L405.81 74.9 L405.94 73.6 L406.06 73.2 L406.19 71.6 L406.31 71.8 L406.44 71.1 L406.56 70.9 L406.69 81.4 L406.81 79.1 L406.94 74.1 L407.06 76.3 L407.19 71.2 L407.31 66.1 L407.44 68.8 L407.56 74.5 L407.69 78.3 L407.81 74.0 L407.94 71.2 L408.06 73.4 L408.19 71.2 L408.31 70.0 L408.44 73.4 L408.56 72.9 L408.69 71.7 L408.81 71.5 L408.94 71.4 L409.06 74.8 L409.19 78.2 L409.31 73.5 L409.44 80.6 L409.56 69.4 L409.69 74.9 L409.81 70.7 L409.94 73.6 L410.06 74.4 L410.19 75.7 L410.31 77.4 L410.44 72.5 L410.56 70.5 L410.69 73.5 L410.81 75.0 L410.94 72.1 L411.06 76.7 L411.19 79.0 L411.31 69.9 L411.44 75.2 L411.56 77.1 L411.69 68.5 L411.81 74.7 L411.94 73.4 L412.06 69.9 L412.19 77.9 L412.31 74.7 L412.44 72.7 L412.56 75.4 L412.69 76.0 L412.81 76.3 L412.94 75.8 L413.06 75.3 L413.19 70.7 L413.31 72.9 L413.44 74.5 L413.56 66.1 L413.69 80.3 L413.81 73.0 L413.94 71.0 L414.06 68.8 L414.19 74.8 L414.31 74.2 L414.44 72.4 L414.56 72.9 L414.69 71.5 L414.81 71.9 L414.94 73.8 L415.06 72.2 L415.19 76.1 L415.31 73.7 L415.44 74.5 L415.56 75.3 L415.69 77.8 L415.81 75.9 L415.94 74.8 L416.06 73.6 L416.19 71.7 L416.31 73.1 L416.44 76.1 L416.56 74.8 L416.69 73.0 L416.81 70.2 L416.94 69.6 L417.06 75.0 L417.19 77.1 L417.31 75.2 L417.44 70.1 L417.56 73.5 L417.69 74.7 L417.81 71.4 L417.94 75.1 L418.06 73.5 L418.19 71.7 L418.31 70.5 L418.44 76.5 L418.56 75.1 L418.69 71.5 L418.81 71.1 L418.94 76.7 L419.06 75.8 L419.19 73.2 L419.31 78.8 L419.44 73.3 L419.56 71.0 L419.69 77.3 L419.81 73.5 L419.94 75.1 L420.06 74.2 L420.19 71.2 L420.31 70.6 L420.44 73.5 L420.56 78.2 L420.69 71.2 L420.81 78.1 L420.94 74.7 L421.06 70.9 L421.19 74.9 L421.31 75.8 L421.44 71.5 L421.56 67.9 L421.69 75.1 L421.81 70.9 L421.94 75.4 L422.06 68.5 L422.19 73.7 L422.31 71.7 L422.44 69.8 L422.56 73.4 L422.69 74.6 L422.81 72.5 L422.94 70.7 L423.06 74.7 L423.19 69.0 L423.31 75.7 L423.44 75.5 L423.56 79.0 L423.69 76.7 L423.81 75.1 L423.94 74.9 L424.06 74.2 L424.19 70.2 L424.31 78.4 L424.44 75.6 L424.56 73.3 L424.69 70.8 L424.81 78.4 L424.94 75.7 L425.06 70.6 L425.19 76.1 L425.31 79.6 L425.44 74.0 L425.56 75.3 L425.69 72.9 L425.81 72.3 L425.94 77.2 L426.06 82.1 L426.19 74.4 L426.31 73.7 L426.44 76.4 L426.56 73.2 L426.69 76.2 L426.81 76.5 L426.94 71.1 L427.06 71.0 L427.19 73.9 L427.31 76.5 L427.44 74.9 L427.56 77.7 L427.69 70.1 L427.81 75.5 L427.94 72.3 L428.06 74.4 L428.19 75.0 L428.31 71.3 L428.44 73.4 L428.56 70.7 L428.69 74.9 L428.81 71.6 L428.94 72.7 L429.06 74.7 L429.19 72.2 L429.31 77.4 L429.44 72.2 L429.56 76.6 L429.69 74.9 L429.81 71.1 L429.94 73.5 L430.06 71.7 L430.19 73.0 L430.31 73.3 L430.44 79.4 L430.56 72.9 L430.69 78.7 L430.81 75.4 L430.94 70.3 L431.06 67.4 L431.19 76.1 L431.31 68.3 L431.44 76.2 L431.56 77.1 L431.69 75.2 L431.81 73.5 L431.94 73.4 L432.06 74.9 L432.19 73.2 L432.31 72.5 L432.44 73.0 L432.56 77.5 L432.69 72.3 L432.81 75.2 L432.94 70.8 L433.06 72.0 L433.19 70.1 L433.31 73.5 L433.44 76.1 L433.56 75.0 L433.69 72.7 L433.81 75.9 L433.94 73.1 L434.06 75.2 L434.19 74.9 L434.31 75.7 L434.44 66.9 L434.56 70.3 L434.69 76.3 L434.81 73.8 L434.94 80.6 L435.06 73.4 L435.19 72.5 L435.31 78.4 L435.44 75.7 L435.56 79.6 L435.69 75.6 L435.81 73.5 L435.94 76.2 L436.06 71.8 L436.19 72.8 L436.31 72.5 L436.44 73.5 L436.56 76.4 L436.69 72.7 L436.81 75.0 L436.94 72.7 L437.06 76.7 L437.19 66.1 L437.31 73.5 L437.44 74.6 L437.56 71.0 L437.69 77.0 L437.81 74.7 L437.94 77.8 L438.06 76.9 L438.19 76.0 L438.31 73.7 L438.44 70.9 L438.56 73.5 L438.69 72.8 L438.81 74.8 L438.94 72.8 L439.06 82.1 L439.19 69.5 L439.31 77.5 L439.44 72.7 L439.56 73.4 L439.69 76.8 L439.81 74.1 L439.94 70.6 L440.06 75.3 L440.19 73.5 L440.31 68.1 L440.44 74.7 L440.56 71.0 L440.69 71.9 L440.81 75.5 L440.94 75.0 L441.06 73.3 L441.19 80.4 L441.31 75.3 L441.44 72.3 L441.56 74.8 L441.69 73.7 L441.81 67.7 L441.94 69.5 L442.06 70.1 L442.19 80.1 L442.31 73.6 L442.44 73.3 L442.56 72.5 L442.69 76.9 L442.81 74.2 L442.94 79.0 L443.06 76.4 L443.19 78.9 L443.31 73.8 L443.44 75.2 L443.56 72.8 L443.69 73.6 L443.81 69.1 L443.94 72.4 L444.06 71.3 L444.19 72.2 L444.31 77.6 L444.44 74.9 L444.56 77.6 L444.69 76.6 L444.81 76.8 L444.94 77.0 L445.06 72.3 L445.19 76.4 L445.31 73.2 L445.44 72.6 L445.56 77.6 L445.69 80.4 L445.81 71.3 L445.94 79.1 L446.06 76.5 L446.19 71.6 L446.31 74.9 L446.44 75.2 L446.56 75.2 L446.69 73.1 L446.81 70.4 L446.94 74.2 L447.06 76.6 L447.19 76.4 L447.31 76.0 L447.44 77.3 L447.56 71.2 L447.69 74.0 L447.81 75.1 L447.94 77.0 L448.06 74.6 L448.19 75.6 L448.31 74.5 L448.44 80.2 L448.56 67.8 L448.69 74.0 L448.81 81.3 L448.94 74.8 L449.06 68.8 L449.19 74.5 L449.31 70.0 L449.44 72.1 L449.56 74.7 L449.69 79.1 L449.81 75.4 L449.94 76.0 L450.06 77.0 L450.19 74.7 L450.31 71.6 L450.44 73.8 L450.56 75.1 L450.69 73.3 L450.81 72.2 L450.94 73.1 L451.06 69.8 L451.19 71.1 L451.31 73.8 L451.44 73.1 L451.56 74.2 L451.69 78.2 L451.81 75.0 L451.94 74.0 L452.06 70.7 L452.19 71.0 L452.31 75.2 L452.44 71.6 L452.56 75.3 L452.69 71.0 L452.81 74.5 L452.94 73.9 L453.06 77.0 L453.19 73.0 L453.31 73.0 L453.44 74.8 L453.56 74.3 L453.69 79.0 L453.81 73.4 L453.94 72.6 L454.06 73.2 L454.19 75.5 L454.31 74.8 L454.44 76.1 L454.56 70.1 L454.69 81.3 L454.81 79.4 L454.94 74.0 L455.06 70.6 L455.19 74.5 L455.31 75.3 L455.44 67.7 L455.56 74.1 L455.69 69.8 L455.81 75.4 L455.94 78.1 L456.06 77.1 L456.19 69.8 L456.31 78.1 L456.44 76.7 L456.56 73.1 L456.69 75.5 L456.81 78.5 L456.94 73.1 L457.06 74.1 L457.19 72.5 L457.31 77.4 L457.44 67.9 L457.56 78.2 L457.69 71.3 L457.81 76.8 L457.94 69.4 L458.06 71.4 L458.19 72.4 L458.31 76.5 L458.44 69.4 L458.56 75.8 L458.69 72.3 L458.81 77.7 L458.94 73.2 L459.06 75.5 L459.19 73.6 L459.31 79.3 L459.44 73.1 L459.56 74.0 L459.69 79.8 L459.81 74.3 L459.94 76.1 L460.06 72.0 L460.19 74.7 L460.31 67.6 L460.44 74.4 L460.56 72.2 L460.69 69.8 L460.81 70.0 L460.94 77.4 L461.06 75.3 L461.19 69.7 L461.31 79.3 L461.44 72.1 L461.56 73.0 L461.69 74.8 L461.81 70.8 L461.94 69.4 L462.06 71.9 L462.19 77.5 L462.31 76.8 L462.44 69.5 L462.56 77.6 L462.69 74.2 L462.81 75.5 L462.94 74.2 L463.06 75.3 L463.19 71.2 L463.31 71.5 L463.44 72.1 L463.56 73.0 L463.69 75.9 L463.81 70.6 L463.94 78.7 L464.06 72.3 L464.19 72.4 L464.31 76.1 L464.44 75.4 L464.56 73.1 L464.69 71.0 L464.81 71.2 L464.94 69.5 L465.06 77.4 L465.19 77.2 L465.31 79.5 L465.44 75.5 L465.56 75.1 L465.69 76.3 L465.81 76.8 L465.94 73.4 L466.06 75.1 L466.19 80.3 L466.31 69.2 L466.44 70.0 L466.56 71.3 L466.69 76.3 L466.81 77.5 L466.94 73.1 L467.06 76.0 L467.19 74.0 L467.31 75.0 L467.44 72.5 L467.56 74.0 L467.69 74.1 L467.81 77.4 L467.94 80.5 L468.06 68.9 L468.19 75.6 L468.31 74.1 L468.44 76.9 L468.56 77.2 L468.69 76.4 L468.81 76.4 L468.94 71.4 L469.06 69.2 L469.19 78.9 L469.31 77.6 L469.44 71.3 L469.56 77.8 L469.69 76.0 L469.81 67.0 L469.94 76.7 L470.06 71.2 L470.19 77.5 L470.31 72.1 L470.44 72.0 L470.56 69.6 L470.69 73.5 L470.81 77.0 L470.94 72.2 L471.06 68.7 L471.19 80.3 L471.31 79.4 L471.44 76.1 L471.56 72.5 L471.69 70.6 L471.81 69.4 L471.94 75.7 L472.06 77.9 L472.19 71.0 L472.31 74.1 L472.44 73.3 L472.56 73.4 L472.69 75.6 L472.81 80.1 L472.94 72.3 L473.06 76.6 L473.19 77.2 L473.31 73.3 L473.44 73.7 L473.56 70.2 L473.69 77.2 L473.81 72.6 L473.94 72.2 L474.06 74.3 L474.19 71.6 L474.31 71.1 L474.44 73.2 L474.56 78.4 L474.69 73.5 L474.81 75.6 L474.94 69.9 L475.06 68.5 L475.19 79.4 L475.31 72.9 L475.44 69.6 L475.56 73.8 L475.69 75.9 L475.81 69.1 L475.94 71.5 L476.06 74.9 L476.19 71.4 L476.31 76.4 L476.44 76.9 L476.56 75.4 L476.69 72.9 L476.81 74.0 L476.94 72.3 L477.06 73.7 L477.19 75.0 L477.31 73.2 L477.44 76.9 L477.56 81.6 L477.69 72.5 L477.81 75.1 L477.94 76.5 L478.06 76.0 L478.19 73.4 L478.31 72.7 L478.44 77.0 L478.56 75.9 L478.69 75.6 L478.81 71.8 L478.94 75.9 L479.06 76.4 L479.19 73.6 L479.31 76.0 L479.44 80.4 L479.56 68.7 L479.69 75.9 L479.81 70.7 L479.94 70.1 L480.06 73.4 L480.19 75.7 L480.31 74.3 L480.44 70.7 L480.56 69.9 L480.69 72.5 L480.81 74.1 L480.94 71.7 L481.06 69.7 L481.19 79.2 L481.31 71.7 L481.44 73.6 L481.56 72.5 L481.69 72.4 L481.81 74.2 L481.94 73.2 L482.06 75.9 L482.19 70.7 L482.31 69.8 L482.44 79.8 L482.56 73.9 L482.69 76.3 L482.81 77.5 L482.94 75.7 L483.06 74.2 L483.19 69.6 L483.31 69.5 L483.44 76.9 L483.56 76.1 L483.69 75.8 L483.81 69.3 L483.94 67.9 L484.06 71.0 L484.19 70.7 L484.31 74.6 L484.44 71.1 L484.56 78.7 L484.69 72.3 L484.81 72.5 L484.94 76.6" fill="none" stroke="#f0f000" stroke-width="0.6"/>
<path d="M485.06 179.5 L485.19 175.9 L485.31 180.9 L485.44 184.1 L485.56 174.9 L485.69 177.8 L485.81 175.4 L485.94 172.9 L486.06 180.3 L486.19 180.5 L486.31 181.3 L486.44 179.7 L486.56 172.6 L486.69 178.4 L486.81 176.6 L486.94 175.1 L487.06 175.3 L487.19 180.7 L487.31 177.6 L487.44 184.2 L487.56 179.9 L487.69 172.9 L487.81 181.1 L487.94 182.1 L488.06 178.6 L488.19 175.0 L488.31 183.7 L488.44 174.7 L488.56 178.3 L488.69 172.9 L488.81 174.8 L488.94 173.5 L489.06 181.7 L489.19 181.9 L489.31 177.3 L489.44 174.5 L489.56 178.3 L489.69 179.6 L489.81 174.0 L489.94 175.1 L490.06 178.2 L490.19 180.6 L490.31 178.7 L490.44 179.8 L490.56 174.9 L490.69 171.2 L490.81 179.4 L490.94 175.8 L491.06 178.1 L491.19 177.4 L491.31 179.9 L491.44 176.2 L491.56 182.7 L491.69 178.6 L491.81 180.0 L491.94 180.3 L492.06 181.5 L492.19 179.7 L492.31 173.4 L492.44 176.7 L492.56 184.0 L492.69 179.9 L492.81 180.1 L492.94 179.9 L493.06 176.6 L493.19 176.5 L493.31 176.6 L493.44 181.9 L493.56 179.6 L493.69 183.7 L493.81 180.0 L493.94 184.0 L494.06 179.8 L494.19 175.0 L494.31 183.6 L494.44 179.5 L494.56 182.0 L494.69 179.1 L494.81 177.5 L494.94 179.0 L495.06 175.2 L495.19 175.0 L495.31 175.9 L495.44 177.0 L495.56 174.5 L495.69 178.2 L495.81 179.4 L495.94 184.5 L496.06 183.9 L496.19 178.4 L496.31 181.1 L496.44 177.9 L496.56 179.7 L496.69 178.4 L496.81 176.9 L496.94 178.7 L497.06 174.1 L497.19 179.8 L497.31 177.6 L497.44 175.3 L497.56 177.4 L497.69 180.1 L497.81 176.5 L497.94 179.9 L498.06 180.2 L498.19 183.1 L498.31 175.3 L498.44 178.2 L498.56 180.0 L498.69 182.9 L498.81 179.3 L498.94 180.7 L499.06 174.2 L499.19 176.8 L499.31 183.4 L499.44 177.7 L499.56 184.9 L499.69 176.3 L499.81 177.7 L499.94 173.8 L500.06 180.4 L500.19 179.3 L500.31 184.5 L500.44 179.0 L500.56 177.8 L500.69 174.3 L500.81 178.3 L500.94 181.3 L501.06 180.7 L501.19 182.1 L501.31 181.1 L501.44 178.4 L501.56 180.3 L501.69 179.0 L501.81 174.6 L501.94 183.6 L502.06 179.6 L502.19 175.4 L502.31 179.6 L502.44 179.4 L502.56 181.5 L502.69 182.8 L502.81 170.5 L502.94 180.1 L503.06 183.0 L503.19 175.7 L503.31 173.0 L503.44 179.3 L503.56 179.5 L503.69 179.5 L503.81 175.2 L503.94 177.1 L504.06 179.1 L504.19 180.7 L504.31 185.0 L504.44 179.4 L504.56 176.7 L504.69 171.5 L504.81 181.7 L504.94 178.1 L505.06 178.2 L505.19 175.6 L505.31 180.7 L505.44 173.2 L505.56 178.8 L505.69 178.9 L505.81 179.4 L505.94 182.4 L506.06 178.2 L506.19 178.8 L506.31 181.0 L506.44 173.9 L506.56 177.6 L506.69 178.7 L506.81 181.3 L506.94 176.1 L507.06 180.9 L507.19 179.6 L507.31 174.1 L507.44 174.1 L507.56 174.2 L507.69 178.9 L507.81 179.1 L507.94 180.7 L508.06 180.9 L508.19 176.9 L508.31 181.7 L508.44 180.9 L508.56 179.9 L508.69 179.9 L508.81 174.7 L508.94 179.6 L509.06 175.4 L509.19 174.9 L509.31 177.5 L509.44 178.9 L509.56 178.3 L509.69 177.5 L509.81 175.5 L509.94 179.1 L510.06 176.3 L510.19 174.3 L510.31 178.8 L510.44 182.8 L510.56 177.3 L510.69 175.3 L510.81 182.6 L510.94 183.6 L511.06 177.6 L511.19 177.9 L511.31 179.1 L511.44 186.5 L511.56 178.9 L511.69 181.5 L511.81 179.8 L511.94 173.1 L512.06 175.2 L512.19 174.8 L512.31 179.8 L512.44 178.8 L512.56 183.8 L512.69 177.7 L512.81 179.4 L512.94 178.7 L513.06 178.9 L513.19 185.4 L513.31 179.4 L513.44 182.9 L513.56 182.4 L513.69 176.7 L513.81 180.5 L513.94 177.4 L514.06 178.8 L514.19 179.0 L514.31 178.6 L514.44 177.1 L514.56 183.2 L514.69 177.7 L514.81 180.6 L514.94 183.5 L515.06 180.4 L515.19 181.6 L515.31 182.7 L515.44 181.8 L515.56 183.6 L515.69 174.2 L515.81 184.4 L515.94 178.6 L516.06 173.3 L516.19 176.6 L516.31 174.3 L516.44 178.4 L516.56 174.0 L516.69 175.5 L516.81 179.4 L516.94 179.0 L517.06 176.1 L517.19 177.8 L517.31 178.2 L517.44 178.7 L517.56 178.5 L517.69 177.8 L517.81 181.1 L517.94 173.7 L518.06 177.0 L518.19 178.9 L518.31 177.3 L518.44 176.8 L518.56 177.2 L518.69 179.1 L518.81 182.2 L518.94 177.9 L519.06 177.7 L519.19 179.6 L519.31 177.8 L519.44 172.7 L519.56 179.3 L519.69 177.4 L519.81 176.8 L519.94 180.4 L520.06 178.6 L520.19 176.8 L520.31 172.0 L520.44 173.3 L520.56 178.5 L520.69 178.1 L520.81 179.8 L520.94 179.2 L521.06 177.1 L521.19 174.7 L521.31 175.2 L521.44 178.1 L521.56 175.1 L521.69 180.8 L521.81 174.5 L521.94 173.1 L522.06 177.9 L522.19 173.2 L522.31 183.4 L522.44 175.5 L522.56 178.3 L522.69 177.8 L522.81 176.0 L522.94 173.2 L523.06 172.9 L523.19 181.1 L523.31 181.6 L523.44 185.0 L523.56 174.1 L523.69 180.2 L523.81 178.5 L523.94 181.0 L524.06 177.0 L524.19 180.7 L524.31 181.2 L524.44 180.3 L524.56 182.8 L524.69 178.0 L524.81 183.1 L524.94 176.4 L525.06 183.5 L525.19 170.5 L525.31 178.5 L525.44 176.1 L525.56 178.5 L525.69 181.6 L525.81 180.7 L525.94 178.8 L526.06 183.6 L526.19 174.1 L526.31 176.1 L526.44 183.0 L526.56 179.5 L526.69 172.3 L526.81 179.5 L526.94 174.9 L527.06 182.9 L527.19 181.9 L527.31 176.9 L527.44 182.4 L527.56 176.0 L527.69 181.3 L527.81 180.2 L527.94 178.1 L528.06 174.2 L528.19 177.7 L528.31 171.6 L528.44 176.8 L528.56 172.9 L528.69 182.1 L528.81 175.6 L528.94 171.2 L529.06 180.3 L529.19 179.6 L529.31 177.0 L529.44 184.9 L529.56 180.8 L529.69 178.7 L529.81 176.6 L529.94 170.5 L530.06 179.9 L530.19 181.4 L530.31 176.7 L530.44 174.3 L530.56 178.4 L530.69 173.5 L530.81 178.5 L530.94 180.8 L531.06 183.0 L531.19 179.3 L531.31 179.1 L531.44 180.7 L531.56 182.7 L531.69 177.5 L531.81 174.8 L531.94 176.1 L532.06 174.7 L532.19 175.8 L532.31 178.1 L532.44 179.5 L532.56 179.0 L532.69 178.7 L532.81 177.4 L532.94 179.8 L533.06 181.2 L533.19 180.8 L533.31 183.0 L533.44 177.6 L533.56 177.7 L533.69 183.6 L533.81 179.1 L533.94 179.7 L534.06 177.5 L534.19 181.4 L534.31 177.3 L534.44 175.5 L534.56 178.3 L534.69 177.2 L534.81 181.0 L534.94 177.4 L535.06 178.9 L535.19 177.8 L535.31 179.5 L535.44 176.6 L535.56 181.8 L535.69 174.2 L535.81 177.3 L535.94 176.4 L536.06 180.4 L536.19 178.6 L536.31 180.0 L536.44 177.5 L536.56 176.3 L536.69 175.1 L536.81 177.5 L536.94 176.9 L537.06 179.3 L537.19 179.6 L537.31 181.4 L537.44 178.2 L537.56 176.3 L537.69 175.3 L537.81 178.7 L537.94 179.6 L538.06 184.3 L538.19 179.0 L538.31 183.8 L538.44 184.1 L538.56 175.4 L538.69 182.1 L538.81 181.9 L538.94 182.5 L539.06 178.5 L539.19 181.4 L539.31 177.1 L539.44 178.3 L539.56 178.6 L539.69 183.8 L539.81 177.9 L539.94 181.4 L540.06 178.7 L540.19 176.4 L540.31 179.2 L540.44 180.5 L540.56 176.4 L540.69 180.4 L540.81 176.4 L540.94 175.9 L541.06 179.2 L541.19 177.8 L541.31 175.6 L541.44 173.6 L541.56 178.6 L541.69 179.2 L541.81 177.1 L541.94 179.1 L542.06 173.9 L542.19 179.7 L542.31 179.7 L542.44 179.3 L542.56 176.7 L542.69 178.7 L542.81 178.9 L542.94 181.7 L543.06 179.3 L543.19 179.3 L543.31 176.3 L543.44 181.1 L543.56 182.0 L543.69 177.0 L543.81 180.4 L543.94 179.4 L544.06 178.4 L544.19 174.6 L544.31 183.8 L544.44 172.9 L544.56 179.4 L544.69 177.4 L544.81 181.9 L544.94 177.2 L545.06 178.6 L545.19 180.3 L545.31 179.9 L545.44 176.9 L545.56 180.5 L545.69 179.7 L545.81 181.5 L545.94 177.0 L546.06 178.4 L546.19 177.3 L546.31 176.0 L546.44 179.3 L546.56 179.7 L546.69 182.8 L546.81 177.5 L546.94 179.7 L547.06 181.9 L547.19 178.2 L547.31 178.7 L547.44 178.9 L547.56 176.4 L547.69 175.5 L547.81 181.8 L547.94 179.0 L548.06 178.3 L548.19 174.8 L548.31 178.9 L548.44 182.0 L548.56 175.1 L548.69 175.8 L548.81 181.8 L548.94 182.8 L549.06 183.1 L549.19 176.8 L549.31 180.3 L549.44 176.3 L549.56 180.1 L549.69 177.4 L549.81 179.1 L549.94 182.5 L550.06 179.5 L550.19 177.8 L550.31 178.7 L550.44 179.3 L550.56 177.0 L550.69 179.1 L550.81 180.3 L550.94 183.2 L551.06 172.3 L551.19 174.9 L551.31 174.8 L551.44 181.1 L551.56 185.8 L551.69 179.1 L551.81 178.9 L551.94 181.9 L552.06 171.2 L552.19 178.0 L552.31 170.5 L552.44 179.0 L552.56 177.0 L552.69 177.1 L552.81 179.5 L552.94 176.8 L553.06 181.8 L553.19 178.5 L553.31 179.6 L553.44 186.1 L553.56 177.2 L553.69 181.3 L553.81 176.0 L553.94 182.2 L554.06 181.4 L554.19 178.9 L554.31 181.5 L554.44 183.3 L554.56 182.6 L554.69 178.5 L554.81 178.3 L554.94 181.8 L555.06 174.1 L555.19 176.7 L555.31 179.9 L555.44 180.2 L555.56 184.0 L555.69 183.7 L555.81 179.5 L555.94 179.8 L556.06 174.6 L556.19 177.9 L556.31 179.3 L556.44 177.8 L556.56 178.7 L556.69 180.3 L556.81 175.7 L556.94 176.8 L557.06 173.2 L557.19 181.9 L557.31 175.4 L557.44 173.4 L557.56 180.8 L557.69 177.9 L557.81 181.4 L557.94 177.4 L558.06 184.8 L558.19 180.6 L558.31 178.9 L558.44 178.8 L558.56 177.9 L558.69 180.9 L558.81 184.4 L558.94 177.2 L559.06 175.3 L559.19 180.3 L559.31 181.7 L559.44 174.1 L559.56 176.4 L559.69 175.5 L559.81 180.2 L559.94 180.0 L560.06 176.3 L560.19 175.2 L560.31 180.5 L560.44 172.4 L560.56 180.4 L560.69 178.0 L560.81 184.2 L560.94 181.4 L561.06 176.8 L561.19 177.7 L561.31 177.7 L561.44 176.3 L561.56 178.7 L561.69 181.4 L561.81 174.0 L561.94 177.8 L562.06 182.9 L562.19 180.7 L562.31 176.1 L562.44 176.1 L562.56 176.0 L562.69 173.8 L562.81 181.9 L562.94 178.7 L563.06 176.4 L563.19 174.3 L563.31 177.4 L563.44 177.0 L563.56 183.6 L563.69 177.1 L563.81 178.8 L563.94 181.7 L564.06 180.5 L564.19 178.0 L564.31 172.1 L564.44 182.6 L564.56 180.3 L564.69 177.2 L564.81 178.2 L564.94 175.7 L565.06 175.8 L565.19 174.1 L565.31 180.0 L565.44 180.0 L565.56 179.0 L565.69 180.8 L565.81 180.1 L565.94 178.9 L566.06 175.9 L566.19 180.2 L566.31 182.0 L566.44 180.4 L566.56 182.2 L566.69 177.1 L566.81 175.6 L566.94 182.2 L567.06 176.8 L567.19 179.2 L567.31 177.9 L567.44 178.6 L567.56 177.7 L567.69 176.9 L567.81 173.2 L567.94 184.1 L568.06 179.1 L568.19 172.8 L568.31 175.8 L568.44 175.2 L568.56 176.3 L568.69 171.0 L568.81 180.2 L568.94 183.3 L569.06 177.8 L569.19 180.7 L569.31 180.3 L569.44 174.8 L569.56 182.1 L569.69 173.5 L569.81 176.8 L569.94 177.4 L570.06 182.2 L570.19 178.8 L570.31 178.1 L570.44 176.1 L570.56 178.8 L570.69 178.6 L570.81 180.6 L570.94 182.6 L571.06 180.7 L571.19 178.6 L571.31 178.1 L571.44 183.2 L571.56 179.1 L571.69 178.5 L571.81 183.8 L571.94 183.1 L572.06 180.2 L572.19 178.2 L572.31 176.6 L572.44 181.6 L572.56 177.2 L572.69 181.3 L572.81 176.2 L572.94 178.8 L573.06 179.7 L573.19 178.9 L573.31 179.2 L573.44 179.6 L573.56 175.2 L573.69 175.2 L573.81 178.1 L573.94 183.8 L574.06 178.1 L574.19 175.8 L574.31 176.6 L574.44 178.6 L574.56 182.0 L574.69 176.8 L574.81 180.1 L574.94 179.0 L575.06 177.5 L575.19 175.7 L575.31 178.1 L575.44 176.4 L575.56 180.1 L575.69 173.3 L575.81 181.8 L575.94 180.7 L576.06 180.2 L576.19 182.9 L576.31 180.3 L576.44 173.5 L576.56 178.7 L576.69 179.8 L576.81 176.5 L576.94 175.2 L577.06 179.8 L577.19 180.0 L577.31 177.3 L577.44 177.8 L577.56 177.0 L577.69 176.8 L577.81 178.3 L577.94 181.6 L578.06 173.8 L578.19 177.5 L578.31 183.2 L578.44 179.4 L578.56 179.0 L578.69 180.9 L578.81 175.6 L578.94 175.0 L579.06 173.6 L579.19 174.2 L579.31 179.2 L579.44 181.0 L579.56 177.3 L579.69 176.5 L579.81 179.7 L579.94 180.3 L580.06 179.3 L580.19 172.9 L580.31 176.9 L580.44 171.1 L580.56 179.2 L580.69 176.0 L580.81 176.6 L580.94 182.9 L581.06 182.4 L581.19 179.9 L581.31 179.3 L581.44 179.0 L581.56 176.8 L581.69 178.4 L581.81 184.1 L581.94 175.9 L582.06 176.6 L582.19 179.0 L582.31 181.1 L582.44 180.9 L582.56 175.7 L582.69 178.1 L582.81 177.7 L582.94 174.9 L583.06 178.7 L583.19 177.1 L583.31 181.2 L583.44 179.8 L583.56 176.2 L583.69 178.7 L583.81 177.5 L583.94 176.6 L584.06 177.1 L584.19 181.6 L584.31 177.3 L584.44 173.5 L584.56 176.2 L584.69 180.9 L584.81 184.8 L584.94 175.4 L585.06 177.5 L585.19 177.5 L585.31 174.4 L585.44 179.7 L585.56 178.4 L585.69 179.3 L585.81 185.0 L585.94 177.7 L586.06 180.8 L586.19 180.9 L586.31 176.6 L586.44 176.8 L586.56 183.0 L586.69 180.6 L586.81 178.9 L586.94 175.3 L587.06 181.1 L587.19 180.0 L587.31 184.9 L587.44 182.8 L587.56 180.8 L587.69 179.3 L587.81 178.7 L587.94 176.9 L588.06 179.4 L588.19 179.2 L588.31 180.4 L588.44 181.7 L588.56 179.4 L588.69 176.9 L588.81 180.9 L588.94 183.0 L589.06 176.1 L589.19 179.7 L589.31 180.1 L589.44 180.1 L589.56 180.0 L589.69 178.2 L589.81 178.2 L589.94 183.4 L590.06 183.6 L590.19 174.4 L590.31 171.1 L590.44 179.8 L590.56 176.5 L590.69 177.0 L590.81 173.9 L590.94 179.5 L591.06 178.3 L591.19 176.9 L591.31 181.1 L591.44 185.6 L591.56 182.8 L591.69 181.9 L591.81 177.3 L591.94 180.4 L592.06 178.4 L592.19 181.9 L592.31 180.2 L592.44 178.4 L592.56 180.1 L592.69 176.4 L592.81 180.8 L592.94 182.9 L593.06 177.4 L593.19 180.1 L593.31 173.6 L593.44 181.2 L593.56 181.1 L593.69 175.5 L593.81 183.6 L593.94 178.8 L594.06 173.5 L594.19 174.5 L594.31 181.0 L594.44 177.7 L594.56 181.7 L594.69 174.0 L594.81 178.2 L594.94 181.3 L595.06 176.5 L595.19 180.5 L595.31 177.5 L595.44 179.5 L595.56 179.4 L595.69 185.0 L595.81 174.9 L595.94 180.8 L596.06 182.3 L596.19 175.2 L596.31 178.7 L596.44 185.2 L596.56 181.6 L596.69 170.5 L596.81 177.8 L596.94 173.5 L597.06 179.4 L597.19 176.4 L597.31 176.9 L597.44 176.1 L597.56 179.4 L597.69 177.1 L597.81 175.9 L597.94 177.8 L598.06 179.7 L598.19 176.0 L598.31 181.7 L598.44 173.7 L598.56 179.7 L598.69 177.4 L598.81 183.1 L598.94 176.6 L599.06 176.6 L599.19 174.6 L599.31 184.3 L599.44 180.3 L599.56 175.3 L599.69 177.5 L599.81 175.7 L599.94 182.9 L600.06 179.7 L600.19 172.6 L600.31 179.1 L600.44 181.2 L600.56 178.5 L600.69 179.9 L600.81 178.2 L600.94 179.1 L601.06 179.1 L601.19 176.4 L601.31 179.5 L601.44 179.0 L601.56 178.4 L601.69 176.5 L601.81 175.5 L601.94 179.2 L602.06 180.9 L602.19 171.5 L602.31 176.9 L602.44 182.4 L602.56 181.2 L602.69 176.4 L602.81 182.4 L602.94 175.6 L603.06 176.2 L603.19 184.2 L603.31 177.2 L603.44 177.9 L603.56 173.7 L603.69 175.6 L603.81 175.1 L603.94 178.1 L604.06 173.1 L604.19 181.6 L604.31 177.5 L604.44 176.7 L604.56 176.7 L604.69 180.7 L604.81 183.0 L604.94 177.3 L605.06 183.2 L605.19 183.2 L605.31 182.4 L605.44 179.4 L605.56 174.2 L605.69 180.5 L605.81 177.3 L605.94 179.1 L606.06 173.0 L606.19 177.7 L606.31 179.2 L606.44 175.8 L606.56 179.4 L606.69 183.4 L606.81 179.2 L606.94 176.5 L607.06 185.5 L607.19 172.2 L607.31 175.8 L607.44 179.7 L607.56 176.8 L607.69 171.8 L607.81 179.3 L607.94 180.9 L608.06 176.2 L608.19 182.8 L608.31 180.0 L608.44 182.0 L608.56 174.0 L608.69 178.5 L608.81 183.2 L608.94 184.4 L609.06 182.4 L609.19 178.5 L609.31 179.0 L609.44 176.7 L609.56 181.7 L609.69 176.5 L609.81 178.9 L609.94 172.5 L610.06 174.1 L610.19 183.7 L610.31 178.7 L610.44 179.1 L610.56 172.1 L610.69 178.4 L610.81 184.6 L610.94 174.1 L611.06 171.5 L611.19 178.0 L611.31 176.9 L611.44 177.9 L611.56 174.8 L611.69 174.5 L611.81 174.9 L611.94 180.4 L612.06 178.4 L612.19 180.9 L612.31 175.3 L612.44 180.2 L612.56 177.2 L612.69 178.8 L612.81 181.2 L612.94 178.6 L613.06 177.5 L613.19 173.6 L613.31 178.7 L613.44 180.8 L613.56 176.6 L613.69 178.3 L613.81 173.3 L613.94 174.6 L614.06 179.7 L614.19 182.3 L614.31 177.6 L614.44 173.6 L614.56 177.4 L614.69 173.9 L614.81 177.7 L614.94 184.2 L615.06 179.4 L615.19 178.1 L615.31 181.5 L615.44 177.4 L615.56 179.5 L615.69 179.1 L615.81 179.8 L615.94 174.2 L616.06 180.6 L616.19 181.1 L616.31 171.8 L616.44 170.5 L616.56 175.9 L616.69 182.9 L616.81 178.6 L616.94 180.5 L617.06 180.1 L617.19 181.1 L617.31 176.6 L617.44 176.8 L617.56 179.6 L617.69 180.3 L617.81 180.2 L617.94 179.5 L618.06 177.1 L618.19 181.8 L618.31 179.9 L618.44 181.6 L618.56 171.0 L618.69 181.5 L618.81 171.3 L618.94 179.1 L619.06 176.5 L619.19 178.9 L619.31 177.1 L619.44 177.6 L619.56 179.1 L619.69 179.5 L619.81 176.1 L619.94 171.0 L620.06 176.2 L620.19 180.1 L620.31 176.0 L620.44 179.8 L620.56 177.4 L620.69 175.7 L620.81 182.0 L620.94 183.4 L621.06 178.2 L621.19 178.4 L621.31 181.3 L621.44 174.6 L621.56 175.9 L621.69 181.9 L621.81 181.2 L621.94 177.0 L622.06 176.2 L622.19 179.5 L622.31 174.3 L622.44 177.0 L622.56 177.8 L622.69 171.2 L622.81 180.3 L622.94 180.8 L623.06 181.7 L623.19 174.2 L623.31 174.7 L623.44 176.1 L623.56 174.6 L623.69 184.6 L623.81 175.6 L623.94 177.6 L624.06 179.1 L624.19 179.9 L624.31 182.8 L624.44 175.3 L624.56 181.1 L624.69 178.9 L624.81 175.0 L624.94 178.9 L625.06 174.3 L625.19 183.3 L625.31 176.3 L625.44 181.5 L625.56 182.4 L625.69 176.7 L625.81 175.8 L625.94 178.9 L626.06 175.4 L626.19 181.2 L626.31 179.0 L626.44 176.2 L626.56 176.5 L626.69 180.7 L626.81 174.2 L626.94 183.5 L627.06 176.2 L627.19 177.9 L627.31 175.7 L627.44 183.3 L627.56 181.0 L627.69 182.4 L627.81 180.4 L627.94 178.8 L628.06 183.6 L628.19 180.5 L628.31 179.8 L628.44 180.2 L628.56 180.7 L628.69 179.3 L628.81 178.0 L628.94 173.7 L629.06 184.6 L629.19 174.6 L629.31 172.1 L629.44 176.4 L629.56 184.3 L629.69 182.1 L629.81 176.7 L629.94 179.3 L630.06 178.4 L630.19 172.6 L630.31 177.5 L630.44 179.4 L630.56 182.0 L630.69 174.9 L630.81 171.8 L630.94 173.8 L631.06 179.5 L631.19 178.7 L631.31 178.9 L631.44 178.9 L631.56 177.4 L631.69 174.4 L631.81 179.9 L631.94 179.7 L632.06 180.2 L632.19 182.2 L632.31 174.8 L632.44 171.5 L632.56 173.2 L632.69 184.9 L632.81 175.8 L632.94 179.7 L633.06 178.5 L633.19 180.7 L633.31 186.5 L633.44 177.0 L633.56 178.0 L633.69 176.7 L633.81 179.2 L633.94 180.1 L634.06 175.6 L634.19 182.4 L634.31 181.9 L634.44 179.8 L634.56 178.2 L634.69 177.8 L634.81 173.6 L634.94 180.5 L635.06 175.6 L635.19 177.0 L635.31 181.5 L635.44 175.7 L635.56 176.9 L635.69 181.1 L635.81 184.1 L635.94 176.4 L636.06 181.8 L636.19 176.5 L636.31 179.7 L636.44 180.0 L636.56 175.1 L636.69 181.6 L636.81 183.9 L636.94 178.7 L637.06 179.3 L637.19 175.0 L637.31 183.9 L637.44 178.7 L637.56 174.7 L637.69 180.8 L637.81 174.1 L637.94 176.4 L638.06 172.1 L638.19 182.6 L638.31 185.1 L638.44 176.6 L638.56 176.5 L638.69 176.8 L638.81 176.8 L638.94 180.2 L639.06 182.9 L639.19 175.5 L639.31 179.8 L639.44 173.1 L639.56 183.1 L639.69 178.2 L639.81 176.4 L639.94 183.1 L640.06 178.2 L640.19 182.6 L640.31 181.7 L640.44 183.5 L640.56 176.1 L640.69 178.7 L640.81 179.6 L640.94 177.9" fill="none" stroke="#f0f000" stroke-width="0.6"/>
<path d="M641.06 78.7 L641.19 72.0 L641.31 77.1 L641.44 78.2 L641.56 68.2 L641.69 71.2 L641.81 71.4 L641.94 72.5 L642.06 75.3 L642.19 73.6 L642.31 74.3 L642.44 72.7 L642.56 73.9 L642.69 75.6 L642.81 76.3 L642.94 71.8 L643.06 73.8 L643.19 71.8 L643.31 73.6 L643.44 69.8 L643.56 77.0 L643.69 76.1 L643.81 73.7 L643.94 72.0 L644.06 72.7 L644.19 72.1 L644.31 69.5 L644.44 79.0 L644.56 82.1 L644.69 70.4 L644.81 70.6 L644.94 75.8 L645.06 75.9 L645.19 69.4 L645.31 68.3 L645.44 75.7 L645.56 68.1 L645.69 78.4 L645.81 72.6 L645.94 74.4 L646.06 74.1 L646.19 72.4 L646.31 73.7 L646.44 73.2 L646.56 77.8 L646.69 73.8 L646.81 74.0 L646.94 72.5 L647.06 72.2 L647.19 71.9 L647.31 74.1 L647.44 79.6 L647.56 77.4 L647.69 74.8 L647.81 79.1 L647.94 77.1 L648.06 74.7 L648.19 73.6 L648.31 70.8 L648.44 74.8 L648.56 73.2 L648.69 69.3 L648.81 70.2 L648.94 79.9 L649.06 74.7 L649.19 75.6 L649.31 74.7 L649.44 72.7 L649.56 75.5 L649.69 77.4 L649.81 73.2 L649.94 75.6 L650.06 77.2 L650.19 72.7 L650.31 74.6 L650.44 71.9 L650.56 75.9 L650.69 73.0 L650.81 77.5 L650.94 71.8 L651.06 79.2 L651.19 73.2 L651.31 71.6 L651.44 71.4 L651.56 76.1 L651.69 71.5 L651.81 79.5 L651.94 77.9 L652.06 75.7 L652.19 69.8 L652.31 74.0 L652.44 71.9 L652.56 68.7 L652.69 75.4 L652.81 80.7 L652.94 72.5 L653.06 76.5 L653.19 78.0 L653.31 71.2 L653.44 73.1 L653.56 74.9 L653.69 75.5 L653.81 70.7 L653.94 74.7 L654.06 73.8 L654.19 77.0 L654.31 69.3 L654.44 72.4 L654.56 72.6 L654.69 73.1 L654.81 76.3 L654.94 72.2 L655.06 82.1 L655.19 72.0 L655.31 76.6 L655.44 77.2 L655.56 77.0 L655.69 73.5 L655.81 71.6 L655.94 73.3 L656.06 76.1 L656.19 74.5 L656.31 75.8 L656.44 75.8 L656.56 71.4 L656.69 71.3 L656.81 78.4 L656.94 72.6 L657.06 69.3 L657.19 79.7 L657.31 71.6 L657.44 71.3 L657.56 77.0 L657.69 70.7 L657.81 71.5 L657.94 77.2 L658.06 71.6 L658.19 81.6 L658.31 74.4 L658.44 82.1 L658.56 74.5 L658.69 74.3 L658.81 72.2 L658.94 73.4 L659.06 72.6 L659.19 74.0 L659.31 76.4 L659.44 70.3 L659.56 71.3 L659.69 67.8 L659.81 78.6 L659.94 73.9 L660.06 74.1 L660.19 73.9 L660.31 77.1 L660.44 75.1 L660.56 76.7 L660.69 73.6 L660.81 73.7 L660.94 73.9 L661.06 68.5 L661.19 77.4 L661.31 69.4 L661.44 71.1 L661.56 76.1 L661.69 74.3 L661.81 76.5 L661.94 79.2 L662.06 79.7 L662.19 78.2 L662.31 73.4 L662.44 80.2 L662.56 71.5 L662.69 73.8 L662.81 77.1 L662.94 73.5 L663.06 73.7 L663.19 73.0 L663.31 78.2 L663.44 66.7 L663.56 77.9 L663.69 77.3 L663.81 73.9 L663.94 75.8 L664.06 71.2 L664.19 77.4 L664.31 82.1 L664.44 71.3 L664.56 78.3 L664.69 73.9 L664.81 73.1 L664.94 72.6 L665.06 73.5 L665.19 70.3 L665.31 70.0 L665.44 79.1 L665.56 74.0 L665.69 75.8 L665.81 75.0 L665.94 75.5 L666.06 69.5 L666.19 71.3 L666.31 76.0 L666.44 77.1 L666.56 70.7 L666.69 72.4 L666.81 70.9 L666.94 76.1 L667.06 75.1 L667.19 74.2 L667.31 72.2 L667.44 75.1 L667.56 74.2 L667.69 71.9 L667.81 75.1 L667.94 72.1 L668.06 77.0 L668.19 76.0 L668.31 72.0 L668.44 75.9 L668.56 74.3 L668.69 72.0 L668.81 71.4 L668.94 69.1 L669.06 70.7 L669.19 75.1 L669.31 77.7 L669.44 72.2 L669.56 74.6 L669.69 75.1 L669.81 76.4 L669.94 75.4 L670.06 77.8 L670.19 76.4 L670.31 71.8 L670.44 75.3 L670.56 67.1 L670.69 73.6 L670.81 74.2 L670.94 75.8 L671.06 73.2 L671.19 76.6 L671.31 78.1 L671.44 71.6 L671.56 72.5 L671.69 74.9 L671.81 75.6 L671.94 74.5 L672.06 76.6 L672.19 70.6 L672.31 76.4 L672.44 77.6 L672.56 77.4 L672.69 75.4 L672.81 73.4 L672.94 75.3 L673.06 73.9 L673.19 69.3 L673.31 72.3 L673.44 74.0 L673.56 72.6 L673.69 71.3 L673.81 73.4 L673.94 73.0 L674.06 74.3 L674.19 74.0 L674.31 74.6 L674.44 77.1 L674.56 74.5 L674.69 75.3 L674.81 70.4 L674.94 66.1 L675.06 72.9 L675.19 76.1 L675.31 73.1 L675.44 72.2 L675.56 70.4 L675.69 76.8 L675.81 72.5 L675.94 74.8 L676.06 77.5 L676.19 75.7 L676.31 80.8 L676.44 73.7 L676.56 77.0 L676.69 76.2 L676.81 72.1 L676.94 74.2 L677.06 72.4 L677.19 71.0 L677.31 75.0 L677.44 71.8 L677.56 79.1 L677.69 71.9 L677.81 72.5 L677.94 74.4 L678.06 72.5 L678.19 74.3 L678.31 72.3 L678.44 69.8 L678.56 66.9 L678.69 70.2 L678.81 78.7 L678.94 75.4 L679.06 74.6 L679.19 72.7 L679.31 73.7 L679.44 75.0 L679.56 69.9 L679.69 71.7 L679.81 71.4 L679.94 77.9 L680.06 70.9 L680.19 77.6 L680.31 72.7 L680.44 82.1 L680.56 73.9 L680.69 74.2 L680.81 78.2 L680.94 76.7" fill="none" stroke="#f0f000" stroke-width="0.6"/>
<rect x="71" y="77.1" width="1" height="98.4" fill="#484800"/>
<rect x="199" y="77.1" width="1" height="98.4" fill="#484800"/>
<rect x="356" y="77.1" width="1" height="98.4" fill="#484800"/>
<rect x="485" y="77.1" width="1" height="98.4" fill="#484800"/>
<rect x="641" y="77.1" width="1" height="98.4" fill="#484800"/>
<path d="M30.06 350.0 L30.19 344.0 L30.31 350.6 L30.44 352.2 L30.56 346.9 L30.69 345.7 L30.81 343.9 L30.94 350.3 L31.06 348.1 L31.19 347.2 L31.31 343.5 L31.44 352.1 L31.56 349.8 L31.69 347.1 L31.81 351.6 L31.94 344.3 L32.06 349.8 L32.19 344.2 L32.31 351.4 L32.44 346.4 L32.56 350.9 L32.69 346.0 L32.81 348.4 L32.94 350.6 L33.06 344.5 L33.19 347.5 L33.31 344.7 L33.44 349.8 L33.56 345.4 L33.69 346.1 L33.81 346.6 L33.94 350.7 L34.06 344.1 L34.19 347.1 L34.31 346.2 L34.44 345.6 L34.56 344.8 L34.69 346.7 L34.81 347.8 L34.94 342.6 L35.06 347.9 L35.19 343.6 L35.31 347.2 L35.44 354.0 L35.56 344.3 L35.69 347.0 L35.81 346.4 L35.94 350.1 L36.06 345.8 L36.19 341.8 L36.31 342.4 L36.44 347.7 L36.56 348.0 L36.69 350.4 L36.81 345.6 L36.94 349.2 L37.06 344.0 L37.19 351.1 L37.31 347.0 L37.44 345.2 L37.56 347.7 L37.69 352.4 L37.81 344.7 L37.94 343.5 L38.06 344.2 L38.19 343.7 L38.31 347.0 L38.44 348.3 L38.56 346.7 L38.69 347.8 L38.81 350.8 L38.94 346.3 L39.06 343.4 L39.19 340.3 L39.31 347.9 L39.44 345.2 L39.56 346.5 L39.69 348.4 L39.81 348.6 L39.94 342.5 L40.06 344.3 L40.19 347.4 L40.31 346.8 L40.44 350.6 L40.56 345.7 L40.69 341.0 L40.81 350.7 L40.94 342.3 L41.06 344.3 L41.19 348.4 L41.31 344.0 L41.44 354.7 L41.56 347.9 L41.69 348.8 L41.81 345.9 L41.94 353.9 L42.06 348.8 L42.19 345.0 L42.31 351.0 L42.44 342.1 L42.56 345.4 L42.69 348.1 L42.81 347.6 L42.94 344.3 L43.06 351.9 L43.19 351.6 L43.31 344.4 L43.44 348.3 L43.56 345.3 L43.69 345.9 L43.81 350.2 L43.94 347.6 L44.06 346.9 L44.19 347.5 L44.31 343.7 L44.44 350.9 L44.56 344.9 L44.69 351.1 L44.81 345.8 L44.94 345.8 L45.06 351.7 L45.19 347.8 L45.31 345.3 L45.44 345.6 L45.56 349.0 L45.69 352.8 L45.81 349.0 L45.94 346.0 L46.06 343.8 L46.19 345.2 L46.31 346.8 L46.44 347.9 L46.56 345.2 L46.69 351.0 L46.81 344.3 L46.94 345.1 L47.06 348.7 L47.19 348.6 L47.31 346.0 L47.44 350.1 L47.56 343.0 L47.69 352.1 L47.81 353.8 L47.94 353.1 L48.06 347.6 L48.19 353.1 L48.31 347.4 L48.44 351.2 L48.56 346.6 L48.69 347.8 L48.81 348.8 L48.94 342.0 L49.06 346.6 L49.19 352.4 L49.31 339.2 L49.44 348.4 L49.56 350.0 L49.69 348.2 L49.81 347.8 L49.94 351.4 L50.06 348.2 L50.19 341.5 L50.31 344.4 L50.44 346.3 L50.56 347.6 L50.69 345.9 L50.81 346.9 L50.94 352.2 L51.06 339.2 L51.19 350.7 L51.31 350.0 L51.44 349.0 L51.56 347.2 L51.69 347.4 L51.81 348.3 L51.94 347.9 L52.06 345.0 L52.19 349.5 L52.31 344.7 L52.44 347.1 L52.56 346.1 L52.69 343.7 L52.81 349.0 L52.94 347.0 L53.06 343.7 L53.19 347.0 L53.31 343.1 L53.44 351.5 L53.56 348.7 L53.69 353.2 L53.81 345.5 L53.94 349.3 L54.06 344.3 L54.19 344.6 L54.31 346.9 L54.44 348.4 L54.56 350.0 L54.69 346.4 L54.81 350.5 L54.94 350.1 L55.06 344.6 L55.19 346.7 L55.31 344.5 L55.44 352.3 L55.56 345.6 L55.69 349.8 L55.81 349.9 L55.94 346.4 L56.06 345.7 L56.19 348.2 L56.31 344.9 L56.44 343.4 L56.56 344.3 L56.69 348.2 L56.81 347.8 L56.94 352.5 L57.06 341.7 L57.19 348.7 L57.31 343.8 L57.44 350.7 L57.56 349.3 L57.69 347.6 L57.81 351.6 L57.94 346.1 L58.06 345.6 L58.19 344.1 L58.31 345.2 L58.44 347.5 L58.56 349.2 L58.69 351.0 L58.81 346.4 L58.94 345.0 L59.06 346.2 L59.19 345.9 L59.31 345.8 L59.44 346.0 L59.56 344.6 L59.69 347.0 L59.81 345.7 L59.94 346.7 L60.06 343.1 L60.19 347.6 L60.31 348.9 L60.44 349.1 L60.56 345.6 L60.69 343.8 L60.81 343.3 L60.94 343.7 L61.06 345.3 L61.19 346.3 L61.31 341.9 L61.44 349.2 L61.56 342.6 L61.69 345.2 L61.81 345.1 L61.94 349.7 L62.06 352.7 L62.19 346.1 L62.31 346.4 L62.44 346.0 L62.56 346.6 L62.69 346.7 L62.81 354.5 L62.94 344.0 L63.06 346.9 L63.19 344.9 L63.31 348.3 L63.44 345.7 L63.56 348.9 L63.69 344.0 L63.81 353.5 L63.94 347.8 L64.06 341.9 L64.19 349.3 L64.31 345.8 L64.44 343.8 L64.56 348.5 L64.69 345.7 L64.81 349.4 L64.94 345.6 L65.06 349.9 L65.19 347.6 L65.31 348.3 L65.44 347.7 L65.56 346.1 L65.69 346.1 L65.81 348.5 L65.94 349.3 L66.06 346.0 L66.19 353.8 L66.31 352.2 L66.44 343.8 L66.56 350.4 L66.69 347.0 L66.81 347.9 L66.94 344.9 L67.06 352.1 L67.19 344.8 L67.31 347.0 L67.44 345.1 L67.56 352.9 L67.69 350.9 L67.81 343.3 L67.94 345.9 L68.06 348.3 L68.19 345.9 L68.31 346.2 L68.44 344.0 L68.56 347.9 L68.69 344.0 L68.81 349.7 L68.94 354.3 L69.06 346.2 L69.19 352.1 L69.31 348.3 L69.44 345.2 L69.56 346.2 L69.69 344.4 L69.81 347.5 L69.94 349.3 L70.06 350.0 L70.19 346.4 L70.31 343.7 L70.44 347.0 L70.56 352.2 L70.69 348.0 L70.81 347.0 L70.94 341.1 L71.06 345.9 L71.19 348.8 L71.31 344.4 L71.44 351.2 L71.56 345.5 L71.69 344.6 L71.81 345.5 L71.94 346.9 L72.06 350.2 L72.19 345.5 L72.31 341.9 L72.44 347.0 L72.56 348.7 L72.69 351.7 L72.81 343.9 L72.94 351.6 L73.06 349.2 L73.19 348.5 L73.31 344.9 L73.44 344.6 L73.56 344.4 L73.69 350.0 L73.81 347.8 L73.94 350.4 L74.06 352.6 L74.19 347.3 L74.31 347.1 L74.44 352.9 L74.56 343.3 L74.69 345.9 L74.81 346.1 L74.94 346.1 L75.06 347.6 L75.19 344.7 L75.31 350.6 L75.44 343.2 L75.56 344.8 L75.69 342.2 L75.81 343.1 L75.94 348.9 L76.06 349.1 L76.19 346.6 L76.31 349.7 L76.44 349.0 L76.56 345.5 L76.69 347.1 L76.81 348.3 L76.94 353.1 L77.06 345.9 L77.19 348.3 L77.31 348.8 L77.44 350.8 L77.56 348.5 L77.69 350.4 L77.81 344.1 L77.94 346.4 L78.06 341.5 L78.19 347.1 L78.31 354.1 L78.44 347.9 L78.56 347.5 L78.69 348.0 L78.81 347.6 L78.94 343.3 L79.06 345.2 L79.19 346.7 L79.31 347.7 L79.44 344.7 L79.56 346.9 L79.69 345.1 L79.81 343.3 L79.94 345.3 L80.06 344.8 L80.19 349.7 L80.31 351.2 L80.44 348.9 L80.56 346.6 L80.69 345.6 L80.81 342.6 L80.94 345.7 L81.06 351.8 L81.19 350.6 L81.31 347.9 L81.44 346.5 L81.56 347.2 L81.69 348.5 L81.81 347.2 L81.94 348.5 L82.06 344.9 L82.19 347.4 L82.31 346.2 L82.44 350.4 L82.56 343.5 L82.69 351.0 L82.81 346.9 L82.94 345.7 L83.06 347.3 L83.19 347.6 L83.31 346.5 L83.44 348.5 L83.56 345.5 L83.69 342.3 L83.81 349.3 L83.94 347.1 L84.06 352.1 L84.19 348.4 L84.31 341.3 L84.44 350.9 L84.56 345.2 L84.69 348.8 L84.81 353.7 L84.94 350.4 L85.06 344.0 L85.19 347.0 L85.31 342.5 L85.44 349.2 L85.56 348.9 L85.69 344.2 L85.81 348.5 L85.94 350.0 L86.06 349.6 L86.19 345.3 L86.31 345.2 L86.44 343.9 L86.56 343.4 L86.69 348.1 L86.81 347.3 L86.94 351.0 L87.06 348.0 L87.19 346.3 L87.31 343.0 L87.44 351.7 L87.56 347.7 L87.69 347.1 L87.81 344.2 L87.94 344.2 L88.06 349.1 L88.19 344.4 L88.31 348.9 L88.44 349.1 L88.56 346.1 L88.69 342.5 L88.81 348.4 L88.94 351.3 L89.06 344.8 L89.19 343.5 L89.31 350.4 L89.44 347.6 L89.56 345.4 L89.69 350.8 L89.81 346.4 L89.94 348.5 L90.06 346.0 L90.19 345.0 L90.31 347.8 L90.44 344.7 L90.56 342.0 L90.69 345.7 L90.81 350.8 L90.94 350.4 L91.06 353.6 L91.19 350.1 L91.31 352.0 L91.44 348.0 L91.56 345.9 L91.69 348.6 L91.81 344.4 L91.94 349.4 L92.06 345.9 L92.19 348.0 L92.31 344.7 L92.44 346.8 L92.56 350.1 L92.69 346.6 L92.81 345.2 L92.94 348.1 L93.06 349.8 L93.19 346.7 L93.31 343.8 L93.44 342.7 L93.56 343.3 L93.69 350.3 L93.81 346.9 L93.94 348.6 L94.06 350.4 L94.19 348.1 L94.31 348.6 L94.44 345.8 L94.56 342.5 L94.69 349.1 L94.81 346.9 L94.94 348.9 L95.06 344.1 L95.19 346.8 L95.31 353.1 L95.44 344.8 L95.56 347.5 L95.69 351.0 L95.81 346.5 L95.94 347.6 L96.06 340.9 L96.19 349.5 L96.31 345.9 L96.44 351.0 L96.56 346.9 L96.69 346.2 L96.81 348.5 L96.94 346.5 L97.06 345.7 L97.19 351.7 L97.31 350.1 L97.44 347.6 L97.56 349.6 L97.69 349.6 L97.81 348.9 L97.94 347.4 L98.06 347.4 L98.19 348.4 L98.31 348.9 L98.44 348.3 L98.56 345.6 L98.69 347.0 L98.81 348.5 L98.94 344.4 L99.06 347.2 L99.19 349.4 L99.31 347.7 L99.44 346.4 L99.56 347.1 L99.69 345.8 L99.81 350.1 L99.94 346.2 L100.06 342.3 L100.19 343.8 L100.31 348.1 L100.44 347.8 L100.56 345.8 L100.69 343.5 L100.81 346.8 L100.94 344.8 L101.06 345.3 L101.19 347.2 L101.31 344.9 L101.44 348.1 L101.56 345.0 L101.69 345.9 L101.81 346.5 L101.94 351.5 L102.06 351.8 L102.19 350.0 L102.31 345.0 L102.44 347.3 L102.56 349.9 L102.69 349.6 L102.81 342.4 L102.94 347.1 L103.06 345.0 L103.19 349.4 L103.31 349.1 L103.44 345.7 L103.56 353.5 L103.69 346.4 L103.81 354.4 L103.94 346.8 L104.06 347.0 L104.19 352.7 L104.31 345.7 L104.44 345.9 L104.56 351.5 L104.69 347.1 L104.81 348.6 L104.94 343.6 L105.06 352.5 L105.19 350.1 L105.31 348.2 L105.44 349.3 L105.56 345.7 L105.69 345.9 L105.81 342.6 L105.94 348.3 L106.06 350.8 L106.19 349.7 L106.31 349.9 L106.44 349.3 L106.56 344.5 L106.69 343.5 L106.81 349.1 L106.94 347.7 L107.06 350.1 L107.19 346.5 L107.31 344.6 L107.44 348.5 L107.56 345.6 L107.69 342.6 L107.81 345.4 L107.94 344.7 L108.06 343.9 L108.19 345.7 L108.31 350.0 L108.44 354.0 L108.56 352.3 L108.69 346.1 L108.81 350.6 L108.94 347.0 L109.06 348.4 L109.19 345.3 L109.31 347.0 L109.44 342.5 L109.56 352.5 L109.69 345.1 L109.81 348.9 L109.94 345.6 L110.06 348.0 L110.19 343.9 L110.31 346.1 L110.44 349.9 L110.56 348.9 L110.69 341.7 L110.81 349.7 L110.94 343.5 L111.06 348.0 L111.19 348.7 L111.31 345.3 L111.44 346.3 L111.56 346.5 L111.69 348.4 L111.81 349.9 L111.94 351.1 L112.06 348.2 L112.19 352.9 L112.31 344.4 L112.44 352.3 L112.56 346.4 L112.69 349.4 L112.81 346.8 L112.94 347.5 L113.06 344.5 L113.19 348.4 L113.31 353.1 L113.44 347.7 L113.56 347.1 L113.69 347.3 L113.81 349.3 L113.94 346.7 L114.06 347.2 L114.19 347.9 L114.31 351.0 L114.44 350.0 L114.56 344.1 L114.69 345.4 L114.81 347.3 L114.94 349.7 L115.06 350.0 L115.19 346.7 L115.31 353.4 L115.44 346.8 L115.56 351.3 L115.69 351.3 L115.81 351.9 L115.94 347.8 L116.06 348.9 L116.19 342.9 L116.31 342.0 L116.44 345.5 L116.56 349.3 L116.69 350.3 L116.81 346.9 L116.94 350.2 L117.06 348.9 L117.19 351.6 L117.31 342.5 L117.44 344.9 L117.56 344.4 L117.69 344.3 L117.81 352.0 L117.94 344.6 L118.06 344.8 L118.19 346.1 L118.31 349.8 L118.44 345.9 L118.56 349.4 L118.69 348.8 L118.81 345.3 L118.94 340.5 L119.06 344.5 L119.19 343.7 L119.31 352.0 L119.44 345.2 L119.56 344.1 L119.69 348.3 L119.81 347.4 L119.94 344.6 L120.06 350.4 L120.19 349.9 L120.31 348.0 L120.44 345.1 L120.56 344.6 L120.69 341.4 L120.81 348.3 L120.94 348.4 L121.06 344.5 L121.19 347.3 L121.31 355.2 L121.44 344.0 L121.56 342.2 L121.69 349.0 L121.81 345.9 L121.94 345.8 L122.06 349.0 L122.19 346.9 L122.31 350.1 L122.44 348.7 L122.56 350.6 L122.69 347.6 L122.81 340.9 L122.94 351.1 L123.06 342.2 L123.19 350.2 L123.31 347.9 L123.44 343.3 L123.56 347.4 L123.69 349.8 L123.81 344.2 L123.94 347.4 L124.06 345.0 L124.19 344.4 L124.31 345.4 L124.44 350.9 L124.56 349.2 L124.69 347.2 L124.81 347.0 L124.94 347.6 L125.06 348.0 L125.19 347.8 L125.31 342.1 L125.44 349.9 L125.56 344.7 L125.69 339.8 L125.81 349.3 L125.94 343.8 L126.06 346.8 L126.19 347.0 L126.31 345.5 L126.44 348.8 L126.56 346.4 L126.69 346.4 L126.81 344.4 L126.94 346.4 L127.06 344.1 L127.19 347.4 L127.31 351.1 L127.44 350.1 L127.56 348.5 L127.69 343.3 L127.81 350.2 L127.94 349.9 L128.06 353.3 L128.19 340.8 L128.31 347.2 L128.44 346.3 L128.56 350.4 L128.69 344.1 L128.81 346.1 L128.94 353.9 L129.06 350.1 L129.19 341.5 L129.31 347.3 L129.44 351.1 L129.56 345.4 L129.69 348.9 L129.81 347.5 L129.94 343.1 L130.06 345.4 L130.19 350.5 L130.31 350.7 L130.44 345.5 L130.56 350.5 L130.69 345.2 L130.81 347.9 L130.94 347.2 L131.06 343.5 L131.19 348.1 L131.31 346.1 L131.44 339.4 L131.56 344.8 L131.69 344.8 L131.81 344.7 L131.94 344.4 L132.06 345.2 L132.19 340.2 L132.31 349.8 L132.44 347.4 L132.56 348.0 L132.69 346.5 L132.81 347.4 L132.94 346.5 L133.06 344.0 L133.19 342.9 L133.31 347.4 L133.44 350.1 L133.56 347.9 L133.69 351.8 L133.81 343.2 L133.94 346.5 L134.06 345.4 L134.19 350.7 L134.31 352.2 L134.44 345.7 L134.56 349.4 L134.69 346.5 L134.81 344.3 L134.94 346.9 L135.06 344.1 L135.19 351.7 L135.31 348.9 L135.44 350.6 L135.56 348.3 L135.69 340.3 L135.81 349.6 L135.94 347.5 L136.06 340.2 L136.19 347.5 L136.31 350.2 L136.44 352.1 L136.56 344.2 L136.69 349.5 L136.81 348.2 L136.94 346.7 L137.06 346.4 L137.19 348.7 L137.31 348.9 L137.44 349.1 L137.56 346.0 L137.69 343.4 L137.81 351.1 L137.94 350.9 L138.06 345.5 L138.19 347.1 L138.31 349.6 L138.44 342.2 L138.56 348.7 L138.69 354.2 L138.81 348.0 L138.94 345.2" fill="none" stroke="#0ee8ee" stroke-width="0.6"/>
<path d="M139.06 249.9 L139.19 243.9 L139.31 244.5 L139.44 242.7 L139.56 244.4 L139.69 238.8 L139.81 240.1 L139.94 239.7 L140.06 246.6 L140.19 243.6 L140.31 247.3 L140.44 238.1 L140.56 242.1 L140.69 248.1 L140.81 241.6 L140.94 238.6 L141.06 241.7 L141.19 242.9 L141.31 243.9 L141.44 247.7 L141.56 247.8 L141.69 248.4 L141.81 245.6 L141.94 242.5 L142.06 242.4 L142.19 239.7 L142.31 247.7 L142.44 247.5 L142.56 244.2 L142.69 241.3 L142.81 245.9 L142.94 245.3 L143.06 244.4 L143.19 240.6 L143.31 244.6 L143.44 242.3 L143.56 246.1 L143.69 245.6 L143.81 245.2 L143.94 242.7 L144.06 248.4 L144.19 246.1 L144.31 247.6 L144.44 246.3 L144.56 245.9 L144.69 245.0 L144.81 240.7 L144.94 238.7 L145.06 241.1 L145.19 245.7 L145.31 246.6 L145.44 244.4 L145.56 244.2 L145.69 249.2 L145.81 242.7 L145.94 238.8 L146.06 239.3 L146.19 243.0 L146.31 246.0 L146.44 246.0 L146.56 243.2 L146.69 246.3 L146.81 243.8 L146.94 241.8 L147.06 242.8 L147.19 246.1 L147.31 246.7 L147.44 240.7 L147.56 241.0 L147.69 244.3 L147.81 250.2 L147.94 240.5 L148.06 240.2 L148.19 245.1 L148.31 245.4 L148.44 242.1 L148.56 243.8 L148.69 245.3 L148.81 238.8 L148.94 243.8 L149.06 245.7 L149.19 246.6 L149.31 247.3 L149.44 243.7 L149.56 239.7 L149.69 247.8 L149.81 246.2 L149.94 242.1 L150.06 246.9 L150.19 246.9 L150.31 243.5 L150.44 237.1 L150.56 242.5 L150.69 241.7 L150.81 241.4 L150.94 243.7 L151.06 240.7 L151.19 245.0 L151.31 249.5 L151.44 240.5 L151.56 247.0 L151.69 242.4 L151.81 245.5 L151.94 243.5 L152.06 247.7 L152.19 241.9 L152.31 246.1 L152.44 241.7 L152.56 244.6 L152.69 243.9 L152.81 247.1 L152.94 239.4 L153.06 239.9 L153.19 247.9 L153.31 245.0 L153.44 248.8 L153.56 240.9 L153.69 244.5 L153.81 245.7 L153.94 249.0 L154.06 243.7 L154.19 242.6 L154.31 246.0 L154.44 243.6 L154.56 241.7 L154.69 246.1 L154.81 238.3 L154.94 241.0 L155.06 247.9 L155.19 242.5 L155.31 243.0 L155.44 245.0 L155.56 247.2 L155.69 245.4 L155.81 241.1 L155.94 242.3 L156.06 247.0 L156.19 243.6 L156.31 242.0 L156.44 246.4 L156.56 247.3 L156.69 250.2 L156.81 240.7 L156.94 241.9 L157.06 241.9 L157.19 244.9 L157.31 242.5 L157.44 247.1 L157.56 236.0 L157.69 246.7 L157.81 242.0 L157.94 243.1 L158.06 245.6 L158.19 244.5 L158.31 240.9 L158.44 248.2 L158.56 245.6 L158.69 242.5 L158.81 244.5 L158.94 240.7 L159.06 240.3 L159.19 243.0 L159.31 245.0 L159.44 244.2 L159.56 241.6 L159.69 239.9 L159.81 239.0 L159.94 248.5 L160.06 245.0 L160.19 241.6 L160.31 247.4 L160.44 245.5 L160.56 242.7 L160.69 242.1 L160.81 247.2 L160.94 244.8 L161.06 248.7 L161.19 244.9 L161.31 242.2 L161.44 242.2 L161.56 241.8 L161.69 244.6 L161.81 244.6 L161.94 245.6 L162.06 245.2 L162.19 240.9 L162.31 243.3 L162.44 241.2 L162.56 245.3 L162.69 240.1 L162.81 242.2 L162.94 241.4 L163.06 242.1 L163.19 243.2 L163.31 248.3 L163.44 243.2 L163.56 239.7 L163.69 243.0 L163.81 246.1 L163.94 245.5 L164.06 244.6 L164.19 249.6 L164.31 247.1 L164.44 244.2 L164.56 247.5 L164.69 240.0 L164.81 243.4 L164.94 241.4 L165.06 244.4 L165.19 248.6 L165.31 242.5 L165.44 248.5 L165.56 240.9 L165.69 248.0 L165.81 239.0 L165.94 241.5 L166.06 246.8 L166.19 243.6 L166.31 244.3 L166.44 243.9 L166.56 244.4 L166.69 243.4 L166.81 241.0 L166.94 243.1 L167.06 244.2 L167.19 241.3 L167.31 245.3 L167.44 249.0 L167.56 239.1 L167.69 242.3 L167.81 243.1 L167.94 244.0 L168.06 244.2 L168.19 241.8 L168.31 243.8 L168.44 243.9 L168.56 243.6 L168.69 248.3 L168.81 244.3 L168.94 239.6 L169.06 239.3 L169.19 245.6 L169.31 242.9 L169.44 242.1 L169.56 239.9 L169.69 243.0 L169.81 243.6 L169.94 241.9 L170.06 242.9 L170.19 246.5 L170.31 246.2 L170.44 245.5 L170.56 243.4 L170.69 240.0 L170.81 246.2 L170.94 248.2 L171.06 247.6 L171.19 247.3 L171.31 244.7 L171.44 245.0 L171.56 243.9 L171.69 247.5 L171.81 243.1 L171.94 250.1 L172.06 246.2 L172.19 243.0 L172.31 243.9 L172.44 239.3 L172.56 241.8 L172.69 243.0 L172.81 251.0 L172.94 241.6 L173.06 246.6 L173.19 244.1 L173.31 243.0 L173.44 245.7 L173.56 238.1 L173.69 246.6 L173.81 249.5 L173.94 244.8 L174.06 243.7 L174.19 244.4 L174.31 245.8 L174.44 242.5 L174.56 244.3 L174.69 245.4 L174.81 242.9 L174.94 245.0 L175.06 244.9 L175.19 246.0 L175.31 241.0 L175.44 242.4 L175.56 242.7 L175.69 247.3 L175.81 244.6 L175.94 239.1 L176.06 240.2 L176.19 249.5 L176.31 244.9 L176.44 240.2 L176.56 241.2 L176.69 244.3 L176.81 248.1 L176.94 248.6 L177.06 242.8 L177.19 243.0 L177.31 249.5 L177.44 241.1 L177.56 248.5 L177.69 244.9 L177.81 244.2 L177.94 247.6 L178.06 245.3 L178.19 241.5 L178.31 239.5 L178.44 243.9 L178.56 245.4 L178.69 247.8 L178.81 236.3 L178.94 247.8 L179.06 245.7 L179.19 248.3 L179.31 246.2 L179.44 244.5 L179.56 245.2 L179.69 245.0 L179.81 242.1 L179.94 243.6 L180.06 244.3 L180.19 242.6 L180.31 239.6 L180.44 239.7 L180.56 245.4 L180.69 245.4 L180.81 244.2 L180.94 240.5 L181.06 246.4 L181.19 242.8 L181.31 237.9 L181.44 248.4 L181.56 239.6 L181.69 250.4 L181.81 245.5 L181.94 242.6 L182.06 237.1 L182.19 241.9 L182.31 248.2 L182.44 247.8 L182.56 244.7 L182.69 239.0 L182.81 242.8 L182.94 243.1 L183.06 245.2 L183.19 243.5 L183.31 244.9 L183.44 239.2 L183.56 242.0 L183.69 248.1 L183.81 239.7 L183.94 246.6 L184.06 250.6 L184.19 245.8 L184.31 239.9 L184.44 247.5 L184.56 238.5 L184.69 244.9 L184.81 242.7 L184.94 247.5 L185.06 247.3 L185.19 244.4 L185.31 249.1 L185.44 246.7 L185.56 242.5 L185.69 241.1 L185.81 251.1 L185.94 242.7 L186.06 245.1 L186.19 243.6 L186.31 242.5 L186.44 239.3 L186.56 243.5 L186.69 243.6 L186.81 246.8 L186.94 242.4 L187.06 239.3 L187.19 240.8 L187.31 243.8 L187.44 244.6 L187.56 246.0 L187.69 242.8 L187.81 245.5 L187.94 244.3 L188.06 248.8 L188.19 243.7 L188.31 244.3 L188.44 245.5 L188.56 247.5 L188.69 241.2 L188.81 242.5 L188.94 243.1 L189.06 237.7 L189.19 247.7 L189.31 247.0 L189.44 244.0 L189.56 251.9 L189.69 247.6 L189.81 249.8 L189.94 248.4 L190.06 246.5 L190.19 239.8 L190.31 248.4 L190.44 245.1 L190.56 240.4 L190.69 244.1 L190.81 246.1 L190.94 246.7 L191.06 244.4 L191.19 242.4 L191.31 246.1 L191.44 241.7 L191.56 243.7 L191.69 246.1 L191.81 239.7 L191.94 245.0 L192.06 238.2 L192.19 241.2 L192.31 240.3 L192.44 243.6 L192.56 246.0 L192.69 243.8 L192.81 246.6 L192.94 244.2 L193.06 243.3 L193.19 245.3 L193.31 243.2 L193.44 244.3 L193.56 246.9 L193.69 242.3 L193.81 247.3 L193.94 240.7 L194.06 243.3 L194.19 238.9 L194.31 242.4 L194.44 248.5 L194.56 244.9 L194.69 247.6 L194.81 239.6 L194.94 241.0 L195.06 245.3 L195.19 246.3 L195.31 246.3 L195.44 239.1 L195.56 245.4 L195.69 243.7 L195.81 244.3 L195.94 245.3 L196.06 243.1 L196.19 239.0 L196.31 240.8 L196.44 239.7 L196.56 240.1 L196.69 243.5 L196.81 247.7 L196.94 241.8 L197.06 241.7 L197.19 240.6 L197.31 238.9 L197.44 244.1 L197.56 242.5 L197.69 243.2 L197.81 241.1 L197.94 245.3 L198.06 240.4 L198.19 245.5 L198.31 242.0 L198.44 246.2 L198.56 241.3 L198.69 245.2 L198.81 245.2 L198.94 243.7 L199.06 248.7 L199.19 244.4 L199.31 241.3 L199.44 245.9 L199.56 241.5 L199.69 242.3 L199.81 243.9 L199.94 244.4 L200.06 248.9 L200.19 238.8 L200.31 243.1 L200.44 247.2 L200.56 243.4 L200.69 244.8 L200.81 248.4 L200.94 240.3 L201.06 244.0 L201.19 246.2 L201.31 242.2 L201.44 238.8 L201.56 241.0 L201.69 244.5 L201.81 244.5 L201.94 249.2 L202.06 247.8 L202.19 239.4 L202.31 246.9 L202.44 246.6 L202.56 248.6 L202.69 243.5 L202.81 242.3 L202.94 244.3 L203.06 248.4 L203.19 245.7 L203.31 248.9 L203.44 246.2 L203.56 242.2 L203.69 241.0 L203.81 249.3 L203.94 239.5 L204.06 242.9 L204.19 243.0 L204.31 241.2 L204.44 242.2 L204.56 243.9 L204.69 250.8 L204.81 243.7 L204.94 242.4 L205.06 244.3 L205.19 246.6 L205.31 241.5 L205.44 242.7 L205.56 238.8 L205.69 245.9 L205.81 245.9 L205.94 248.3 L206.06 240.4 L206.19 250.2 L206.31 246.5 L206.44 243.1 L206.56 242.8 L206.69 243.0 L206.81 240.4 L206.94 246.1 L207.06 242.1 L207.19 241.8 L207.31 245.4 L207.44 244.2 L207.56 242.2 L207.69 243.2 L207.81 242.5 L207.94 247.8 L208.06 246.8 L208.19 241.8 L208.31 243.8 L208.44 247.9 L208.56 243.1 L208.69 249.1 L208.81 245.2 L208.94 245.8 L209.06 237.8 L209.19 246.4 L209.31 244.9 L209.44 245.6 L209.56 245.3 L209.69 245.4 L209.81 242.4 L209.94 246.5 L210.06 244.1 L210.19 240.9 L210.31 240.9 L210.44 244.4 L210.56 244.9 L210.69 237.5 L210.81 237.9 L210.94 247.0 L211.06 243.9 L211.19 251.9 L211.31 239.4 L211.44 243.2 L211.56 242.1 L211.69 245.5 L211.81 248.0 L211.94 248.6 L212.06 240.9 L212.19 247.5 L212.31 240.3 L212.44 244.8 L212.56 244.4 L212.69 245.7 L212.81 241.6 L212.94 247.8 L213.06 243.7 L213.19 243.8 L213.31 243.1 L213.44 240.8 L213.56 246.0 L213.69 244.9 L213.81 245.2 L213.94 249.3 L214.06 241.4 L214.19 243.1 L214.31 243.9 L214.44 246.4 L214.56 243.4 L214.69 246.6 L214.81 245.2 L214.94 238.8 L215.06 241.9 L215.19 238.0 L215.31 243.1 L215.44 242.7 L215.56 245.6 L215.69 244.4 L215.81 243.7 L215.94 247.6 L216.06 245.6 L216.19 240.3 L216.31 241.9 L216.44 244.9 L216.56 248.9 L216.69 243.3 L216.81 243.4 L216.94 244.7 L217.06 246.2 L217.19 243.6 L217.31 244.8 L217.44 242.7 L217.56 242.3 L217.69 241.6 L217.81 245.8 L217.94 242.3 L218.06 245.5 L218.19 245.1 L218.31 246.8 L218.44 236.1 L218.56 241.1 L218.69 240.3 L218.81 243.4 L218.94 246.2 L219.06 251.3 L219.19 248.4 L219.31 247.9 L219.44 245.0 L219.56 242.8 L219.69 245.5 L219.81 237.5 L219.94 246.6 L220.06 243.9 L220.19 245.7 L220.31 240.9 L220.44 240.7 L220.56 242.0 L220.69 243.8 L220.81 244.9 L220.94 242.9 L221.06 244.9 L221.19 245.9 L221.31 240.5 L221.44 243.6 L221.56 239.3 L221.69 242.3 L221.81 246.6 L221.94 241.8 L222.06 249.4 L222.19 245.4 L222.31 246.5 L222.44 244.2 L222.56 246.4 L222.69 247.1 L222.81 244.2 L222.94 242.4 L223.06 242.3 L223.19 249.5 L223.31 243.4 L223.44 242.6 L223.56 241.8 L223.69 239.0 L223.81 242.4 L223.94 244.8 L224.06 242.5 L224.19 241.7 L224.31 245.1 L224.44 245.2 L224.56 242.6 L224.69 244.8 L224.81 241.0 L224.94 246.4 L225.06 241.0 L225.19 242.9 L225.31 244.3 L225.44 242.7 L225.56 240.5 L225.69 250.0 L225.81 248.3 L225.94 238.8 L226.06 244.3 L226.19 240.2 L226.31 244.8 L226.44 240.1 L226.56 245.6 L226.69 245.5 L226.81 248.9 L226.94 247.4 L227.06 242.6 L227.19 246.7 L227.31 242.6 L227.44 243.6 L227.56 242.4 L227.69 238.8 L227.81 245.7 L227.94 238.0 L228.06 243.2 L228.19 245.4 L228.31 244.2 L228.44 239.3 L228.56 242.0 L228.69 245.9 L228.81 247.1 L228.94 248.6 L229.06 238.6 L229.19 245.2 L229.31 242.5 L229.44 246.1 L229.56 239.0 L229.69 243.5 L229.81 246.0 L229.94 242.0 L230.06 242.8 L230.19 241.0 L230.31 247.2 L230.44 240.0 L230.56 241.2 L230.69 242.9 L230.81 243.0 L230.94 250.1 L231.06 244.7 L231.19 241.5 L231.31 245.6 L231.44 244.9 L231.56 244.7 L231.69 243.7 L231.81 245.3 L231.94 240.5 L232.06 240.4 L232.19 242.7 L232.31 240.7 L232.44 245.9 L232.56 249.6 L232.69 247.5 L232.81 245.2 L232.94 244.9 L233.06 241.9 L233.19 240.1 L233.31 245.5 L233.44 239.6 L233.56 244.8 L233.69 243.5 L233.81 246.1 L233.94 244.0 L234.06 244.2 L234.19 242.2 L234.31 238.9 L234.44 242.9 L234.56 245.9 L234.69 247.0 L234.81 247.9 L234.94 241.0 L235.06 241.2 L235.19 245.9 L235.31 242.6 L235.44 251.4 L235.56 244.8 L235.69 239.5 L235.81 242.3 L235.94 248.5 L236.06 238.6 L236.19 244.3 L236.31 239.8 L236.44 248.6 L236.56 242.6 L236.69 240.9 L236.81 238.9 L236.94 241.8 L237.06 236.4 L237.19 242.5 L237.31 250.3 L237.44 244.2 L237.56 243.1 L237.69 240.5 L237.81 244.9 L237.94 242.5 L238.06 241.4 L238.19 247.9 L238.31 245.2 L238.44 241.3 L238.56 248.2 L238.69 243.7 L238.81 245.4 L238.94 244.3 L239.06 247.4 L239.19 245.7 L239.31 242.9 L239.44 246.0 L239.56 242.8 L239.69 244.3 L239.81 248.7 L239.94 240.8 L240.06 240.9 L240.19 242.7 L240.31 242.4 L240.44 247.7 L240.56 239.2 L240.69 250.6 L240.81 248.5 L240.94 242.6 L241.06 244.4 L241.19 242.8 L241.31 245.9 L241.44 245.8 L241.56 246.1 L241.69 246.1 L241.81 249.6 L241.94 243.4 L242.06 246.0 L242.19 243.4 L242.31 244.0 L242.44 244.5 L242.56 243.7 L242.69 244.9 L242.81 241.4 L242.94 243.5 L243.06 242.1 L243.19 240.5 L243.31 241.8 L243.44 242.4 L243.56 243.5 L243.69 239.3 L243.81 243.1 L243.94 240.6 L244.06 241.5 L244.19 244.5 L244.31 247.2 L244.44 244.7 L244.56 242.5 L244.69 242.6 L244.81 247.8 L244.94 239.1 L245.06 247.2 L245.19 239.5 L245.31 242.0 L245.44 244.0 L245.56 243.3 L245.69 248.8 L245.81 245.4 L245.94 243.8 L246.06 246.7 L246.19 244.0 L246.31 241.5 L246.44 247.2 L246.56 248.3 L246.69 247.6 L246.81 240.5 L246.94 249.5 L247.06 242.7 L247.19 246.1 L247.31 247.4 L247.44 250.9 L247.56 239.2 L247.69 240.9 L247.81 247.4 L247.94 245.3 L248.06 243.0 L248.19 235.9 L248.31 245.2 L248.44 243.4 L248.56 236.2 L248.69 251.7 L248.81 236.6 L248.94 242.3 L249.06 243.9 L249.19 244.6 L249.31 246.1 L249.44 243.1 L249.56 241.3 L249.69 242.8 L249.81 237.7 L249.94 240.6 L250.06 249.7 L250.19 241.9 L250.31 243.7 L250.44 249.5 L250.56 247.0 L250.69 244.3 L250.81 246.1 L250.94 243.1 L251.06 241.2 L251.19 246.8 L251.31 244.3 L251.44 248.6 L251.56 243.1 L251.69 242.8 L251.81 244.9 L251.94 243.3 L252.06 243.0 L252.19 241.3 L252.31 244.6 L252.44 244.8 L252.56 249.3 L252.69 243.8 L252.81 238.7 L252.94 245.3 L253.06 250.6 L253.19 242.6 L253.31 241.5 L253.44 243.4 L253.56 235.9 L253.69 242.9 L253.81 243.3 L253.94 239.5 L254.06 245.6 L254.19 241.3 L254.31 238.5 L254.44 241.8 L254.56 245.8 L254.69 249.5 L254.81 247.6 L254.94 244.5 L255.06 242.4 L255.19 243.1 L255.31 246.7 L255.44 242.4 L255.56 245.1 L255.69 246.7 L255.81 241.2 L255.94 242.2 L256.06 245.2 L256.19 243.9 L256.31 243.5 L256.44 242.3 L256.56 243.7 L256.69 249.3 L256.81 247.9 L256.94 239.2 L257.06 244.0 L257.19 244.2 L257.31 244.0 L257.44 239.8 L257.56 243.5 L257.69 244.3 L257.81 241.9 L257.94 244.8 L258.06 236.7 L258.19 239.5 L258.31 244.2 L258.44 245.0 L258.56 243.4 L258.69 242.6 L258.81 244.4 L258.94 247.1 L259.06 246.5 L259.19 243.7 L259.31 242.5 L259.44 247.0 L259.56 245.5 L259.69 246.5 L259.81 243.1 L259.94 241.4 L260.06 244.5 L260.19 242.1 L260.31 247.3 L260.44 246.4 L260.56 237.5 L260.69 245.9 L260.81 247.8 L260.94 246.9 L261.06 242.5 L261.19 241.4 L261.31 246.8 L261.44 246.9 L261.56 244.1 L261.69 240.5 L261.81 239.4 L261.94 244.7 L262.06 241.5 L262.19 241.9 L262.31 245.2 L262.44 247.0 L262.56 237.8 L262.69 241.9 L262.81 247.7 L262.94 243.8 L263.06 242.9 L263.19 245.8 L263.31 240.5 L263.44 240.3 L263.56 244.0 L263.69 248.5 L263.81 246.9 L263.94 243.9 L264.06 246.9 L264.19 242.7 L264.31 240.4 L264.44 239.0 L264.56 244.7 L264.69 246.5 L264.81 245.0 L264.94 243.8 L265.06 242.7 L265.19 247.1 L265.31 243.8 L265.44 239.7 L265.56 247.9 L265.69 242.0 L265.81 245.1 L265.94 243.9 L266.06 247.0 L266.19 244.6 L266.31 247.5 L266.44 244.5 L266.56 242.5 L266.69 242.4 L266.81 245.8 L266.94 241.5 L267.06 246.6 L267.19 243.2 L267.31 241.2 L267.44 241.3 L267.56 243.5 L267.69 249.1 L267.81 246.2 L267.94 244.0" fill="none" stroke="#0ee8ee" stroke-width="0.6"/>
<path d="M268.06 344.5 L268.19 352.8 L268.31 346.4 L268.44 347.2 L268.56 346.0 L268.69 351.1 L268.81 347.7 L268.94 345.9 L269.06 347.7 L269.19 344.3 L269.31 344.1 L269.44 346.7 L269.56 339.2 L269.69 350.7 L269.81 353.1 L269.94 343.9 L270.06 346.8 L270.19 342.6 L270.31 347.7 L270.44 347.8 L270.56 349.4 L270.69 343.3 L270.81 345.4 L270.94 345.3 L271.06 346.5 L271.19 353.9 L271.31 346.6 L271.44 347.1 L271.56 345.7 L271.69 349.5 L271.81 354.8 L271.94 350.6 L272.06 351.7 L272.19 344.0 L272.31 350.3 L272.44 347.3 L272.56 350.9 L272.69 350.3 L272.81 349.1 L272.94 342.3 L273.06 347.6 L273.19 345.7 L273.31 348.5 L273.44 347.3 L273.56 350.3 L273.69 342.5 L273.81 345.0 L273.94 347.0 L274.06 348.1 L274.19 346.0 L274.31 347.1 L274.44 347.4 L274.56 350.3 L274.69 346.9 L274.81 347.9 L274.94 341.9 L275.06 339.5 L275.19 342.9 L275.31 348.3 L275.44 340.4 L275.56 348.4 L275.69 346.9 L275.81 347.2 L275.94 345.1 L276.06 346.0 L276.19 349.6 L276.31 348.3 L276.44 347.1 L276.56 345.8 L276.69 347.8 L276.81 350.7 L276.94 347.1 L277.06 346.1 L277.19 343.7 L277.31 347.5 L277.44 344.5 L277.56 343.0 L277.69 349.8 L277.81 345.4 L277.94 341.2 L278.06 345.1 L278.19 352.6 L278.31 346.9 L278.44 343.3 L278.56 343.9 L278.69 349.3 L278.81 348.4 L278.94 347.8 L279.06 346.6 L279.19 348.6 L279.31 351.7 L279.44 348.6 L279.56 346.7 L279.69 343.1 L279.81 348.5 L279.94 351.8 L280.06 349.1 L280.19 343.5 L280.31 347.7 L280.44 351.0 L280.56 345.3 L280.69 348.7 L280.81 350.8 L280.94 352.0 L281.06 342.5 L281.19 342.1 L281.31 348.3 L281.44 349.3 L281.56 346.2 L281.69 347.1 L281.81 346.0 L281.94 350.7 L282.06 340.7 L282.19 348.0 L282.31 343.4 L282.44 345.2 L282.56 342.7 L282.69 344.5 L282.81 347.1 L282.94 347.3 L283.06 352.5 L283.19 346.5 L283.31 348.2 L283.44 348.2 L283.56 348.0 L283.69 351.5 L283.81 347.6 L283.94 347.6 L284.06 346.9 L284.19 347.2 L284.31 347.0 L284.44 350.1 L284.56 347.3 L284.69 347.4 L284.81 347.1 L284.94 349.4 L285.06 345.8 L285.19 350.0 L285.31 345.5 L285.44 349.2 L285.56 352.9 L285.69 347.9 L285.81 346.9 L285.94 343.7 L286.06 349.4 L286.19 347.2 L286.31 349.9 L286.44 345.3 L286.56 348.7 L286.69 352.5 L286.81 348.4 L286.94 346.2 L287.06 343.3 L287.19 347.2 L287.31 349.1 L287.44 349.0 L287.56 343.9 L287.69 344.2 L287.81 344.3 L287.94 344.2 L288.06 346.4 L288.19 348.0 L288.31 352.9 L288.44 347.8 L288.56 351.5 L288.69 342.3 L288.81 351.8 L288.94 349.6 L289.06 348.5 L289.19 349.6 L289.31 349.0 L289.44 352.9 L289.56 349.6 L289.69 342.1 L289.81 342.0 L289.94 352.0 L290.06 347.0 L290.19 351.1 L290.31 346.2 L290.44 345.3 L290.56 346.2 L290.69 348.1 L290.81 347.8 L290.94 345.4 L291.06 348.8 L291.19 349.0 L291.31 344.5 L291.44 343.9 L291.56 341.4 L291.69 346.3 L291.81 347.2 L291.94 345.1 L292.06 345.4 L292.19 346.8 L292.31 347.3 L292.44 348.9 L292.56 349.7 L292.69 348.5 L292.81 350.5 L292.94 344.3 L293.06 349.0 L293.19 348.3 L293.31 344.1 L293.44 345.2 L293.56 348.5 L293.69 347.4 L293.81 343.5 L293.94 345.6 L294.06 351.7 L294.19 349.7 L294.31 347.4 L294.44 351.2 L294.56 344.5 L294.69 346.7 L294.81 350.0 L294.94 346.2 L295.06 343.9 L295.19 348.9 L295.31 351.9 L295.44 339.7 L295.56 347.7 L295.69 343.5 L295.81 346.3 L295.94 343.0 L296.06 354.9 L296.19 345.2 L296.31 347.3 L296.44 345.1 L296.56 344.3 L296.69 345.9 L296.81 347.8 L296.94 352.4 L297.06 348.1 L297.19 351.8 L297.31 344.0 L297.44 347.4 L297.56 345.9 L297.69 342.6 L297.81 355.2 L297.94 346.5 L298.06 347.9 L298.19 345.0 L298.31 345.5 L298.44 344.1 L298.56 350.2 L298.69 346.0 L298.81 346.8 L298.94 347.7 L299.06 343.6 L299.19 347.9 L299.31 346.7 L299.44 348.5 L299.56 346.1 L299.69 347.3 L299.81 348.7 L299.94 350.1 L300.06 345.2 L300.19 350.1 L300.31 344.3 L300.44 346.6 L300.56 347.6 L300.69 347.6 L300.81 339.8 L300.94 344.3 L301.06 346.7 L301.19 349.9 L301.31 345.1 L301.44 351.7 L301.56 341.9 L301.69 347.4 L301.81 348.8 L301.94 347.3 L302.06 348.0 L302.19 350.0 L302.31 344.8 L302.44 348.9 L302.56 350.4 L302.69 346.5 L302.81 340.3 L302.94 343.7 L303.06 344.7 L303.19 344.1 L303.31 348.5 L303.44 344.8 L303.56 354.6 L303.69 348.9 L303.81 343.3 L303.94 346.4 L304.06 351.7 L304.19 349.2 L304.31 344.2 L304.44 350.3 L304.56 345.8 L304.69 353.8 L304.81 345.6 L304.94 349.0 L305.06 348.9 L305.19 345.9 L305.31 346.7 L305.44 350.6 L305.56 348.7 L305.69 347.0 L305.81 348.5 L305.94 352.4 L306.06 350.0 L306.19 348.6 L306.31 348.2 L306.44 342.6 L306.56 347.6 L306.69 345.8 L306.81 349.4 L306.94 345.4 L307.06 348.5 L307.19 344.1 L307.31 349.9 L307.44 345.0 L307.56 347.1 L307.69 348.9 L307.81 346.2 L307.94 347.2 L308.06 350.3 L308.19 352.4 L308.31 341.8 L308.44 344.5 L308.56 349.2 L308.69 350.0 L308.81 345.8 L308.94 347.5 L309.06 346.6 L309.19 353.9 L309.31 346.6 L309.44 343.7 L309.56 342.6 L309.69 343.4 L309.81 351.1 L309.94 346.0 L310.06 353.0 L310.19 349.1 L310.31 348.3 L310.44 349.1 L310.56 349.5 L310.69 349.9 L310.81 344.3 L310.94 345.5 L311.06 345.6 L311.19 347.5 L311.31 346.5 L311.44 343.5 L311.56 345.1 L311.69 352.5 L311.81 353.5 L311.94 344.7 L312.06 348.3 L312.19 347.1 L312.31 344.7 L312.44 349.3 L312.56 347.0 L312.69 352.1 L312.81 348.6 L312.94 346.3 L313.06 339.4 L313.19 346.9 L313.31 349.7 L313.44 345.1 L313.56 349.8 L313.69 349.2 L313.81 342.0 L313.94 346.6 L314.06 348.2 L314.19 349.4 L314.31 347.7 L314.44 347.2 L314.56 346.2 L314.69 346.3 L314.81 347.2 L314.94 344.1 L315.06 349.1 L315.19 346.2 L315.31 348.7 L315.44 345.7 L315.56 348.4 L315.69 347.6 L315.81 349.8 L315.94 348.6 L316.06 350.0 L316.19 346.7 L316.31 347.0 L316.44 346.4 L316.56 343.5 L316.69 346.8 L316.81 350.4 L316.94 349.5 L317.06 344.7 L317.19 348.1 L317.31 349.4 L317.44 343.2 L317.56 348.2 L317.69 348.2 L317.81 349.4 L317.94 348.0 L318.06 342.0 L318.19 341.2 L318.31 353.1 L318.44 346.0 L318.56 351.0 L318.69 350.9 L318.81 347.5 L318.94 343.8 L319.06 351.3 L319.19 347.1 L319.31 348.7 L319.44 348.6 L319.56 350.0 L319.69 350.2 L319.81 343.0 L319.94 343.0 L320.06 347.6 L320.19 347.2 L320.31 349.5 L320.44 346.8 L320.56 346.7 L320.69 353.2 L320.81 351.3 L320.94 350.6 L321.06 350.3 L321.19 344.9 L321.31 346.9 L321.44 347.0 L321.56 344.0 L321.69 344.6 L321.81 347.7 L321.94 343.6 L322.06 348.8 L322.19 348.6 L322.31 346.5 L322.44 346.2 L322.56 349.0 L322.69 348.6 L322.81 348.3 L322.94 343.6 L323.06 342.4 L323.19 353.3 L323.31 345.3 L323.44 346.1 L323.56 341.8 L323.69 344.8 L323.81 345.0 L323.94 349.6 L324.06 339.4 L324.19 343.1 L324.31 346.0 L324.44 345.7 L324.56 344.9 L324.69 345.9 L324.81 342.5 L324.94 348.0 L325.06 350.7 L325.19 347.7 L325.31 345.6 L325.44 350.9 L325.56 348.6 L325.69 344.2 L325.81 345.5 L325.94 345.4 L326.06 347.1 L326.19 350.8 L326.31 345.1 L326.44 346.8 L326.56 347.5 L326.69 343.7 L326.81 345.8 L326.94 349.0 L327.06 350.6 L327.19 341.7 L327.31 349.3 L327.44 346.3 L327.56 351.0 L327.69 349.0 L327.81 353.0 L327.94 348.1 L328.06 346.0 L328.19 344.7 L328.31 343.0 L328.44 348.8 L328.56 348.7 L328.69 349.6 L328.81 348.2 L328.94 342.8 L329.06 346.0 L329.19 346.5 L329.31 347.7 L329.44 349.5 L329.56 351.4 L329.69 348.0 L329.81 341.1 L329.94 344.2 L330.06 340.9 L330.19 344.9 L330.31 343.6 L330.44 347.9 L330.56 346.5 L330.69 350.5 L330.81 350.4 L330.94 345.9 L331.06 350.0 L331.19 347.2 L331.31 348.6 L331.44 351.2 L331.56 343.8 L331.69 347.0 L331.81 351.8 L331.94 345.0 L332.06 347.8 L332.19 347.6 L332.31 346.0 L332.44 343.3 L332.56 345.2 L332.69 344.3 L332.81 350.4 L332.94 347.9 L333.06 349.3 L333.19 343.7 L333.31 348.7 L333.44 347.6 L333.56 350.3 L333.69 345.1 L333.81 349.6 L333.94 351.2 L334.06 352.5 L334.19 344.5 L334.31 343.9 L334.44 342.9 L334.56 350.1 L334.69 349.0 L334.81 348.2 L334.94 344.7 L335.06 350.9 L335.19 351.9 L335.31 347.1 L335.44 346.8 L335.56 350.7 L335.69 348.7 L335.81 351.2 L335.94 346.0 L336.06 348.2 L336.19 346.2 L336.31 345.5 L336.44 346.3 L336.56 346.4 L336.69 348.7 L336.81 346.3 L336.94 347.4 L337.06 344.8 L337.19 343.6 L337.31 351.4 L337.44 344.3 L337.56 352.6 L337.69 350.0 L337.81 340.4 L337.94 345.3 L338.06 346.0 L338.19 347.3 L338.31 346.7 L338.44 345.4 L338.56 350.9 L338.69 346.8 L338.81 350.1 L338.94 345.2 L339.06 345.2 L339.19 351.1 L339.31 346.4 L339.44 344.0 L339.56 346.7 L339.69 350.3 L339.81 346.7 L339.94 345.1 L340.06 349.1 L340.19 350.1 L340.31 346.6 L340.44 346.3 L340.56 346.1 L340.69 355.1 L340.81 346.6 L340.94 352.3 L341.06 346.8 L341.19 348.4 L341.31 341.2 L341.44 347.7 L341.56 347.4 L341.69 346.3 L341.81 346.0 L341.94 343.2 L342.06 342.8 L342.19 347.7 L342.31 345.3 L342.44 346.9 L342.56 346.7 L342.69 345.7 L342.81 345.0 L342.94 352.7 L343.06 343.9 L343.19 345.7 L343.31 346.3 L343.44 343.8 L343.56 344.4 L343.69 349.7 L343.81 350.0 L343.94 347.6 L344.06 355.2 L344.19 349.6 L344.31 350.9 L344.44 344.8 L344.56 350.4 L344.69 352.1 L344.81 346.1 L344.94 352.5 L345.06 344.8 L345.19 343.9 L345.31 347.1 L345.44 344.8 L345.56 349.1 L345.69 344.0 L345.81 347.5 L345.94 341.5 L346.06 347.1 L346.19 350.3 L346.31 346.4 L346.44 348.1 L346.56 350.4 L346.69 344.0 L346.81 343.4 L346.94 347.4 L347.06 348.0 L347.19 346.4 L347.31 344.3 L347.44 350.8 L347.56 343.8 L347.69 346.4 L347.81 347.1 L347.94 349.3 L348.06 345.9 L348.19 344.8 L348.31 353.2 L348.44 344.7 L348.56 349.6 L348.69 346.8 L348.81 345.8 L348.94 347.1 L349.06 346.5 L349.19 348.1 L349.31 339.7 L349.44 347.1 L349.56 347.4 L349.69 344.4 L349.81 346.1 L349.94 354.1 L350.06 352.7 L350.19 349.1 L350.31 347.9 L350.44 346.3 L350.56 351.3 L350.69 345.9 L350.81 344.8 L350.94 349.2 L351.06 344.3 L351.19 344.9 L351.31 351.5 L351.44 342.5 L351.56 347.0 L351.69 347.6 L351.81 348.0 L351.94 342.9 L352.06 346.5 L352.19 346.2 L352.31 352.9 L352.44 350.1 L352.56 345.0 L352.69 349.8 L352.81 349.1 L352.94 346.9 L353.06 346.5 L353.19 346.4 L353.31 342.6 L353.44 345.4 L353.56 350.0 L353.69 351.4 L353.81 352.7 L353.94 346.1 L354.06 349.0 L354.19 340.2 L354.31 346.4 L354.44 343.5 L354.56 349.6 L354.69 342.3 L354.81 344.1 L354.94 344.0 L355.06 348.4 L355.19 349.7 L355.31 344.5 L355.44 352.5 L355.56 347.7 L355.69 344.8 L355.81 348.2 L355.94 347.2 L356.06 349.7 L356.19 348.2 L356.31 353.7 L356.44 350.6 L356.56 345.3 L356.69 349.5 L356.81 349.5 L356.94 344.3 L357.06 345.0 L357.19 344.8 L357.31 339.9 L357.44 349.1 L357.56 346.6 L357.69 350.8 L357.81 345.6 L357.94 347.4 L358.06 349.4 L358.19 350.0 L358.31 348.2 L358.44 344.2 L358.56 353.7 L358.69 349.7 L358.81 351.2 L358.94 351.9 L359.06 351.4 L359.19 348.4 L359.31 348.6 L359.44 349.1 L359.56 342.8 L359.69 349.6 L359.81 344.3 L359.94 348.4 L360.06 344.2 L360.19 349.3 L360.31 345.8 L360.44 354.5 L360.56 347.8 L360.69 348.7 L360.81 344.5 L360.94 346.4 L361.06 347.0 L361.19 346.4 L361.31 345.9 L361.44 344.6 L361.56 349.5 L361.69 346.1 L361.81 344.8 L361.94 348.3 L362.06 344.8 L362.19 346.7 L362.31 345.7 L362.44 344.5 L362.56 346.6 L362.69 344.8 L362.81 343.5 L362.94 348.2 L363.06 346.3 L363.19 342.9 L363.31 346.1 L363.44 347.7 L363.56 348.5 L363.69 348.3 L363.81 348.0 L363.94 348.9 L364.06 345.8 L364.19 344.9 L364.31 349.0 L364.44 346.0 L364.56 347.3 L364.69 349.1 L364.81 350.0 L364.94 350.8 L365.06 345.2 L365.19 346.1 L365.31 348.9 L365.44 343.0 L365.56 343.5 L365.69 349.0 L365.81 345.4 L365.94 344.5 L366.06 349.6 L366.19 348.8 L366.31 349.9 L366.44 346.2 L366.56 346.4 L366.69 346.2 L366.81 348.1 L366.94 341.3 L367.06 345.2 L367.19 349.3 L367.31 344.9 L367.44 347.0 L367.56 347.6 L367.69 348.7 L367.81 345.8 L367.94 343.9 L368.06 354.6 L368.19 345.1 L368.31 352.3 L368.44 342.1 L368.56 347.6 L368.69 346.6 L368.81 352.8 L368.94 353.2 L369.06 350.1 L369.19 344.2 L369.31 344.9 L369.44 345.0 L369.56 345.7 L369.69 348.0 L369.81 344.9 L369.94 346.5 L370.06 351.6 L370.19 351.4 L370.31 341.7 L370.44 344.4 L370.56 346.1 L370.69 351.0 L370.81 346.3 L370.94 352.8 L371.06 348.3 L371.19 351.4 L371.31 344.7 L371.44 346.3 L371.56 350.2 L371.69 348.9 L371.81 341.7 L371.94 346.4 L372.06 347.8 L372.19 349.0 L372.31 345.4 L372.44 352.3 L372.56 347.7 L372.69 351.4 L372.81 348.4 L372.94 347.4 L373.06 346.3 L373.19 343.8 L373.31 349.8 L373.44 349.4 L373.56 350.0 L373.69 346.1 L373.81 344.3 L373.94 346.1 L374.06 346.3 L374.19 347.2 L374.31 350.1 L374.44 344.5 L374.56 345.8 L374.69 349.2 L374.81 349.9 L374.94 353.6 L375.06 348.8 L375.19 344.7 L375.31 344.2 L375.44 344.9 L375.56 347.4 L375.69 347.9 L375.81 347.0 L375.94 345.4 L376.06 346.7 L376.19 347.0 L376.31 349.0 L376.44 347.4 L376.56 344.8 L376.69 343.8 L376.81 351.6 L376.94 347.0 L377.06 346.7 L377.19 347.1 L377.31 350.6 L377.44 346.3 L377.56 347.8 L377.69 346.5 L377.81 348.9 L377.94 344.3 L378.06 347.8 L378.19 350.2 L378.31 350.7 L378.44 349.0 L378.56 348.1 L378.69 351.8 L378.81 349.3 L378.94 351.3 L379.06 343.7 L379.19 344.0 L379.31 349.6 L379.44 346.4 L379.56 346.0 L379.69 344.4 L379.81 351.6 L379.94 343.7 L380.06 347.5 L380.19 343.2 L380.31 346.7 L380.44 353.7 L380.56 354.4 L380.69 345.8 L380.81 344.3 L380.94 351.9 L381.06 344.7 L381.19 342.0 L381.31 348.3 L381.44 344.1 L381.56 343.0 L381.69 350.5 L381.81 345.1 L381.94 344.1 L382.06 347.7 L382.19 346.7 L382.31 350.5 L382.44 347.5 L382.56 351.9 L382.69 350.5 L382.81 352.5 L382.94 350.5 L383.06 347.5 L383.19 348.8 L383.31 347.3 L383.44 342.7 L383.56 343.8 L383.69 349.4 L383.81 340.3 L383.94 344.8 L384.06 343.5 L384.19 347.0 L384.31 344.2 L384.44 347.9 L384.56 346.7 L384.69 345.8 L384.81 344.8 L384.94 340.8 L385.06 347.5 L385.19 343.5 L385.31 346.4 L385.44 348.3 L385.56 350.3 L385.69 349.2 L385.81 351.6 L385.94 343.1 L386.06 349.2 L386.19 351.8 L386.31 348.4 L386.44 344.0 L386.56 348.4 L386.69 345.7 L386.81 345.4 L386.94 350.3 L387.06 346.7 L387.19 344.0 L387.31 345.3 L387.44 352.9 L387.56 344.8 L387.69 349.2 L387.81 347.8 L387.94 350.6 L388.06 346.4 L388.19 344.5 L388.31 345.4 L388.44 344.2 L388.56 354.9 L388.69 347.8 L388.81 346.3 L388.94 350.9 L389.06 349.2 L389.19 346.7 L389.31 349.1 L389.44 348.0 L389.56 350.6 L389.69 352.0 L389.81 346.3 L389.94 347.1 L390.06 346.7 L390.19 350.8 L390.31 348.4 L390.44 349.5 L390.56 349.9 L390.69 345.4 L390.81 347.6 L390.94 351.2 L391.06 350.0 L391.19 349.6 L391.31 346.4 L391.44 346.2 L391.56 344.7 L391.69 346.4 L391.81 347.1 L391.94 343.1 L392.06 350.7 L392.19 345.0 L392.31 348.0 L392.44 349.0 L392.56 345.6 L392.69 342.0 L392.81 350.1 L392.94 348.4 L393.06 346.5 L393.19 350.5 L393.31 349.9 L393.44 344.4 L393.56 347.0 L393.69 342.1 L393.81 346.5 L393.94 351.3 L394.06 344.8 L394.19 349.6 L394.31 342.8 L394.44 346.4 L394.56 350.0 L394.69 352.2 L394.81 348.6 L394.94 349.4 L395.06 352.3 L395.19 340.1 L395.31 342.2 L395.44 352.7 L395.56 354.5 L395.69 348.9 L395.81 347.4 L395.94 348.0 L396.06 347.3 L396.19 345.4 L396.31 347.2 L396.44 346.8 L396.56 349.2 L396.69 349.2 L396.81 350.1 L396.94 348.9 L397.06 344.4 L397.19 351.2 L397.31 339.4 L397.44 347.5 L397.56 348.2 L397.69 345.7 L397.81 352.7 L397.94 344.0 L398.06 343.8 L398.19 345.7 L398.31 348.5 L398.44 349.5 L398.56 347.6 L398.69 349.1 L398.81 345.2 L398.94 345.5 L399.06 347.6 L399.19 343.3 L399.31 347.8 L399.44 346.1 L399.56 349.2 L399.69 344.3 L399.81 345.7 L399.94 345.6 L400.06 346.2 L400.19 344.3 L400.31 346.5 L400.44 343.3 L400.56 348.8 L400.69 349.2 L400.81 347.2 L400.94 346.7 L401.06 344.7 L401.19 344.4 L401.31 346.6 L401.44 344.6 L401.56 343.8 L401.69 347.7 L401.81 347.2 L401.94 346.0 L402.06 344.9 L402.19 347.1 L402.31 345.2 L402.44 346.0 L402.56 347.8 L402.69 349.3 L402.81 349.5 L402.94 345.4 L403.06 350.8 L403.19 343.9 L403.31 346.7 L403.44 351.0 L403.56 354.2 L403.69 347.6 L403.81 346.2 L403.94 346.1 L404.06 343.7 L404.19 346.8 L404.31 346.0 L404.44 345.0 L404.56 350.7 L404.69 345.0 L404.81 352.2 L404.94 349.6 L405.06 349.1 L405.19 345.5 L405.31 345.8 L405.44 341.4 L405.56 348.0 L405.69 346.4 L405.81 348.4 L405.94 345.3 L406.06 348.7 L406.19 342.9 L406.31 340.9 L406.44 348.6 L406.56 350.4 L406.69 339.2 L406.81 351.0 L406.94 346.2 L407.06 346.8 L407.19 342.7 L407.31 344.3 L407.44 349.3 L407.56 345.1 L407.69 347.1 L407.81 346.8 L407.94 353.0 L408.06 349.8 L408.19 343.4 L408.31 345.9 L408.44 343.9 L408.56 343.2 L408.69 345.2 L408.81 350.4 L408.94 347.3 L409.06 349.2 L409.19 346.8 L409.31 346.0 L409.44 347.4 L409.56 347.0 L409.69 352.8 L409.81 352.5 L409.94 348.3 L410.06 349.0 L410.19 341.4 L410.31 346.9 L410.44 354.1 L410.56 344.9 L410.69 349.6 L410.81 350.8 L410.94 346.1 L411.06 346.6 L411.19 345.9 L411.31 349.6 L411.44 347.3 L411.56 351.6 L411.69 350.6 L411.81 347.2 L411.94 354.7 L412.06 346.3 L412.19 345.4 L412.31 346.6 L412.44 344.7 L412.56 346.0 L412.69 347.0 L412.81 349.8 L412.94 342.6 L413.06 343.2 L413.19 345.0 L413.31 346.4 L413.44 348.5 L413.56 345.0 L413.69 351.6 L413.81 345.7 L413.94 346.6 L414.06 347.4 L414.19 350.6 L414.31 348.1 L414.44 347.3 L414.56 345.7 L414.69 347.7 L414.81 348.4 L414.94 346.2 L415.06 347.2 L415.19 341.9 L415.31 345.7 L415.44 350.6 L415.56 351.4 L415.69 347.0 L415.81 341.0 L415.94 352.5 L416.06 346.7 L416.19 354.7 L416.31 346.0 L416.44 350.1 L416.56 345.5 L416.69 351.2 L416.81 350.6 L416.94 344.1 L417.06 351.0 L417.19 355.2 L417.31 346.6 L417.44 343.7 L417.56 348.0 L417.69 346.0 L417.81 342.9 L417.94 344.2 L418.06 347.9 L418.19 342.8 L418.31 350.4 L418.44 348.5 L418.56 346.7 L418.69 351.3 L418.81 344.6 L418.94 349.2 L419.06 343.3 L419.19 346.3 L419.31 349.1 L419.44 345.6 L419.56 346.9 L419.69 349.1 L419.81 351.6 L419.94 351.0 L420.06 348.6 L420.19 346.4 L420.31 343.1 L420.44 352.2 L420.56 352.7 L420.69 340.9 L420.81 349.7 L420.94 347.1 L421.06 349.3 L421.19 348.1 L421.31 346.7 L421.44 347.2 L421.56 347.1 L421.69 350.6 L421.81 346.5 L421.94 345.6 L422.06 349.1 L422.19 349.1 L422.31 348.5 L422.44 348.0 L422.56 351.5 L422.69 350.4 L422.81 347.8 L422.94 346.6" fill="none" stroke="#0ee8ee" stroke-width="0.6"/>
<path d="M423.06 245.8 L423.19 238.5 L423.31 242.4 L423.44 241.8 L423.56 244.4 L423.69 242.8 L423.81 251.0 L423.94 246.1 L424.06 245.1 L424.19 250.5 L424.31 243.9 L424.44 243.0 L424.56 247.5 L424.69 246.3 L424.81 246.6 L424.94 247.4 L425.06 242.9 L425.19 242.0 L425.31 241.9 L425.44 244.2 L425.56 246.8 L425.69 240.8 L425.81 242.4 L425.94 240.0 L426.06 249.7 L426.19 246.2 L426.31 244.6 L426.44 240.4 L426.56 241.0 L426.69 242.0 L426.81 244.0 L426.94 240.2 L427.06 243.3 L427.19 247.5 L427.31 244.0 L427.44 244.2 L427.56 237.9 L427.69 243.1 L427.81 243.5 L427.94 241.9 L428.06 239.9 L428.19 243.7 L428.31 241.0 L428.44 242.3 L428.56 239.3 L428.69 243.6 L428.81 246.6 L428.94 241.4 L429.06 244.9 L429.19 239.5 L429.31 245.6 L429.44 245.5 L429.56 242.8 L429.69 246.5 L429.81 241.4 L429.94 244.0 L430.06 248.8 L430.19 243.8 L430.31 240.7 L430.44 247.3 L430.56 245.5 L430.69 243.1 L430.81 238.7 L430.94 238.4 L431.06 239.5 L431.19 248.2 L431.31 244.8 L431.44 241.4 L431.56 247.2 L431.69 248.2 L431.81 241.5 L431.94 245.3 L432.06 239.2 L432.19 245.0 L432.31 249.2 L432.44 239.8 L432.56 244.1 L432.69 242.0 L432.81 243.7 L432.94 244.2 L433.06 244.7 L433.19 246.5 L433.31 245.4 L433.44 247.0 L433.56 246.9 L433.69 247.1 L433.81 242.0 L433.94 245.1 L434.06 242.9 L434.19 241.4 L434.31 249.6 L434.44 244.8 L434.56 244.1 L434.69 237.7 L434.81 243.3 L434.94 246.2 L435.06 243.3 L435.19 242.3 L435.31 248.2 L435.44 243.0 L435.56 243.0 L435.69 243.6 L435.81 243.2 L435.94 247.0 L436.06 245.6 L436.19 243.7 L436.31 242.9 L436.44 243.2 L436.56 248.8 L436.69 243.0 L436.81 245.8 L436.94 239.3 L437.06 244.9 L437.19 245.9 L437.31 247.6 L437.44 244.8 L437.56 245.6 L437.69 244.8 L437.81 247.0 L437.94 249.9 L438.06 244.5 L438.19 241.5 L438.31 245.6 L438.44 243.6 L438.56 245.8 L438.69 246.2 L438.81 244.4 L438.94 242.6 L439.06 244.8 L439.19 240.3 L439.31 244.7 L439.44 241.3 L439.56 245.2 L439.69 244.3 L439.81 243.3 L439.94 240.4 L440.06 244.1 L440.19 241.9 L440.31 243.5 L440.44 245.9 L440.56 246.7 L440.69 240.1 L440.81 246.6 L440.94 247.9 L441.06 247.2 L441.19 244.7 L441.31 243.7 L441.44 249.0 L441.56 243.0 L441.69 239.4 L441.81 244.2 L441.94 244.7 L442.06 241.0 L442.19 240.3 L442.31 249.6 L442.44 244.2 L442.56 246.2 L442.69 242.2 L442.81 239.6 L442.94 243.4 L443.06 247.8 L443.19 241.9 L443.31 238.8 L443.44 243.4 L443.56 243.1 L443.69 243.9 L443.81 240.9 L443.94 243.0 L444.06 242.4 L444.19 246.5 L444.31 244.4 L444.44 246.5 L444.56 243.8 L444.69 237.7 L444.81 238.3 L444.94 245.5 L445.06 246.4 L445.19 246.5 L445.31 243.7 L445.44 238.7 L445.56 242.5 L445.69 245.1 L445.81 247.9 L445.94 242.9 L446.06 242.3 L446.19 241.6 L446.31 246.9 L446.44 246.4 L446.56 238.7 L446.69 247.5 L446.81 241.3 L446.94 239.6 L447.06 239.4 L447.19 241.8 L447.31 250.6 L447.44 251.4 L447.56 240.4 L447.69 241.9 L447.81 244.4 L447.94 245.1 L448.06 242.6 L448.19 239.3 L448.31 242.7 L448.44 241.9 L448.56 238.8 L448.69 244.3 L448.81 239.7 L448.94 238.8 L449.06 248.3 L449.19 246.7 L449.31 248.1 L449.44 244.2 L449.56 242.7 L449.69 243.6 L449.81 240.0 L449.94 246.1 L450.06 244.7 L450.19 243.0 L450.31 238.6 L450.44 243.6 L450.56 248.6 L450.69 248.1 L450.81 246.4 L450.94 242.9 L451.06 244.3 L451.19 245.5 L451.31 244.5 L451.44 247.0 L451.56 242.0 L451.69 237.1 L451.81 237.0 L451.94 241.2 L452.06 240.0 L452.19 245.8 L452.31 247.0 L452.44 243.9 L452.56 245.5 L452.69 244.1 L452.81 244.4 L452.94 242.5 L453.06 242.8 L453.19 247.4 L453.31 243.2 L453.44 243.8 L453.56 247.4 L453.69 246.8 L453.81 242.8 L453.94 244.6 L454.06 241.0 L454.19 244.3 L454.31 244.8 L454.44 243.9 L454.56 244.4 L454.69 245.0 L454.81 236.7 L454.94 241.5 L455.06 244.2 L455.19 242.5 L455.31 241.2 L455.44 243.2 L455.56 248.6 L455.69 243.2 L455.81 242.1 L455.94 242.5 L456.06 240.5 L456.19 245.3 L456.31 241.1 L456.44 246.6 L456.56 246.5 L456.69 245.6 L456.81 246.9 L456.94 243.7 L457.06 238.9 L457.19 243.7 L457.31 245.8 L457.44 239.4 L457.56 240.4 L457.69 247.1 L457.81 245.2 L457.94 247.9 L458.06 245.9 L458.19 244.1 L458.31 245.2 L458.44 246.4 L458.56 243.9 L458.69 243.3 L458.81 244.8 L458.94 243.0 L459.06 250.9 L459.19 241.7 L459.31 239.6 L459.44 240.1 L459.56 246.9 L459.69 242.7 L459.81 244.4 L459.94 243.3 L460.06 244.7 L460.19 239.6 L460.31 244.2 L460.44 242.2 L460.56 247.1 L460.69 245.7 L460.81 240.3 L460.94 241.1 L461.06 245.6 L461.19 247.4 L461.31 246.1 L461.44 243.5 L461.56 247.1 L461.69 237.0 L461.81 242.4 L461.94 241.0 L462.06 241.0 L462.19 245.6 L462.31 244.7 L462.44 244.7 L462.56 243.6 L462.69 245.7 L462.81 246.2 L462.94 242.2 L463.06 246.6 L463.19 241.2 L463.31 249.0 L463.44 240.1 L463.56 243.1 L463.69 240.7 L463.81 244.1 L463.94 247.8 L464.06 241.8 L464.19 249.1 L464.31 248.0 L464.44 245.0 L464.56 242.2 L464.69 246.6 L464.81 235.9 L464.94 241.7 L465.06 246.7 L465.19 243.8 L465.31 251.1 L465.44 241.9 L465.56 240.1 L465.69 243.3 L465.81 245.6 L465.94 248.9 L466.06 238.8 L466.19 244.4 L466.31 247.6 L466.44 241.9 L466.56 242.6 L466.69 240.3 L466.81 246.2 L466.94 246.3 L467.06 245.6 L467.19 244.6 L467.31 246.8 L467.44 243.5 L467.56 246.0 L467.69 246.3 L467.81 247.7 L467.94 245.4 L468.06 244.2 L468.19 246.0 L468.31 239.4 L468.44 238.7 L468.56 248.6 L468.69 244.3 L468.81 240.9 L468.94 242.2 L469.06 243.5 L469.19 244.1 L469.31 241.7 L469.44 246.8 L469.56 239.0 L469.69 251.9 L469.81 240.8 L469.94 248.8 L470.06 245.9 L470.19 238.9 L470.31 240.4 L470.44 244.1 L470.56 244.7 L470.69 242.7 L470.81 244.0 L470.94 244.4 L471.06 240.6 L471.19 244.1 L471.31 250.6 L471.44 242.0 L471.56 241.0 L471.69 245.9 L471.81 247.9 L471.94 247.0 L472.06 242.1 L472.19 243.7 L472.31 244.5 L472.44 243.3 L472.56 245.1 L472.69 247.1 L472.81 245.5 L472.94 243.9 L473.06 243.3 L473.19 249.2 L473.31 240.3 L473.44 249.8 L473.56 246.1 L473.69 244.2 L473.81 241.8 L473.94 249.3 L474.06 247.5 L474.19 246.6 L474.31 250.0 L474.44 238.6 L474.56 244.2 L474.69 243.0 L474.81 241.8 L474.94 244.1 L475.06 245.5 L475.19 245.5 L475.31 243.5 L475.44 240.0 L475.56 245.6 L475.69 245.7 L475.81 250.2 L475.94 246.7 L476.06 244.0 L476.19 240.5 L476.31 251.9 L476.44 241.9 L476.56 244.5 L476.69 246.1 L476.81 245.4 L476.94 247.8 L477.06 240.9 L477.19 241.9 L477.31 244.5 L477.44 240.3 L477.56 242.1 L477.69 248.0 L477.81 244.8 L477.94 243.6 L478.06 242.3 L478.19 244.0 L478.31 243.8 L478.44 240.7 L478.56 246.3 L478.69 240.1 L478.81 247.7 L478.94 242.9 L479.06 237.2 L479.19 239.3 L479.31 244.8 L479.44 241.3 L479.56 249.3 L479.69 248.0 L479.81 250.2 L479.94 246.5 L480.06 247.9 L480.19 242.1 L480.31 247.8 L480.44 242.6 L480.56 243.8 L480.69 239.9 L480.81 244.1 L480.94 245.1 L481.06 243.8 L481.19 240.6 L481.31 246.6 L481.44 246.6 L481.56 243.7 L481.69 246.2 L481.81 246.9 L481.94 241.0 L482.06 243.8 L482.19 238.4 L482.31 240.9 L482.44 245.2 L482.56 241.3 L482.69 245.1 L482.81 245.0 L482.94 237.8 L483.06 242.5 L483.19 248.4 L483.31 244.0 L483.44 244.3 L483.56 241.8 L483.69 239.1 L483.81 239.2 L483.94 251.9 L484.06 243.4 L484.19 241.3 L484.31 244.3 L484.44 238.1 L484.56 248.1 L484.69 249.0 L484.81 241.7 L484.94 244.9 L485.06 241.3 L485.19 246.5 L485.31 241.4 L485.44 243.5 L485.56 247.8 L485.69 245.5 L485.81 243.0 L485.94 239.4 L486.06 239.2 L486.19 247.5 L486.31 245.5 L486.44 244.1 L486.56 247.7 L486.69 244.3 L486.81 241.8 L486.94 243.6 L487.06 243.6 L487.19 243.9 L487.31 251.4 L487.44 245.6 L487.56 244.8 L487.69 243.2 L487.81 241.9 L487.94 240.9 L488.06 238.3 L488.19 242.5 L488.31 239.4 L488.44 238.4 L488.56 241.1 L488.69 237.8 L488.81 248.0 L488.94 247.6 L489.06 241.0 L489.19 250.0 L489.31 245.9 L489.44 236.4 L489.56 244.0 L489.69 240.9 L489.81 238.7 L489.94 243.1 L490.06 247.4 L490.19 245.2 L490.31 239.6 L490.44 241.9 L490.56 241.7 L490.69 247.3 L490.81 243.6 L490.94 241.0 L491.06 241.2 L491.19 238.0 L491.31 241.4 L491.44 246.6 L491.56 238.2 L491.69 244.5 L491.81 243.6 L491.94 246.3 L492.06 240.5 L492.19 246.6 L492.31 248.6 L492.44 250.8 L492.56 239.0 L492.69 243.8 L492.81 243.3 L492.94 244.3 L493.06 241.0 L493.19 246.5 L493.31 251.0 L493.44 248.4 L493.56 241.1 L493.69 242.2 L493.81 246.1 L493.94 244.3 L494.06 241.6 L494.19 247.6 L494.31 245.5 L494.44 247.0 L494.56 243.4 L494.69 247.7 L494.81 242.5 L494.94 240.5 L495.06 243.9 L495.19 239.7 L495.31 247.7 L495.44 246.1 L495.56 238.9 L495.69 244.4 L495.81 246.5 L495.94 242.8 L496.06 245.2 L496.19 242.1 L496.31 243.7 L496.44 243.6 L496.56 245.4 L496.69 241.0 L496.81 240.5 L496.94 244.9 L497.06 242.4 L497.19 245.5 L497.31 242.4 L497.44 240.0 L497.56 246.1 L497.69 244.7 L497.81 246.1 L497.94 242.9 L498.06 242.8 L498.19 247.7 L498.31 238.8 L498.44 249.1 L498.56 245.5 L498.69 243.7 L498.81 244.2 L498.94 245.7 L499.06 241.6 L499.19 244.7 L499.31 241.0 L499.44 238.3 L499.56 244.5 L499.69 244.2 L499.81 245.9 L499.94 245.6 L500.06 246.0 L500.19 246.3 L500.31 240.7 L500.44 247.6 L500.56 251.9 L500.69 242.2 L500.81 240.1 L500.94 246.0 L501.06 246.7 L501.19 246.9 L501.31 248.5 L501.44 239.7 L501.56 245.1 L501.69 245.3 L501.81 247.7 L501.94 241.2 L502.06 244.0 L502.19 242.8 L502.31 243.4 L502.44 243.5 L502.56 243.5 L502.69 238.6 L502.81 243.8 L502.94 244.1 L503.06 242.8 L503.19 235.9 L503.31 241.8 L503.44 241.9 L503.56 241.3 L503.69 248.7 L503.81 246.7 L503.94 243.3 L504.06 245.7 L504.19 251.9 L504.31 241.0 L504.44 245.3 L504.56 242.1 L504.69 248.4 L504.81 247.3 L504.94 243.5 L505.06 245.8 L505.19 241.5 L505.31 239.1 L505.44 246.4 L505.56 248.8 L505.69 243.0 L505.81 242.3 L505.94 238.5 L506.06 250.4 L506.19 240.3 L506.31 241.0 L506.44 243.3 L506.56 247.6 L506.69 244.1 L506.81 243.9 L506.94 244.0 L507.06 246.5 L507.19 243.8 L507.31 244.4 L507.44 243.7 L507.56 240.6 L507.69 247.9 L507.81 241.8 L507.94 239.9 L508.06 242.6 L508.19 244.0 L508.31 246.4 L508.44 239.5 L508.56 240.1 L508.69 244.4 L508.81 245.1 L508.94 240.6 L509.06 240.5 L509.19 244.4 L509.31 243.5 L509.44 239.0 L509.56 241.3 L509.69 248.4 L509.81 240.7 L509.94 247.1 L510.06 239.3 L510.19 248.4 L510.31 248.7 L510.44 242.0 L510.56 241.9 L510.69 245.8 L510.81 240.2 L510.94 245.6 L511.06 247.6 L511.19 244.7 L511.31 244.9 L511.44 243.4 L511.56 246.9 L511.69 241.4 L511.81 248.7 L511.94 243.8 L512.06 242.9 L512.19 239.0 L512.31 242.6 L512.44 244.6 L512.56 247.7 L512.69 239.0 L512.81 243.5 L512.94 241.8 L513.06 240.3 L513.19 243.9 L513.31 241.6 L513.44 246.5 L513.56 235.9 L513.69 246.1 L513.81 238.2 L513.94 238.0 L514.06 245.5 L514.19 242.9 L514.31 244.3 L514.44 241.0 L514.56 240.7 L514.69 241.7 L514.81 243.7 L514.94 241.4 L515.06 242.6 L515.19 241.3 L515.31 244.6 L515.44 240.5 L515.56 237.6 L515.69 236.0 L515.81 243.8 L515.94 244.2 L516.06 246.8 L516.19 241.7 L516.31 240.5 L516.44 239.4 L516.56 246.2 L516.69 242.0 L516.81 246.9 L516.94 243.7 L517.06 243.1 L517.19 238.3 L517.31 241.9 L517.44 246.3 L517.56 242.1 L517.69 245.9 L517.81 238.9 L517.94 247.0 L518.06 251.9 L518.19 247.3 L518.31 244.9 L518.44 240.2 L518.56 242.3 L518.69 241.9 L518.81 244.5 L518.94 237.8 L519.06 241.3 L519.19 246.3 L519.31 244.3 L519.44 246.1 L519.56 246.5 L519.69 240.5 L519.81 239.8 L519.94 245.3 L520.06 244.0 L520.19 244.1 L520.31 241.5 L520.44 247.0 L520.56 245.4 L520.69 247.3 L520.81 242.8 L520.94 246.0 L521.06 243.7 L521.19 241.1 L521.31 243.7 L521.44 238.9 L521.56 243.4 L521.69 244.4 L521.81 246.0 L521.94 240.7 L522.06 239.9 L522.19 241.7 L522.31 237.7 L522.44 241.9 L522.56 251.8 L522.69 244.3 L522.81 241.6 L522.94 241.9 L523.06 249.2 L523.19 240.4 L523.31 243.6 L523.44 243.7 L523.56 241.7 L523.69 241.7 L523.81 238.8 L523.94 241.4 L524.06 247.8 L524.19 248.2 L524.31 243.1 L524.44 246.0 L524.56 245.3 L524.69 244.2 L524.81 243.5 L524.94 247.6 L525.06 245.6 L525.19 243.2 L525.31 243.2 L525.44 246.7 L525.56 242.1 L525.69 241.7 L525.81 243.1 L525.94 242.4 L526.06 247.7 L526.19 245.0 L526.31 243.6 L526.44 242.3 L526.56 248.2 L526.69 245.2 L526.81 250.2 L526.94 246.6 L527.06 243.3 L527.19 242.2 L527.31 243.0 L527.44 244.4 L527.56 246.3 L527.69 245.4 L527.81 248.6 L527.94 239.3 L528.06 244.0 L528.19 239.6 L528.31 240.8 L528.44 242.1 L528.56 241.9 L528.69 241.0 L528.81 239.3 L528.94 247.3 L529.06 242.9 L529.19 246.8 L529.31 240.6 L529.44 236.9 L529.56 242.1 L529.69 246.5 L529.81 242.2 L529.94 245.1 L530.06 240.7 L530.19 248.1 L530.31 245.2 L530.44 247.1 L530.56 243.1 L530.69 247.8 L530.81 244.1 L530.94 242.4 L531.06 242.0 L531.19 244.1 L531.31 241.2 L531.44 240.3 L531.56 244.3 L531.69 246.0 L531.81 243.0 L531.94 246.4 L532.06 248.7 L532.19 240.1 L532.31 244.7 L532.44 241.0 L532.56 242.0 L532.69 244.4 L532.81 236.8 L532.94 245.7 L533.06 246.4 L533.19 245.5 L533.31 245.8 L533.44 249.4 L533.56 242.8 L533.69 247.2 L533.81 248.3 L533.94 245.4 L534.06 238.5 L534.19 243.4 L534.31 243.0 L534.44 239.0 L534.56 243.7 L534.69 246.2 L534.81 243.1 L534.94 243.4 L535.06 248.3 L535.19 242.0 L535.31 241.1 L535.44 244.0 L535.56 247.3 L535.69 245.7 L535.81 244.1 L535.94 242.4 L536.06 247.6 L536.19 246.6 L536.31 238.7 L536.44 244.9 L536.56 236.7 L536.69 248.4 L536.81 245.7 L536.94 242.0 L537.06 240.0 L537.19 243.0 L537.31 238.6 L537.44 245.6 L537.56 242.4 L537.69 238.6 L537.81 243.8 L537.94 247.5 L538.06 240.1 L538.19 242.8 L538.31 249.4 L538.44 244.5 L538.56 242.2 L538.69 244.5 L538.81 246.2 L538.94 240.9 L539.06 243.6 L539.19 239.0 L539.31 239.1 L539.44 239.3 L539.56 246.4 L539.69 244.8 L539.81 246.1 L539.94 247.6 L540.06 244.0 L540.19 244.6 L540.31 245.1 L540.44 245.3 L540.56 240.7 L540.69 243.1 L540.81 243.4 L540.94 244.0 L541.06 241.6 L541.19 243.5 L541.31 244.8 L541.44 244.5 L541.56 245.7 L541.69 246.4 L541.81 245.6 L541.94 246.8 L542.06 246.4 L542.19 248.1 L542.31 245.8 L542.44 242.0 L542.56 250.9 L542.69 247.3 L542.81 247.7 L542.94 246.1 L543.06 244.0 L543.19 240.5 L543.31 245.2 L543.44 242.8 L543.56 242.7 L543.69 237.5 L543.81 248.6 L543.94 240.4 L544.06 240.6 L544.19 245.3 L544.31 245.6 L544.44 241.5 L544.56 243.9 L544.69 244.7 L544.81 244.4 L544.94 245.5 L545.06 246.2 L545.19 242.8 L545.31 239.0 L545.44 250.4 L545.56 242.7 L545.69 240.9 L545.81 246.2 L545.94 245.7 L546.06 242.0 L546.19 251.0 L546.31 236.8 L546.44 247.7 L546.56 243.8 L546.69 244.8 L546.81 244.9 L546.94 243.2 L547.06 244.9 L547.19 240.0 L547.31 242.7 L547.44 249.5 L547.56 236.1 L547.69 247.6 L547.81 237.2 L547.94 241.3 L548.06 246.5 L548.19 242.7 L548.31 242.2 L548.44 239.4 L548.56 243.5 L548.69 243.4 L548.81 242.0 L548.94 239.2 L549.06 244.4 L549.19 245.2 L549.31 247.3 L549.44 245.4 L549.56 248.5 L549.69 247.5 L549.81 235.9 L549.94 248.9 L550.06 243.6 L550.19 240.7 L550.31 245.2 L550.44 246.8 L550.56 239.2 L550.69 240.2 L550.81 246.0 L550.94 242.2 L551.06 248.3 L551.19 244.5 L551.31 242.2 L551.44 239.9 L551.56 245.7 L551.69 238.7 L551.81 240.0 L551.94 239.9 L552.06 249.0 L552.19 249.0 L552.31 243.2 L552.44 242.7 L552.56 246.0 L552.69 247.6 L552.81 241.5 L552.94 250.5 L553.06 243.3 L553.19 247.3 L553.31 236.8 L553.44 243.7 L553.56 241.8 L553.69 249.9 L553.81 243.3 L553.94 240.1" fill="none" stroke="#0ee8ee" stroke-width="0.6"/>
<path d="M554.06 353.1 L554.19 345.1 L554.31 347.2 L554.44 343.4 L554.56 349.2 L554.69 347.8 L554.81 346.3 L554.94 346.0 L555.06 345.5 L555.19 345.0 L555.31 343.0 L555.44 350.8 L555.56 349.9 L555.69 343.0 L555.81 343.7 L555.94 348.4 L556.06 354.0 L556.19 346.6 L556.31 346.3 L556.44 346.4 L556.56 347.9 L556.69 346.7 L556.81 350.5 L556.94 350.2 L557.06 348.9 L557.19 351.9 L557.31 346.5 L557.44 345.5 L557.56 355.2 L557.69 341.4 L557.81 342.5 L557.94 340.1 L558.06 348.3 L558.19 344.0 L558.31 350.4 L558.44 340.9 L558.56 346.8 L558.69 346.0 L558.81 343.9 L558.94 350.6 L559.06 346.0 L559.19 348.6 L559.31 345.6 L559.44 347.6 L559.56 345.8 L559.69 347.4 L559.81 346.9 L559.94 345.1 L560.06 348.5 L560.19 346.6 L560.31 344.3 L560.44 344.0 L560.56 348.5 L560.69 351.2 L560.81 343.2 L560.94 345.9 L561.06 348.6 L561.19 350.3 L561.31 349.3 L561.44 343.6 L561.56 347.3 L561.69 349.9 L561.81 347.9 L561.94 346.5 L562.06 343.6 L562.19 347.7 L562.31 347.0 L562.44 347.3 L562.56 351.7 L562.69 350.8 L562.81 344.8 L562.94 347.9 L563.06 346.3 L563.19 347.5 L563.31 352.1 L563.44 350.0 L563.56 347.3 L563.69 345.2 L563.81 346.7 L563.94 348.3 L564.06 345.7 L564.19 350.5 L564.31 347.3 L564.44 343.6 L564.56 353.4 L564.69 339.2 L564.81 346.4 L564.94 346.8 L565.06 350.2 L565.19 350.6 L565.31 351.6 L565.44 351.9 L565.56 348.2 L565.69 347.5 L565.81 350.3 L565.94 347.1 L566.06 343.4 L566.19 345.8 L566.31 349.2 L566.44 349.0 L566.56 343.9 L566.69 350.8 L566.81 348.1 L566.94 342.7 L567.06 348.6 L567.19 350.2 L567.31 348.8 L567.44 346.3 L567.56 344.8 L567.69 350.6 L567.81 347.9 L567.94 347.2 L568.06 346.0 L568.19 344.1 L568.31 341.5 L568.44 346.2 L568.56 350.5 L568.69 349.5 L568.81 345.1 L568.94 351.8 L569.06 346.5 L569.19 344.2 L569.31 350.1 L569.44 351.4 L569.56 346.0 L569.69 343.5 L569.81 347.0 L569.94 339.9 L570.06 347.4 L570.19 351.8 L570.31 348.0 L570.44 345.0 L570.56 349.3 L570.69 345.7 L570.81 351.0 L570.94 346.1 L571.06 353.3 L571.19 346.1 L571.31 347.8 L571.44 344.4 L571.56 343.3 L571.69 348.2 L571.81 348.3 L571.94 344.3 L572.06 348.9 L572.19 346.0 L572.31 345.5 L572.44 347.0 L572.56 348.4 L572.69 349.4 L572.81 350.9 L572.94 348.3 L573.06 345.0 L573.19 345.1 L573.31 348.3 L573.44 343.6 L573.56 346.7 L573.69 346.0 L573.81 346.9 L573.94 347.7 L574.06 350.3 L574.19 352.1 L574.31 349.9 L574.44 350.2 L574.56 344.0 L574.69 350.3 L574.81 351.1 L574.94 343.1 L575.06 354.8 L575.19 345.5 L575.31 340.0 L575.44 352.5 L575.56 347.4 L575.69 344.8 L575.81 345.5 L575.94 350.4 L576.06 348.0 L576.19 346.1 L576.31 350.7 L576.44 344.4 L576.56 344.6 L576.69 345.5 L576.81 344.9 L576.94 349.3 L577.06 346.5 L577.19 344.0 L577.31 345.8 L577.44 341.2 L577.56 347.7 L577.69 347.5 L577.81 349.0 L577.94 346.5 L578.06 348.4 L578.19 344.4 L578.31 347.3 L578.44 347.7 L578.56 343.5 L578.69 349.0 L578.81 347.6 L578.94 347.4 L579.06 345.8 L579.19 353.2 L579.31 347.2 L579.44 344.9 L579.56 344.6 L579.69 349.0 L579.81 346.6 L579.94 344.8 L580.06 345.0 L580.19 350.0 L580.31 347.5 L580.44 350.4 L580.56 347.1 L580.69 343.6 L580.81 349.8 L580.94 348.2 L581.06 345.2 L581.19 346.3 L581.31 344.3 L581.44 349.7 L581.56 345.9 L581.69 348.6 L581.81 348.0 L581.94 346.4 L582.06 348.3 L582.19 346.5 L582.31 343.6 L582.44 345.9 L582.56 343.7 L582.69 349.5 L582.81 349.2 L582.94 345.4 L583.06 349.1 L583.19 347.9 L583.31 350.1 L583.44 344.4 L583.56 347.3 L583.69 344.2 L583.81 345.1 L583.94 351.3 L584.06 341.2 L584.19 344.5 L584.31 348.7 L584.44 349.5 L584.56 344.8 L584.69 341.1 L584.81 342.0 L584.94 348.3 L585.06 350.5 L585.19 349.9 L585.31 345.0 L585.44 351.3 L585.56 346.6 L585.69 349.0 L585.81 346.6 L585.94 352.0 L586.06 345.6 L586.19 340.8 L586.31 346.3 L586.44 347.8 L586.56 348.0 L586.69 345.0 L586.81 346.5 L586.94 343.8 L587.06 346.5 L587.19 347.5 L587.31 347.9 L587.44 352.1 L587.56 341.2 L587.69 348.8 L587.81 348.5 L587.94 343.7 L588.06 347.4 L588.19 347.2 L588.31 344.2 L588.44 349.4 L588.56 352.9 L588.69 349.2 L588.81 349.5 L588.94 350.4 L589.06 346.8 L589.19 350.1 L589.31 344.8 L589.44 347.7 L589.56 349.3 L589.69 351.1 L589.81 346.3 L589.94 346.3 L590.06 348.6 L590.19 347.0 L590.31 347.6 L590.44 349.6 L590.56 344.9 L590.69 349.8 L590.81 348.3 L590.94 346.4 L591.06 343.5 L591.19 345.3 L591.31 347.1 L591.44 350.0 L591.56 341.3 L591.69 349.3 L591.81 347.8 L591.94 343.8 L592.06 349.8 L592.19 348.4 L592.31 348.5 L592.44 344.3 L592.56 343.9 L592.69 349.9 L592.81 351.4 L592.94 348.3 L593.06 346.6 L593.19 345.9 L593.31 342.1 L593.44 350.1 L593.56 346.9 L593.69 350.9 L593.81 345.0 L593.94 350.3 L594.06 345.1 L594.19 348.9 L594.31 351.3 L594.44 345.1 L594.56 349.9 L594.69 347.2 L594.81 344.4 L594.94 347.8 L595.06 349.1 L595.19 345.1 L595.31 346.4 L595.44 345.5 L595.56 344.9 L595.69 346.6 L595.81 349.7 L595.94 345.7 L596.06 350.9 L596.19 346.1 L596.31 345.1 L596.44 350.4 L596.56 351.4 L596.69 345.3 L596.81 348.9 L596.94 343.7 L597.06 346.0 L597.19 346.1 L597.31 349.3 L597.44 343.5 L597.56 345.7 L597.69 345.1 L597.81 347.5 L597.94 343.5 L598.06 343.2 L598.19 355.2 L598.31 347.8 L598.44 342.7 L598.56 349.7 L598.69 343.3 L598.81 341.6 L598.94 352.2 L599.06 350.9 L599.19 344.7 L599.31 344.0 L599.44 348.6 L599.56 353.2 L599.69 349.0 L599.81 349.2 L599.94 343.7 L600.06 341.9 L600.19 348.3 L600.31 350.2 L600.44 347.6 L600.56 347.2 L600.69 351.3 L600.81 344.7 L600.94 350.5 L601.06 349.7 L601.19 345.3 L601.31 347.6 L601.44 347.5 L601.56 348.9 L601.69 344.3 L601.81 346.5 L601.94 347.5 L602.06 347.3 L602.19 347.3 L602.31 347.9 L602.44 346.6 L602.56 345.7 L602.69 350.3 L602.81 345.3 L602.94 346.3 L603.06 344.6 L603.19 343.8 L603.31 348.5 L603.44 347.1 L603.56 346.8 L603.69 348.5 L603.81 346.7 L603.94 349.2 L604.06 352.5 L604.19 348.2 L604.31 346.4 L604.44 352.1 L604.56 349.3 L604.69 342.3 L604.81 351.1 L604.94 347.8 L605.06 349.7 L605.19 343.8 L605.31 344.7 L605.44 345.3 L605.56 348.8 L605.69 343.9 L605.81 345.1 L605.94 350.0 L606.06 345.3 L606.19 347.5 L606.31 344.5 L606.44 342.2 L606.56 347.0 L606.69 346.8 L606.81 343.0 L606.94 350.1 L607.06 349.6 L607.19 349.8 L607.31 345.7 L607.44 343.8 L607.56 346.9 L607.69 347.7 L607.81 346.7 L607.94 345.5 L608.06 344.3 L608.19 345.0 L608.31 347.0 L608.44 345.8 L608.56 352.1 L608.69 346.4 L608.81 348.5 L608.94 345.8 L609.06 346.7 L609.19 344.3 L609.31 345.8 L609.44 342.8 L609.56 341.1 L609.69 351.1 L609.81 344.1 L609.94 348.5 L610.06 346.8 L610.19 345.5 L610.31 349.3 L610.44 345.6 L610.56 348.5 L610.69 346.1 L610.81 350.1 L610.94 350.0 L611.06 347.4 L611.19 350.4 L611.31 348.7 L611.44 351.8 L611.56 346.8 L611.69 342.6 L611.81 347.8 L611.94 347.9 L612.06 346.1 L612.19 346.6 L612.31 346.4 L612.44 343.5 L612.56 352.2 L612.69 344.9 L612.81 344.0 L612.94 342.5 L613.06 344.7 L613.19 347.1 L613.31 351.5 L613.44 349.0 L613.56 345.1 L613.69 343.5 L613.81 343.9 L613.94 347.0 L614.06 349.7 L614.19 345.8 L614.31 351.9 L614.44 352.9 L614.56 347.7 L614.69 340.8 L614.81 350.4 L614.94 346.9 L615.06 349.2 L615.19 350.1 L615.31 344.2 L615.44 347.4 L615.56 347.7 L615.69 345.0 L615.81 349.2 L615.94 346.8 L616.06 346.0 L616.19 352.7 L616.31 347.7 L616.44 352.0 L616.56 346.7 L616.69 350.2 L616.81 345.0 L616.94 347.6 L617.06 350.4 L617.19 340.8 L617.31 348.8 L617.44 346.4 L617.56 350.4 L617.69 347.7 L617.81 347.0 L617.94 343.4 L618.06 355.2 L618.19 345.0 L618.31 346.2 L618.44 345.1 L618.56 346.3 L618.69 347.8 L618.81 343.3 L618.94 350.3 L619.06 346.4 L619.19 349.0 L619.31 341.0 L619.44 345.7 L619.56 346.3 L619.69 346.1 L619.81 345.2 L619.94 348.1 L620.06 348.4 L620.19 344.3 L620.31 341.4 L620.44 349.3 L620.56 346.2 L620.69 350.3 L620.81 349.7 L620.94 346.9 L621.06 343.0 L621.19 346.1 L621.31 345.1 L621.44 350.8 L621.56 342.2 L621.69 349.9 L621.81 342.7 L621.94 345.5 L622.06 343.0 L622.19 345.1 L622.31 345.9 L622.44 348.3 L622.56 345.5 L622.69 349.2 L622.81 352.3 L622.94 347.7 L623.06 343.8 L623.19 346.7 L623.31 346.9 L623.44 346.1 L623.56 350.6 L623.69 350.6 L623.81 353.1 L623.94 348.7 L624.06 339.4 L624.19 346.8 L624.31 349.1 L624.44 344.8 L624.56 345.4 L624.69 349.9 L624.81 347.6 L624.94 343.9 L625.06 345.5 L625.19 339.2 L625.31 347.2 L625.44 343.6 L625.56 347.0 L625.69 343.7 L625.81 344.5 L625.94 345.7 L626.06 355.2 L626.19 343.7 L626.31 343.7 L626.44 345.6 L626.56 350.3 L626.69 349.5 L626.81 349.2 L626.94 346.2 L627.06 347.6 L627.19 344.9 L627.31 346.6 L627.44 344.8 L627.56 342.9 L627.69 344.3 L627.81 352.8 L627.94 348.4 L628.06 345.0 L628.19 346.9 L628.31 345.9 L628.44 350.8 L628.56 347.1 L628.69 345.3 L628.81 349.2 L628.94 348.1 L629.06 345.2 L629.19 344.9 L629.31 347.6 L629.44 342.4 L629.56 344.5 L629.69 350.2 L629.81 349.7 L629.94 350.5 L630.06 345.9 L630.19 345.4 L630.31 346.4 L630.44 345.8 L630.56 350.9 L630.69 346.5 L630.81 351.1 L630.94 345.1 L631.06 348.3 L631.19 352.0 L631.31 345.0 L631.44 345.3 L631.56 345.4 L631.69 342.5 L631.81 346.3 L631.94 345.3 L632.06 353.6 L632.19 345.8 L632.31 340.9 L632.44 350.0 L632.56 350.0 L632.69 347.1 L632.81 348.0 L632.94 349.3 L633.06 345.5 L633.19 347.3 L633.31 347.6 L633.44 352.1 L633.56 351.3 L633.69 347.7 L633.81 343.2 L633.94 349.8 L634.06 347.0 L634.19 350.6 L634.31 347.3 L634.44 347.7 L634.56 349.1 L634.69 345.0 L634.81 345.2 L634.94 353.9 L635.06 344.6 L635.19 349.9 L635.31 349.2 L635.44 349.6 L635.56 351.2 L635.69 343.3 L635.81 350.0 L635.94 341.1 L636.06 347.3 L636.19 348.2 L636.31 350.2 L636.44 350.4 L636.56 344.4 L636.69 346.4 L636.81 346.7 L636.94 345.1 L637.06 344.8 L637.19 345.2 L637.31 350.5 L637.44 351.2 L637.56 349.4 L637.69 352.1 L637.81 347.4 L637.94 344.0 L638.06 345.3 L638.19 347.8 L638.31 350.2 L638.44 350.8 L638.56 344.5 L638.69 350.0 L638.81 345.6 L638.94 348.9 L639.06 349.8 L639.19 351.5 L639.31 345.6 L639.44 347.9 L639.56 348.4 L639.69 346.0 L639.81 347.4 L639.94 348.9 L640.06 342.4 L640.19 345.3 L640.31 353.9 L640.44 348.5 L640.56 345.5 L640.69 341.8 L640.81 344.4 L640.94 348.7 L641.06 349.1 L641.19 348.5 L641.31 348.9 L641.44 345.4 L641.56 351.8 L641.69 343.9 L641.81 348.7 L641.94 346.4 L642.06 342.2 L642.19 349.8 L642.31 346.4 L642.44 349.3 L642.56 350.9 L642.69 347.7 L642.81 345.2 L642.94 346.6 L643.06 347.0 L643.19 351.4 L643.31 349.7 L643.44 351.9 L643.56 349.4 L643.69 344.9 L643.81 349.9 L643.94 350.0 L644.06 346.8 L644.19 348.6 L644.31 346.2 L644.44 343.5 L644.56 346.9 L644.69 349.4 L644.81 346.1 L644.94 340.6 L645.06 344.8 L645.19 350.4 L645.31 347.8 L645.44 350.5 L645.56 345.0 L645.69 346.0 L645.81 344.2 L645.94 344.9 L646.06 348.7 L646.19 347.6 L646.31 345.7 L646.44 348.1 L646.56 343.3 L646.69 346.0 L646.81 342.8 L646.94 342.8 L647.06 343.2 L647.19 344.0 L647.31 351.8 L647.44 351.2 L647.56 350.8 L647.69 345.5 L647.81 349.0 L647.94 343.9 L648.06 345.6 L648.19 347.9 L648.31 342.5 L648.44 347.8 L648.56 348.9 L648.69 341.1 L648.81 340.0 L648.94 346.4 L649.06 346.8 L649.19 347.6 L649.31 343.9 L649.44 348.9 L649.56 347.5 L649.69 345.0 L649.81 351.9 L649.94 348.0 L650.06 349.3 L650.19 352.7 L650.31 345.7 L650.44 346.5 L650.56 342.1 L650.69 346.5 L650.81 348.4 L650.94 354.6 L651.06 348.8 L651.19 347.8 L651.31 343.5 L651.44 344.7 L651.56 341.8 L651.69 343.1 L651.81 347.5 L651.94 348.1 L652.06 344.5 L652.19 346.6 L652.31 344.8 L652.44 349.0 L652.56 349.0 L652.69 345.5 L652.81 345.8 L652.94 343.6 L653.06 345.8 L653.19 353.7 L653.31 347.1 L653.44 349.7 L653.56 348.8 L653.69 351.6 L653.81 346.2 L653.94 344.5 L654.06 350.2 L654.19 349.9 L654.31 345.2 L654.44 350.4 L654.56 347.1 L654.69 347.1 L654.81 352.5 L654.94 348.8 L655.06 348.1 L655.19 346.3 L655.31 347.7 L655.44 350.3 L655.56 348.5 L655.69 345.0 L655.81 348.5 L655.94 346.8 L656.06 348.1 L656.19 346.6 L656.31 340.8 L656.44 342.4 L656.56 346.0 L656.69 340.7 L656.81 342.8 L656.94 353.2 L657.06 349.2 L657.19 345.8 L657.31 348.1 L657.44 340.6 L657.56 347.9 L657.69 350.1 L657.81 347.7 L657.94 343.3 L658.06 350.0 L658.19 345.6 L658.31 345.5 L658.44 347.8 L658.56 346.3 L658.69 353.2 L658.81 346.7 L658.94 353.6 L659.06 348.5 L659.19 343.5 L659.31 347.1 L659.44 347.4 L659.56 351.4 L659.69 351.0 L659.81 354.6 L659.94 345.2 L660.06 345.9 L660.19 354.1 L660.31 344.5 L660.44 348.3 L660.56 351.9 L660.69 344.2 L660.81 346.1 L660.94 345.0 L661.06 348.7 L661.19 348.4 L661.31 347.0 L661.44 349.2 L661.56 344.8 L661.69 346.1 L661.81 348.5 L661.94 353.2 L662.06 347.0 L662.19 347.4 L662.31 351.0 L662.44 347.4 L662.56 351.0 L662.69 347.9 L662.81 350.5 L662.94 347.7 L663.06 344.5 L663.19 344.7 L663.31 348.4 L663.44 352.8 L663.56 352.6 L663.69 346.3 L663.81 354.5 L663.94 343.9 L664.06 344.7 L664.19 350.0 L664.31 342.7 L664.44 349.9 L664.56 348.3 L664.69 349.1 L664.81 343.6 L664.94 348.3 L665.06 349.9 L665.19 347.0 L665.31 350.2 L665.44 347.3 L665.56 348.2 L665.69 346.3 L665.81 343.2 L665.94 346.7 L666.06 348.6 L666.19 344.9 L666.31 341.4 L666.44 342.6 L666.56 351.0 L666.69 346.5 L666.81 344.9 L666.94 350.9 L667.06 346.6 L667.19 342.7 L667.31 345.9 L667.44 344.6 L667.56 346.6 L667.69 344.5 L667.81 347.4 L667.94 348.6 L668.06 345.5 L668.19 346.6 L668.31 346.7 L668.44 349.7 L668.56 345.0 L668.69 349.4 L668.81 350.8 L668.94 346.6 L669.06 344.3 L669.19 346.3 L669.31 341.9 L669.44 345.6 L669.56 343.6 L669.69 346.7 L669.81 346.1 L669.94 348.7 L670.06 347.5 L670.19 348.5 L670.31 347.0 L670.44 348.0 L670.56 343.8 L670.69 349.2 L670.81 351.0 L670.94 350.5 L671.06 343.2 L671.19 348.5 L671.31 342.4 L671.44 349.5 L671.56 346.5 L671.69 345.8 L671.81 345.0 L671.94 346.5 L672.06 347.1 L672.19 344.3 L672.31 347.3 L672.44 348.0 L672.56 348.7 L672.69 347.1 L672.81 347.1 L672.94 354.1 L673.06 350.1 L673.19 348.2 L673.31 343.1 L673.44 349.1 L673.56 348.8 L673.69 339.2 L673.81 346.7 L673.94 348.3 L674.06 347.3 L674.19 347.5 L674.31 346.7 L674.44 351.3 L674.56 348.3 L674.69 346.4 L674.81 346.5 L674.94 353.5 L675.06 344.6 L675.19 345.6 L675.31 348.1 L675.44 347.6 L675.56 348.0 L675.69 351.3 L675.81 350.5 L675.94 348.5 L676.06 347.3 L676.19 347.0 L676.31 346.5 L676.44 350.2 L676.56 343.4 L676.69 344.1 L676.81 345.8 L676.94 344.3 L677.06 345.0 L677.19 350.8 L677.31 340.5 L677.44 348.9 L677.56 343.3 L677.69 346.5 L677.81 345.5 L677.94 344.2 L678.06 342.8 L678.19 347.4 L678.31 339.2 L678.44 340.8 L678.56 346.0 L678.69 350.5 L678.81 352.6 L678.94 346.3 L679.06 344.8 L679.19 346.3 L679.31 348.5 L679.44 350.0 L679.56 344.3 L679.69 348.6 L679.81 347.1 L679.94 350.6 L680.06 346.0 L680.19 346.6 L680.31 344.6 L680.44 343.2 L680.56 348.0 L680.69 349.3 L680.81 350.5 L680.94 348.0" fill="none" stroke="#0ee8ee" stroke-width="0.6"/>
<rect x="139" y="246.9" width="1" height="97.3" fill="#053838"/>
<rect x="268" y="246.9" width="1" height="97.3" fill="#053838"/>
<rect x="423" y="246.9" width="1" height="97.3" fill="#053838"/>
<rect x="554" y="246.9" width="1" height="97.3" fill="#053838"/>
<rect x="29" y="10" width="653" height="1" fill="#7f9fdc"/>
<rect x="29" y="10" width="1" height="415" fill="#7f9fdc"/>
<rect x="681" y="10" width="1" height="427" fill="#7f9fdc"/>
<rect x="29" y="435" width="653" height="2" fill="#7f9fdc"/>
<rect x="201" y="5" width="309" height="1.5" fill="#14a08c"/>
<path d="M201.2 1.2 Q199.6 5.5 201.2 9.8" fill="none" stroke="#d8c8c8" stroke-width="1"/>
<path d="M509.8 1.2 Q511.4 5.5 509.8 9.8" fill="none" stroke="#d8c8c8" stroke-width="1"/>
<path d="M352.6 0.2 H358.6 L357.6 2.6 H353.6 Z" fill="#f5a000"/>
<path d="M353.4 2.4 H358 V8.6 Q358 10.6 355.7 10.6 Q353.4 10.6 353.4 8.6 Z" fill="#f5a000"/>
<rect x="355.1" y="3.2" width="1.2" height="6.2" fill="#1a0e00"/>
<path d="M351.8 10.4 H359.7 L355.75 14.6 Z" fill="#f5a000"/>
<path d="M351.2 17.2 Q355.5 14.4 359.9 17.2 V23.6 L355.5 26.3 L351.2 23.6 Z" fill="#f5a000"/>
<path d="M352.6 17.6 Q355.5 16.2 358.5 17.6" fill="none" stroke="#2a1800" stroke-width="0.9"/>
<rect x="354.9" y="17.2" width="1.3" height="6.6" fill="#1a0e00"/>
<path d="M16.5 175.8 H24.5 L28.8 181 L24.5 186.2 H16.5 Z" fill="#000" stroke="#f0f000" stroke-width="1.2"/>
<path d="M16 344.5 H24.5 L28.8 349.8 L24.5 355.2 H16 Z" fill="#0ee8ee" stroke="#0a2a50" stroke-width="0.6"/>
<path d="M20.0 177.3 H21.6 V184.2 H20.1 V179.6 Q19.4 180.2 18.5 180.3 V179.0 Q19.6 178.7 20.0 177.3 Z" fill="#f0f000"/>
<path d="M673.5 126.6 L677.8 122.8 V130.4 Z" fill="#f0f000"/><rect x="677" y="125.6" width="4" height="2" fill="#f0f000"/>
<rect x="29.5" y="424.5" width="361" height="13" rx="3.5" fill="#0d0b04" stroke="#8a8a8a" stroke-width="1"/>
<rect x="29" y="437.6" width="362" height="1.4" fill="#7f9fdc"/>
<rect x="29.5" y="439.5" width="361.5" height="59.5" rx="4" fill="#0d0b04" stroke="#8a8a8a" stroke-width="1"/>
<rect x="397" y="437" width="95.5" height="24" rx="4" fill="#0d0b04" stroke="#8a8a8a" stroke-width="1"/>
<rect x="499.5" y="437" width="68.5" height="24" rx="4" fill="#0d0b04" stroke="#8a8a8a" stroke-width="1"/>
<rect x="575" y="437" width="106.5" height="23.5" rx="4" fill="#0d0b04" stroke="#8a8a8a" stroke-width="1"/>
<rect x="609" y="475" width="72.5" height="23.3" rx="4" fill="#0d0b04" stroke="#8a8a8a" stroke-width="1"/>
<rect x="33" y="426.8" width="16.5" height="10.199999999999989" rx="5.099999999999994" fill="#f0f000"/>
<path d="M40.75 428.40 H42.45 V435.20 H40.85 V430.50 Q40.05 431.20 39.15 431.30 V429.90 Q40.25 429.50 40.75 428.40 Z" fill="#000"/>
<rect x="123.6" y="426.8" width="16.400000000000006" height="10.199999999999989" rx="5.099999999999994" fill="#0ee8ee"/>
<rect x="33" y="452.6" width="16.700000000000003" height="10.199999999999989" rx="5.099999999999994" fill="#f0f000"/>
<path d="M40.85 454.20 H42.55 V461.00 H40.95 V456.30 Q40.15 457.00 39.25 457.10 V455.70 Q40.35 455.30 40.85 454.20 Z" fill="#000"/>
<rect x="33" y="464.2" width="16.700000000000003" height="10.199999999999989" rx="5.099999999999994" fill="#f0f000"/>
<path d="M40.85 465.80 H42.55 V472.60 H40.95 V467.90 Q40.15 468.60 39.25 468.70 V467.30 Q40.35 466.90 40.85 465.80 Z" fill="#000"/>
<rect x="33" y="476.2" width="16.700000000000003" height="10.199999999999989" rx="5.099999999999994" fill="#0ee8ee"/>
<rect x="33" y="488.0" width="16.700000000000003" height="10.199999999999989" rx="5.099999999999994" fill="#0ee8ee"/>
<rect x="399.7" y="450.3" width="8.1" height="8.1" rx="1.6" fill="#f5a000"/>
<path d="M401.3 451.7 H406.3 V453.0 H404.6 V457.4 H403.0 V453.0 H401.3 Z" fill="#000"/>
<path d="M408.2 454.2 H412.5" stroke="#f5a000" stroke-width="1.1"/><path d="M411.6 452.2 L414.2 454.2 L411.6 456.2 Z" fill="#f5a000"/>
<path d="M414.9 451.9 H421.8 L418.35 456.1 Z" fill="#f5a000"/>
<rect x="595.4" y="438.9" width="16.100000000000023" height="9.700000000000045" rx="4.850000000000023" fill="#f0f000"/>
<path d="M602.95 440.25 H604.65 V447.05 H603.05 V442.35 Q602.25 443.05 601.35 443.15 V441.75 Q602.45 441.35 602.95 440.25 Z" fill="#000"/>
<path d="M620.6 446.6 H622.6 Q623.6 446.6 624.0 445.4 L625.6 441.2 Q626.0 440.2 627.0 440.2 H628.6" fill="none" stroke="#e8e8e8" stroke-width="1.6"/>
</svg>
<div class="p" style="left:14.8px;top:345.3px;width:12px;height:10px;line-height:10px;font-size:9.6px">2</div>
<div class="p" style="left:123.6px;top:427.70px;width:16.400000000000006px;height:10.199999999999989px;line-height:10.199999999999989px">2</div>
<div class="t" style="left:60.73px;top:427.08px;font-size:10.3px;color:#f0f000;font-weight:normal;letter-spacing:0.517px;-webkit-text-stroke:0.25px #f0f000">2.00 V</div>
<div class="t" style="left:151.32px;top:427.08px;font-size:10.3px;color:#0ee8ee;font-weight:normal;letter-spacing:0.517px;-webkit-text-stroke:0.25px #0ee8ee">2.00 V</div>
<div class="t" style="left:119.12px;top:442.08px;font-size:10.3px;color:#e8e8e8;font-weight:normal;letter-spacing:0.539px;-webkit-text-stroke:0.25px #e8e8e8">Value</div>
<div class="t" style="left:176.62px;top:442.08px;font-size:10.3px;color:#e8e8e8;font-weight:normal;letter-spacing:0.333px;-webkit-text-stroke:0.25px #e8e8e8">Mean</div>
<div class="t" style="left:230.62px;top:442.08px;font-size:10.3px;color:#e8e8e8;font-weight:normal;letter-spacing:0.953px;-webkit-text-stroke:0.25px #e8e8e8">Min</div>
<div class="t" style="left:283.93px;top:442.08px;font-size:10.3px;color:#e8e8e8;font-weight:normal;letter-spacing:1.140px;-webkit-text-stroke:0.25px #e8e8e8">Max</div>
<div class="t" style="left:337.12px;top:442.08px;font-size:10.3px;color:#e8e8e8;font-weight:normal;letter-spacing:0.406px;-webkit-text-stroke:0.25px #e8e8e8">Std Dev</div>
<div class="t" style="left:55.42px;top:454.08px;font-size:10.3px;color:#f0f000;font-weight:normal;letter-spacing:0.834px;-webkit-text-stroke:0.25px #f0f000">Freq</div>
<div class="t" style="left:119.42px;top:454.08px;font-size:10.3px;color:#f0f000;font-weight:normal;letter-spacing:0.776px;-webkit-text-stroke:0.25px #f0f000">1.146kHz</div>
<div class="t" style="left:176.72px;top:454.08px;font-size:10.3px;color:#f0f000;font-weight:normal;letter-spacing:0.869px;-webkit-text-stroke:0.25px #f0f000">1.146k</div>
<div class="t" style="left:230.72px;top:454.08px;font-size:10.3px;color:#f0f000;font-weight:normal;letter-spacing:0.869px;-webkit-text-stroke:0.25px #f0f000">1.146k</div>
<div class="t" style="left:283.93px;top:454.08px;font-size:10.3px;color:#f0f000;font-weight:normal;letter-spacing:0.869px;-webkit-text-stroke:0.25px #f0f000">1.146k</div>
<div class="t" style="left:337.12px;top:454.08px;font-size:10.3px;color:#f0f000;font-weight:normal;letter-spacing:0.612px;-webkit-text-stroke:0.25px #f0f000">0.000</div>
<div class="t" style="left:55.42px;top:465.68px;font-size:10.3px;color:#f0f000;font-weight:normal;letter-spacing:0.821px;-webkit-text-stroke:0.25px #f0f000">+Duty</div>
<div class="t" style="left:119.42px;top:465.68px;font-size:10.3px;color:#f0f000;font-weight:normal;letter-spacing:0.358px;-webkit-text-stroke:0.25px #f0f000">45.03 %</div>
<div class="t" style="left:176.72px;top:465.68px;font-size:10.3px;color:#f0f000;font-weight:normal;letter-spacing:0.912px;-webkit-text-stroke:0.25px #f0f000">45.03</div>
<div class="t" style="left:230.72px;top:465.68px;font-size:10.3px;color:#f0f000;font-weight:normal;letter-spacing:0.912px;-webkit-text-stroke:0.25px #f0f000">45.03</div>
<div class="t" style="left:283.93px;top:465.68px;font-size:10.3px;color:#f0f000;font-weight:normal;letter-spacing:0.912px;-webkit-text-stroke:0.25px #f0f000">45.03</div>
<div class="t" style="left:337.12px;top:465.68px;font-size:10.3px;color:#f0f000;font-weight:normal;letter-spacing:0.612px;-webkit-text-stroke:0.25px #f0f000">0.000</div>
<div class="p" style="left:33px;top:477.10px;width:16.700000000000003px;height:10.199999999999989px;line-height:10.199999999999989px">2</div>
<div class="t" style="left:55.42px;top:477.68px;font-size:10.3px;color:#0ee8ee;font-weight:normal;letter-spacing:0.834px;-webkit-text-stroke:0.25px #0ee8ee">Freq</div>
<div class="t" style="left:119.42px;top:477.68px;font-size:10.3px;color:#0ee8ee;font-weight:normal;letter-spacing:0.776px;-webkit-text-stroke:0.25px #0ee8ee">1.145kHz</div>
<div class="t" style="left:176.72px;top:477.68px;font-size:10.3px;color:#0ee8ee;font-weight:normal;letter-spacing:0.869px;-webkit-text-stroke:0.25px #0ee8ee">1.145k</div>
<div class="t" style="left:230.72px;top:477.68px;font-size:10.3px;color:#0ee8ee;font-weight:normal;letter-spacing:0.869px;-webkit-text-stroke:0.25px #0ee8ee">1.145k</div>
<div class="t" style="left:283.93px;top:477.68px;font-size:10.3px;color:#0ee8ee;font-weight:normal;letter-spacing:0.869px;-webkit-text-stroke:0.25px #0ee8ee">1.145k</div>
<div class="t" style="left:337.12px;top:477.68px;font-size:10.3px;color:#0ee8ee;font-weight:normal;letter-spacing:0.612px;-webkit-text-stroke:0.25px #0ee8ee">0.000</div>
<div class="p" style="left:33px;top:488.90px;width:16.700000000000003px;height:10.199999999999989px;line-height:10.199999999999989px">2</div>
<div class="t" style="left:55.42px;top:489.48px;font-size:10.3px;color:#0ee8ee;font-weight:normal;letter-spacing:0.821px;-webkit-text-stroke:0.25px #0ee8ee">+Duty</div>
<div class="t" style="left:119.42px;top:489.48px;font-size:10.3px;color:#0ee8ee;font-weight:normal;letter-spacing:0.358px;-webkit-text-stroke:0.25px #0ee8ee">45.33 %</div>
<div class="t" style="left:176.72px;top:489.48px;font-size:10.3px;color:#0ee8ee;font-weight:normal;letter-spacing:0.912px;-webkit-text-stroke:0.25px #0ee8ee">45.33</div>
<div class="t" style="left:230.72px;top:489.48px;font-size:10.3px;color:#0ee8ee;font-weight:normal;letter-spacing:0.912px;-webkit-text-stroke:0.25px #0ee8ee">45.33</div>
<div class="t" style="left:283.93px;top:489.48px;font-size:10.3px;color:#0ee8ee;font-weight:normal;letter-spacing:0.912px;-webkit-text-stroke:0.25px #0ee8ee">45.33</div>
<div class="t" style="left:337.12px;top:489.48px;font-size:10.3px;color:#0ee8ee;font-weight:normal;letter-spacing:0.612px;-webkit-text-stroke:0.25px #0ee8ee">0.000</div>
<div class="t" style="left:400.73px;top:438.98px;font-size:10.3px;color:#e8e8e8;font-weight:normal;letter-spacing:0.719px;-webkit-text-stroke:0.25px #e8e8e8">200µs</div>
<div class="t" style="left:425.93px;top:449.68px;font-size:10.3px;color:#f5a000;font-weight:normal;letter-spacing:0.598px;-webkit-text-stroke:0.25px #f5a000">0.00000 s</div>
<div class="t" style="left:503.02px;top:439.08px;font-size:10.3px;color:#e8e8e8;font-weight:normal;letter-spacing:0.776px;-webkit-text-stroke:0.25px #e8e8e8">5.00MS/s</div>
<div class="t" style="left:503.02px;top:449.38px;font-size:10.3px;color:#e8e8e8;font-weight:normal;letter-spacing:0.920px;-webkit-text-stroke:0.25px #e8e8e8">10k points</div>
<div class="t" style="left:643.02px;top:438.68px;font-size:10.3px;color:#e8e8e8;font-weight:normal;letter-spacing:0.517px;-webkit-text-stroke:0.25px #e8e8e8">2.56 V</div>
<div class="t" style="left:612.92px;top:477.08px;font-size:10.3px;color:#e8e8e8;font-weight:normal;letter-spacing:0.614px;-webkit-text-stroke:0.25px #e8e8e8">12 May 2011</div>
<div class="t" style="left:612.92px;top:487.68px;font-size:10.3px;color:#e8e8e8;font-weight:normal;letter-spacing:0.747px;-webkit-text-stroke:0.25px #e8e8e8">14:50:52</div>
<div class="t" style="left:16.3px;top:-0.5px;font-family:'Liberation Serif',serif;font-weight:bold;font-size:12.2px;color:#6200a8;letter-spacing:0.2px;-webkit-text-stroke:0.2px #6200a8">Tek</div>
<div class="t" style="left:38.80px;top:0.74px;font-size:10.0px;color:#f0f0f8;font-weight:bold;letter-spacing:0.233px;-webkit-text-stroke:0.2px #f0f0f8">Stop</div>
</body></html>
